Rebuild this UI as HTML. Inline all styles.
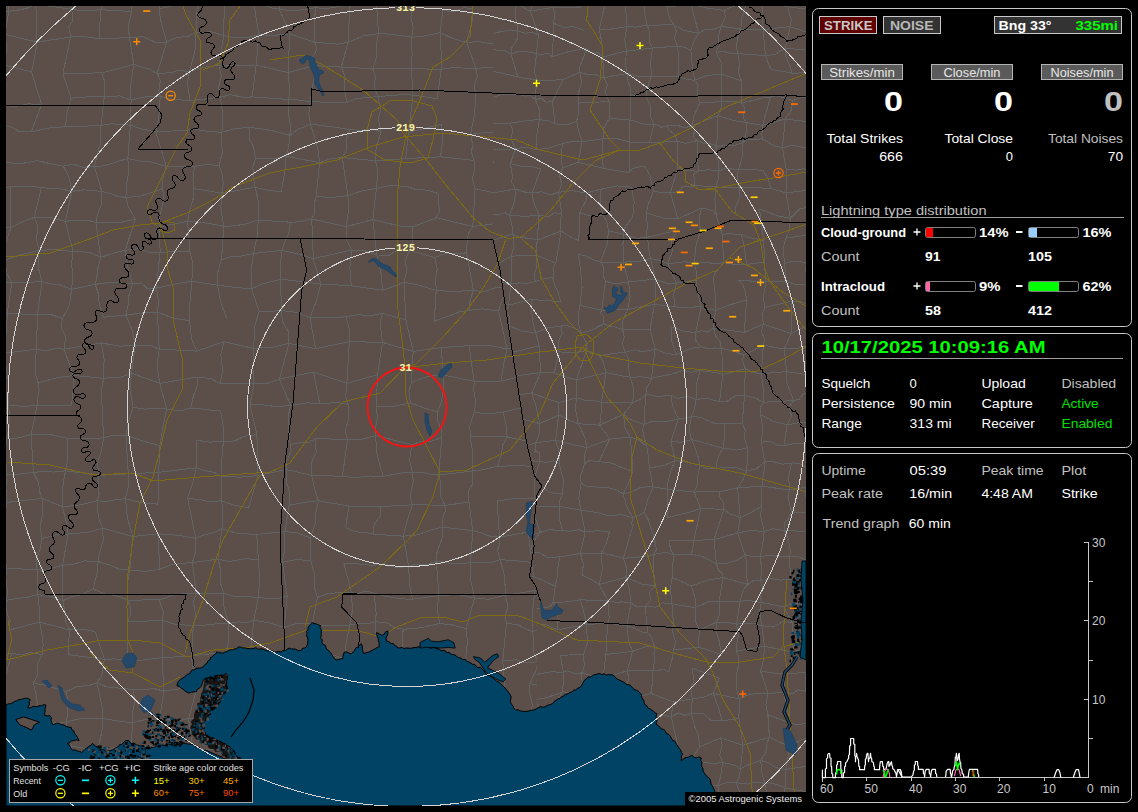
<!DOCTYPE html><html><head><meta charset="utf-8"><style>html,body{margin:0;padding:0;background:#000;width:1138px;height:812px;overflow:hidden}svg{display:block}</style></head><body>
<svg width="1138" height="812" viewBox="0 0 1138 812">
<rect width="1138" height="812" fill="#000"/>
<defs><clipPath id="mc"><rect x="6" y="6" width="800" height="800"/></clipPath></defs>
<g clip-path="url(#mc)">
<rect x="6" y="6" width="800" height="800" fill="#5c4f4a"/>
<clipPath id="ce"><path d="M493.0 6.0 L493.0 240.0 L500.0 270.0 L510.0 337.0 L523.0 420.0 L526.7 443.0 L534.5 476.0 L542.0 486.0 L537.0 507.0 L529.0 532.0 L532.0 578.0 L536.7 594.0 L536.7 806.0 L806.0 806.0 L806.0 6.0Z"/></clipPath>
<clipPath id="cw"><path d="M0 0L493 0L493.0 240.0 L500.0 270.0 L510.0 337.0 L523.0 420.0 L526.7 443.0 L534.5 476.0 L542.0 486.0 L537.0 507.0 L529.0 532.0 L532.0 578.0 L536.7 594.0 L536.7 806.0L536.7 820L0 820Z"/></clipPath>
<path clip-path="url(#cw)" d="M-28.8 -30.8L5.6 -22.3M-28.8 -30.8L-27.4 8.4M5.6 -22.3L17.4 -25.2L25.6 -25.6L36.0 -25.2M5.6 -22.3L8.8 11.2M36.0 -25.2L35.8 4.3M62.2 -25.2L65.2 -10.2L71.7 9.2M104.3 -20.8L118.9 -26.8L132.8 -29.7M104.3 -20.8L104.7 -3.6L100.8 9.7M132.8 -29.7L147.9 -25.5L165.7 -20.7M132.8 -29.7L131.7 11.5M165.7 -20.7L159.0 8.9M188.0 -23.4L200.3 -24.2L217.2 -29.6M188.0 -23.4L197.4 4.0M217.2 -29.6L226.9 -29.7L239.5 -30.4L251.8 -29.1M217.2 -29.6L220.4 -18.0L221.0 -6.9L224.3 4.4M251.8 -29.1L266.2 -27.6L273.9 -23.4L288.1 -21.2M251.8 -29.1L253.5 0.9M288.1 -21.2L301.8 -24.6L314.1 -27.2M288.1 -21.2L283.0 -5.7L279.2 9.1M314.1 -27.2L342.3 -30.0M314.1 -27.2L315.8 -11.2L315.4 7.5M342.3 -30.0L345.5 -12.9L349.9 5.0M380.6 -23.8L386.9 -24.0L395.7 -23.9L403.7 -25.2M380.6 -23.8L376.4 2.0M403.7 -25.2L423.5 -22.1L438.8 -20.8M438.8 -20.8L473.6 -23.8M473.6 -23.8L487.8 -21.0L502.6 -19.6M473.6 -23.8L474.5 -8.4L472.8 8.4M502.6 -19.6L515.0 -21.9L524.5 -24.9L538.8 -26.9M502.6 -19.6L498.3 9.2M538.8 -26.9L534.2 -9.8L531.0 5.3M560.9 -21.4L572.5 -24.3L579.5 -25.9L589.8 -26.6M560.9 -21.4L562.5 -7.7L561.8 6.8M589.8 -26.6L599.1 -26.3L611.5 -26.1L620.8 -27.2M589.8 -26.6L590.6 -13.3L594.9 -5.4L596.9 6.9M620.8 -27.2L651.8 -27.5M651.8 -27.5L691.5 -20.1M651.8 -27.5L654.8 -13.8L661.1 3.6M691.5 -20.1L709.1 -20.2L722.5 -24.3M691.5 -20.1L692.1 -15.4L689.0 -6.2L687.3 1.1M722.5 -24.3L737.4 -25.1L751.4 -26.7M722.5 -24.3L716.6 1.0M751.4 -26.7L777.0 -25.8M751.4 -26.7L751.5 -17.3L751.5 -5.6L748.1 8.5M777.0 -25.8L786.7 7.5M814.8 -30.2L809.2 7.9M837.2 -21.8L839.2 -9.5L841.2 -2.0L844.5 9.9M-27.4 8.4L8.8 11.2M-27.4 8.4L-24.6 41.9M8.8 11.2L16.5 10.4L26.6 8.4L35.8 4.3M8.8 11.2L5.0 34.4M35.8 4.3L71.7 9.2M35.8 4.3L36.3 15.7L36.4 27.8L37.2 42.1M71.7 9.2L84.5 11.0L100.8 9.7M71.7 9.2L72.9 20.3L68.8 26.9L70.7 36.9M100.8 9.7L131.7 11.5M100.8 9.7L99.0 38.8M131.7 11.5L128.3 25.8L129.4 37.6M159.0 8.9L179.4 4.0L197.4 4.0M159.0 8.9L160.8 20.7L164.2 33.4L166.7 42.2M197.4 4.0L213.0 3.3L224.3 4.4M197.4 4.0L196.5 20.5L196.1 32.5M224.3 4.4L233.5 4.1L244.1 1.7L253.5 0.9M224.3 4.4L223.7 35.4M253.5 0.9L260.5 2.8L270.9 7.8L279.2 9.1M253.5 0.9L258.9 34.8M279.2 9.1L289.2 10.4L305.2 9.8L315.4 7.5M279.2 9.1L290.2 33.9M315.4 7.5L325.7 8.8L337.3 6.7L349.9 5.0M315.4 7.5L314.5 24.3L315.0 42.5M349.9 5.0L356.7 4.8L368.0 4.0L376.4 2.0M349.9 5.0L348.1 42.2M376.4 2.0L387.9 3.2L402.5 6.3L412.5 10.0M376.4 2.0L378.5 33.7M412.5 10.0L410.9 16.9L413.3 27.9L411.6 37.3M442.8 10.5L453.9 11.7L463.8 7.8L472.8 8.4M442.8 10.5L440.1 32.6M472.8 8.4L471.9 23.0L466.7 42.2M498.3 9.2L514.7 4.9L531.0 5.3M498.3 9.2L501.4 27.3L507.5 42.6M531.0 5.3L530.8 16.7L531.3 31.6M561.8 6.8L578.9 9.2L596.9 6.9M561.8 6.8L565.4 25.5L564.6 39.8M596.9 6.9L608.1 5.0L614.5 3.9L623.8 2.6M596.9 6.9L597.0 17.3L596.8 31.6M661.1 3.6L671.3 1.0L678.7 2.6L687.3 1.1M661.1 3.6L660.4 16.3L654.9 30.9L651.7 41.2M687.3 1.1L697.5 3.2L706.6 2.5L716.6 1.0M687.3 1.1L691.6 17.9L693.9 34.0M716.6 1.0L730.7 2.8L748.1 8.5M716.6 1.0L713.6 42.8M748.1 8.5L765.3 7.2L786.7 7.5M748.1 8.5L748.2 23.2L753.2 36.5M786.7 7.5L809.2 7.9M786.7 7.5L780.7 42.0M809.2 7.9L820.5 7.3L834.3 11.2L844.5 9.9M809.2 7.9L807.1 14.1L812.4 25.7L810.3 31.6M844.5 9.9L846.6 16.7L846.4 28.0L844.4 34.8M-24.6 41.9L5.0 34.4M-24.6 41.9L-22.8 73.4M5.0 34.4L37.2 42.1M5.0 34.4L6.8 48.8L4.3 65.0M37.2 42.1L53.8 39.6L70.7 36.9M37.2 42.1L34.6 57.2L31.6 72.0M70.7 36.9L83.4 36.4L99.0 38.8M70.7 36.9L62.9 73.4M99.0 38.8L129.4 37.6M129.4 37.6L143.1 36.7L156.7 43.0L166.7 42.2M129.4 37.6L133.8 64.3M166.7 42.2L174.6 38.2L188.4 36.1L196.1 32.5M166.7 42.2L157.1 73.5M196.1 32.5L211.7 31.8L223.7 35.4M196.1 32.5L194.9 51.5L189.5 71.5M223.7 35.4L234.1 37.7L249.5 37.2L258.9 34.8M223.7 35.4L219.0 65.6M258.9 34.8L274.1 35.3L290.2 33.9M258.9 34.8L257.2 46.5L257.1 55.2L256.1 65.0M290.2 33.9L315.0 42.5M290.2 33.9L288.7 54.6L288.0 72.6M315.0 42.5L323.7 43.0L338.5 44.2L348.1 42.2M315.0 42.5L316.9 49.5L312.8 57.0L313.8 65.6M348.1 42.2L363.9 35.8L378.5 33.7M348.1 42.2L341.3 67.1M378.5 33.7L387.0 34.0L401.0 35.5L411.6 37.3M378.5 33.7L376.5 43.8L376.5 57.8L372.8 68.9M411.6 37.3L421.8 36.5L431.6 34.5L440.1 32.6M411.6 37.3L412.1 54.9L411.3 68.8M440.1 32.6L449.8 37.1L459.8 40.8L466.7 42.2M440.1 32.6L440.9 47.3L441.3 57.8L441.2 69.2M466.7 42.2L479.9 41.8L495.6 44.3L507.5 42.6M466.7 42.2L475.8 68.4M507.5 42.6L531.3 31.6M507.5 42.6L506.3 66.2M531.3 31.6L564.6 39.8M531.3 31.6L530.8 49.8L528.7 64.7M564.6 39.8L567.5 64.8M596.8 31.6L622.8 39.5M596.8 31.6L598.3 72.8M622.8 39.5L651.7 41.2M622.8 39.5L623.2 45.5L626.3 56.5L626.5 63.7M651.7 41.2L653.5 47.3L655.8 57.8L658.5 66.6M693.9 34.0L713.6 42.8M693.9 34.0L692.9 64.7M713.6 42.8L728.7 39.6L740.9 37.5L753.2 36.5M713.6 42.8L714.1 51.2L714.8 59.9L715.8 67.8M753.2 36.5L753.0 43.6L750.6 53.9L749.9 64.3M780.7 42.0L789.8 40.5L802.2 35.7L810.3 31.6M780.7 42.0L779.6 49.9L782.0 58.8L779.5 70.0M810.3 31.6L829.4 33.7L844.4 34.8M810.3 31.6L810.2 49.0L811.6 62.7M844.4 34.8L843.4 51.6L842.0 67.0M-22.8 73.4L-25.6 93.3M4.3 65.0L31.6 72.0M4.3 65.0L6.1 85.0L3.3 104.4M31.6 72.0L36.3 87.6L41.6 104.3M62.9 73.4L101.5 72.9M62.9 73.4L71.1 98.2M101.5 72.9L119.8 68.3L133.8 64.3M101.5 72.9L104.6 81.1L104.5 90.6L104.3 96.6M133.8 64.3L139.9 66.7L150.5 69.5L157.1 73.5M133.8 64.3L132.2 74.7L130.4 88.0L131.1 100.0M157.1 73.5L169.6 72.8L178.6 70.4L189.5 71.5M157.1 73.5L160.4 80.8L159.0 90.6L160.3 96.0M189.5 71.5L200.7 68.2L209.4 66.4L219.0 65.6M189.5 71.5L187.4 83.5L188.3 88.6L190.0 100.7M219.0 65.6L256.1 65.0M219.0 65.6L221.4 75.8L218.6 87.2L220.4 97.2M256.1 65.0L288.0 72.6M256.1 65.0L252.2 96.9M288.0 72.6L313.8 65.6M288.0 72.6L288.9 80.0L289.3 88.7L288.9 99.5M313.8 65.6L341.3 67.1M313.8 65.6L314.5 76.2L311.7 90.3L310.2 101.9M341.3 67.1L357.3 67.9L372.8 68.9M341.3 67.1L345.1 77.0L344.2 89.7L347.0 102.3M372.8 68.9L390.0 68.0L411.3 68.8M372.8 68.9L375.2 76.4L374.6 88.0L377.9 96.7M411.3 68.8L441.2 69.2M411.3 68.8L413.1 95.1M441.2 69.2L451.8 67.8L462.2 68.0L475.8 68.4M441.2 69.2L437.3 98.8M475.8 68.4L506.3 66.2M475.8 68.4L477.4 76.5L474.6 84.3L475.3 94.4M506.3 66.2L528.7 64.7M506.3 66.2L503.3 84.5L500.1 99.4M528.7 64.7L567.5 64.8M528.7 64.7L531.4 75.3L531.2 86.7L535.1 94.3M598.3 72.8L597.7 81.4L594.3 91.1L595.2 97.6M626.5 63.7L625.9 84.7L623.8 103.7M658.5 66.6L692.9 64.7M658.5 66.6L659.4 76.9L662.9 87.0L662.9 95.1M692.9 64.7L706.0 65.0L715.8 67.8M692.9 64.7L684.5 101.0M715.8 67.8L724.9 69.0L740.1 63.3L749.9 64.3M715.8 67.8L716.6 79.7L718.1 91.7L722.2 102.9M749.9 64.3L779.5 70.0M749.9 64.3L747.6 95.5M779.5 70.0L794.7 64.5L811.6 62.7M779.5 70.0L777.3 83.6L775.9 97.5M811.6 62.7L812.7 103.5M842.0 67.0L841.4 78.5L837.4 94.1M-25.6 93.3L-14.9 98.1L-7.4 101.6L3.3 104.4M3.3 104.4L14.3 106.9L27.8 103.9L41.6 104.3M3.3 104.4L1.5 125.2M41.6 104.3L31.3 131.8M71.1 98.2L86.1 97.0L104.3 96.6M71.1 98.2L67.2 111.8L65.4 126.9M104.3 96.6L119.3 95.9L131.1 100.0M104.3 96.6L101.0 125.5M131.1 100.0L146.2 96.7L160.3 96.0M131.1 100.0L130.4 125.1M160.3 96.0L167.9 98.7L182.0 100.0L190.0 100.7M160.3 96.0L159.0 115.6L155.8 132.0M190.0 100.7L220.4 97.2M220.4 97.2L230.7 94.6L242.8 97.5L252.2 96.9M220.4 97.2L223.0 115.9L221.8 132.4M252.2 96.9L288.9 99.5M288.9 99.5L298.4 100.0L310.2 101.9M288.9 99.5L288.3 113.2L290.4 125.1L289.9 135.4M310.2 101.9L347.0 102.3M310.2 101.9L308.8 113.6L310.5 124.0M347.0 102.3L356.1 98.6L368.2 97.3L377.9 96.7M377.9 96.7L390.9 95.5L402.9 94.7L413.1 95.1M377.9 96.7L380.9 110.0L378.2 118.7L381.1 131.7M413.1 95.1L437.3 98.8M413.1 95.1L408.4 132.5M475.3 94.4L474.9 112.4L470.6 134.6M500.1 99.4L516.6 98.1L535.1 94.3M500.1 99.4L500.9 111.5L501.9 123.4L505.4 131.9M535.1 94.3L549.8 98.6L567.1 99.7M567.1 99.7L574.3 97.8L588.0 100.8L595.2 97.6M567.1 99.7L564.1 111.8L562.8 121.1L561.5 128.7M595.2 97.6L607.9 100.3L623.8 103.7M595.2 97.6L596.6 133.9M623.8 103.7L642.3 100.9L662.9 95.1M662.9 95.1L674.6 98.4L684.5 101.0M662.9 95.1L661.6 107.0L656.7 119.9L654.3 129.3M684.5 101.0L722.2 102.9M684.5 101.0L683.2 131.5M747.6 95.5L775.9 97.5M747.6 95.5L749.9 106.8L752.4 119.4L755.5 129.0M775.9 97.5L794.5 102.7L812.7 103.5M775.9 97.5L780.0 109.9L781.1 121.2L781.4 135.7M812.7 103.5L837.4 94.1M812.7 103.5L812.0 115.4L814.5 130.1M837.4 94.1L842.4 106.5L843.5 119.4L846.1 129.7M-23.2 132.1L-9.6 129.9L1.5 125.2M-23.2 132.1L-21.0 142.9L-22.3 157.7M1.5 125.2L9.3 126.3L19.0 131.2L31.3 131.8M31.3 131.8L45.1 128.8L52.9 127.2L65.4 126.9M65.4 126.9L101.0 125.5M101.0 125.5L112.1 123.7L120.0 124.7L130.4 125.1M101.0 125.5L100.9 141.4L97.2 155.1L94.3 166.6M130.4 125.1L142.3 129.0L155.8 132.0M130.4 125.1L127.8 158.4M155.8 132.0L195.5 129.5M155.8 132.0L166.3 166.5M195.5 129.5L209.9 131.5L221.8 132.4M221.8 132.4L233.9 128.8L248.9 127.3M221.8 132.4L221.6 141.4L222.3 152.3L219.1 165.3M248.9 127.3L263.4 129.0L274.0 131.1L289.9 135.4M248.9 127.3L249.6 139.9L253.4 146.1L255.4 158.5M289.9 135.4L297.7 129.2L302.8 127.4L310.5 124.0M289.9 135.4L288.8 146.0L286.2 156.3M310.5 124.0L350.2 129.4M310.5 124.0L314.3 136.2L318.2 150.7L319.5 162.7M350.2 129.4L360.1 130.7L370.9 129.0L381.1 131.7M350.2 129.4L345.9 139.9L346.9 149.2L342.3 157.6M381.1 131.7L376.1 148.1L375.5 160.7M408.4 132.5L441.3 124.2M408.4 132.5L405.8 158.6M441.3 124.2L442.8 138.9L440.6 156.8M470.6 134.6L480.9 133.0L494.0 132.3L505.4 131.9M470.6 134.6L473.1 145.6L471.1 151.1L474.0 160.4M505.4 131.9L534.5 133.8M505.4 131.9L500.7 149.1L500.9 161.9M534.5 133.8L545.5 129.0L561.5 128.7M534.5 133.8L528.9 165.7M561.5 128.7L577.0 131.8L596.6 133.9M561.5 128.7L560.0 145.7L559.4 161.6M596.6 133.9L606.1 130.8L615.4 126.3L623.9 126.0M596.6 133.9L600.6 156.7M623.9 126.0L637.0 128.5L654.3 129.3M623.9 126.0L625.1 148.0L628.4 166.7M654.3 129.3L683.2 131.5M683.2 131.5L695.8 129.6L710.7 128.3L723.8 128.1M683.2 131.5L684.5 141.9L685.2 153.1L689.5 166.3M723.8 128.1L739.6 130.3L755.5 129.0M723.8 128.1L723.6 142.5L723.3 153.4L720.5 165.5M755.5 129.0L770.0 131.0L781.4 135.7M781.4 135.7L778.3 150.7L779.1 165.7M814.5 130.1L846.1 129.7M814.5 130.1L811.1 143.2L811.6 160.2M846.1 129.7L840.7 156.9M-22.3 157.7L-14.6 160.9L-5.1 163.0L0.9 162.2M-22.3 157.7L-21.4 170.7L-24.5 182.2L-23.0 190.7M0.9 162.2L21.0 163.7L37.3 160.5M37.3 160.5L51.6 164.0L63.4 166.2M63.4 166.2L72.5 164.1L84.3 167.6L94.3 166.6M63.4 166.2L69.3 177.9L71.9 191.5M94.3 166.6L104.5 165.8L114.8 162.3L127.8 158.4M94.3 166.6L101.9 191.4M127.8 158.4L138.4 160.9L151.0 161.9L166.3 166.5M127.8 158.4L128.7 171.3L126.5 185.6L125.9 197.4M166.3 166.5L194.4 166.5M166.3 166.5L164.3 173.2L162.3 181.0L162.7 188.6M194.4 166.5L205.5 164.6L219.1 165.3M194.4 166.5L193.0 179.3L193.2 188.5M219.1 165.3L222.1 174.0L223.3 183.2L221.8 193.1M255.4 158.5L272.5 158.8L286.2 156.3M255.4 158.5L253.0 167.2L253.1 177.1L255.3 187.3M286.2 156.3L319.5 162.7M286.2 156.3L284.8 171.9L281.3 191.5M319.5 162.7L330.4 158.6L342.3 157.6M319.5 162.7L316.2 196.3M342.3 157.6L375.5 160.7M342.3 157.6L347.9 195.7M375.5 160.7L405.8 158.6M375.5 160.7L378.0 171.8L377.1 180.3L376.4 188.3M405.8 158.6L440.6 156.8M440.6 156.8L474.0 160.4M474.0 160.4L474.2 171.0L472.3 178.6L475.1 188.8M500.9 161.9L511.8 162.4L521.8 163.9L528.9 165.7M528.9 165.7L535.3 197.6M559.4 161.6L600.6 156.7M559.4 161.6L563.0 178.1L565.0 191.3M600.6 156.7L608.4 159.7L618.9 163.3L628.4 166.7M600.6 156.7L595.4 186.1M628.4 166.7L648.0 164.8L662.9 159.2M628.4 166.7L627.4 173.6L624.8 183.9L620.1 191.9M662.9 159.2L676.9 162.4L689.5 166.3M662.9 159.2L655.5 187.6M689.5 166.3L703.5 166.1L720.5 165.5M689.5 166.3L686.3 193.7M720.5 165.5L752.4 155.4M720.5 165.5L719.3 172.0L719.3 183.7L719.3 190.8M752.4 155.4L765.5 162.5L779.1 165.7M752.4 155.4L753.2 186.6M779.1 165.7L792.5 162.2L802.4 160.0L811.6 160.2M779.1 165.7L783.4 174.7L783.7 186.0L785.6 194.1M811.6 160.2L840.7 156.9M811.6 160.2L813.5 173.6L810.8 184.7L811.0 194.3M840.7 156.9L843.8 173.6L848.3 193.9M-23.0 190.7L-14.1 188.1L1.2 189.7L10.6 186.5M-23.0 190.7L-23.0 225.4M10.6 186.5L41.5 187.1M10.6 186.5L11.0 227.7M41.5 187.1L50.8 188.9L61.2 189.0L71.9 191.5M41.5 187.1L34.4 217.3M71.9 191.5L84.0 189.8L92.9 190.7L101.9 191.4M71.9 191.5L65.3 221.4M101.9 191.4L111.9 194.0L117.3 196.4L125.9 197.4M101.9 191.4L101.8 204.3L97.7 213.7L96.0 222.5M125.9 197.4L139.3 196.3L151.9 192.4L162.7 188.6M125.9 197.4L128.2 206.5L135.3 219.3M162.7 188.6L163.8 200.3L159.7 216.5L159.6 227.0M193.2 188.5L221.8 193.1M193.2 188.5L193.7 197.4L190.2 208.4L187.6 221.2M221.8 193.1L255.3 187.3M221.8 193.1L220.8 208.0L223.6 226.2M255.3 187.3L269.0 190.5L281.3 191.5M255.3 187.3L258.8 204.0L258.3 220.1M316.2 196.3L331.2 197.6L347.9 195.7M316.2 196.3L314.7 201.6L314.6 213.7L311.6 218.9M347.9 195.7L360.6 191.3L376.4 188.3M347.9 195.7L348.6 210.2L346.2 226.7M376.4 188.3L390.3 185.6L406.4 186.3M376.4 188.3L372.8 219.6M406.4 186.3L416.3 189.6L427.3 190.1L438.4 193.6M438.4 193.6L438.2 199.7L439.4 210.7L436.4 217.7M475.1 188.8L504.5 195.0M475.1 188.8L472.8 226.5M504.5 195.0L535.3 197.6M504.5 195.0L496.6 223.3M535.3 197.6L551.0 195.1L565.0 191.3M535.3 197.6L531.1 207.9L531.0 216.2L528.7 224.2M565.0 191.3L595.4 186.1M565.0 191.3L560.6 204.9L559.3 218.6M595.4 186.1L593.8 205.0L595.5 228.4M620.1 191.9L632.3 191.6L642.6 186.8L655.5 187.6M655.5 187.6L686.3 193.7M655.5 187.6L654.5 209.6L653.4 226.8M686.3 193.7L702.1 193.0L719.3 190.8M686.3 193.7L685.0 208.3L684.9 220.3M719.3 190.8L737.8 186.6L753.2 186.6M719.3 190.8L720.2 201.3L719.8 214.3L718.2 227.3M753.2 186.6L785.6 194.1M753.2 186.6L747.8 205.2L747.4 222.7M785.6 194.1L811.0 194.3M785.6 194.1L781.7 206.2L782.0 211.8L780.7 223.0M811.0 194.3L822.7 194.7L834.9 194.9L848.3 193.9M811.0 194.3L811.4 226.7M848.3 193.9L847.4 202.2L840.5 215.5L839.4 223.1M-23.0 225.4L-6.3 226.8L11.0 227.7M-23.0 225.4L-27.2 238.9L-26.2 248.0L-29.4 258.5M11.0 227.7L22.9 221.7L34.4 217.3M11.0 227.7L5.7 242.8L5.1 260.0M34.4 217.3L51.9 217.9L65.3 221.4M34.4 217.3L37.9 226.0L36.5 238.3L39.0 250.4M65.3 221.4L75.8 220.1L88.2 220.4L96.0 222.5M65.3 221.4L73.1 251.5M96.0 222.5L117.9 223.0L135.3 219.3M96.0 222.5L98.3 241.0L100.7 257.2M135.3 219.3L125.2 250.2M159.6 227.0L187.6 221.2M159.6 227.0L160.1 252.3M187.6 221.2L203.4 222.5L223.6 226.2M187.6 221.2L189.8 251.2M223.6 226.2L234.8 225.9L247.5 223.5L258.3 220.1M223.6 226.2L222.7 243.6L221.3 259.8M258.3 220.1L290.4 222.2M258.3 220.1L257.2 235.7L253.5 253.5M290.4 222.2L298.9 221.9L311.6 218.9M290.4 222.2L289.0 232.5L284.6 242.7L282.0 250.3M311.6 218.9L346.2 226.7M311.6 218.9L312.9 239.6L313.1 258.6M346.2 226.7L372.8 219.6M346.2 226.7L346.8 240.2L351.6 250.0M372.8 219.6L384.9 222.4L400.9 226.3L412.6 226.9M372.8 219.6L376.8 255.0M412.6 226.9L436.4 217.7M412.6 226.9L412.2 236.6L412.1 242.5L409.6 250.4M436.4 217.7L472.8 226.5M472.8 226.5L482.3 225.5L496.6 223.3M472.8 226.5L468.6 233.0L467.1 241.6L466.6 252.8M496.6 223.3L528.7 224.2M496.6 223.3L505.1 256.2M528.7 224.2L531.9 257.6M559.3 218.6L564.2 236.5L569.9 253.8M595.5 228.4L607.8 223.0L620.3 218.2M595.5 228.4L599.6 254.3M620.3 218.2L633.8 218.8L641.6 221.7L653.4 226.8M620.3 218.2L619.5 231.6L623.4 246.6L624.7 259.9M653.4 226.8L655.7 232.5L656.6 239.6L660.3 249.6M684.9 220.3L718.2 227.3M684.9 220.3L688.5 252.6M718.2 227.3L747.4 222.7M718.2 227.3L717.4 239.6L718.5 249.2L718.9 257.1M747.4 222.7L749.9 237.1L748.0 255.2M780.7 223.0L790.9 222.7L799.0 223.2L811.4 226.7M780.7 223.0L777.8 240.5L777.9 253.3M811.4 226.7L820.0 223.1L832.1 225.8L839.4 223.1M811.4 226.7L816.7 256.8M839.4 223.1L840.9 235.4L841.4 251.3M-29.4 258.5L5.1 260.0M-29.4 258.5L-29.4 264.9L-26.6 276.7L-23.8 284.7M5.1 260.0L21.7 254.5L39.0 250.4M5.1 260.0L6.7 273.2L11.9 282.6M39.0 250.4L55.4 249.6L73.1 251.5M39.0 250.4L38.2 267.4L42.0 281.8M73.1 251.5L88.5 252.2L100.7 257.2M73.1 251.5L71.6 263.7L72.9 277.0L71.6 289.4M100.7 257.2L114.8 252.7L125.2 250.2M100.7 257.2L98.3 266.6L96.7 277.7L95.3 284.3M125.2 250.2L138.4 248.7L150.5 252.7L160.1 252.3M125.2 250.2L127.8 267.6L132.5 283.9M160.1 252.3L189.8 251.2M160.1 252.3L156.3 288.2M189.8 251.2L193.0 264.4L191.8 281.2M221.3 259.8L230.3 256.8L241.0 256.0L253.5 253.5M221.3 259.8L217.2 274.4L217.6 285.2M253.5 253.5L282.0 250.3M253.5 253.5L251.0 271.6L251.5 288.8M282.0 250.3L299.6 254.4L313.1 258.6M282.0 250.3L280.1 267.0L280.9 279.2M313.1 258.6L351.6 250.0M313.1 258.6L320.9 284.0M351.6 250.0L365.7 250.9L376.8 255.0M351.6 250.0L349.9 268.5L351.2 285.8M376.8 255.0L389.3 255.1L398.0 249.6L409.6 250.4M376.8 255.0L381.2 274.4L382.6 290.3M409.6 250.4L434.7 257.6M409.6 250.4L405.7 259.4L406.4 272.8L404.0 282.3M434.7 257.6L444.7 253.6L456.2 253.8L466.6 252.8M434.7 257.6L437.3 268.8L435.7 278.1L436.2 290.5M466.6 252.8L473.3 290.1M505.1 256.2L518.2 255.3L531.9 257.6M505.1 256.2L507.4 273.7L507.8 288.5M531.9 257.6L549.0 256.0L569.9 253.8M531.9 257.6L537.5 290.3M569.9 253.8L587.0 254.9L599.6 254.3M599.6 254.3L611.9 258.7L624.7 259.9M599.6 254.3L598.6 271.8L600.7 284.7M624.7 259.9L643.4 253.4L660.3 249.6M624.7 259.9L622.6 287.0M660.3 249.6L671.8 248.4L681.4 250.6L688.5 252.6M660.3 249.6L651.7 282.7M688.5 252.6L698.3 255.3L707.9 257.9L718.9 257.1M688.5 252.6L689.6 268.6L686.5 288.7M718.9 257.1L735.1 256.3L748.0 255.2M718.9 257.1L714.7 270.7L713.3 282.9M748.0 255.2L747.7 287.0M777.9 253.3L798.5 253.9L816.7 256.8M777.9 253.3L782.4 268.6L785.5 284.8M816.7 256.8L827.0 253.7L831.8 254.1L841.4 251.3M816.7 256.8L818.7 263.9L814.8 275.3L816.1 284.1M841.4 251.3L844.3 266.2L843.0 282.9M-23.8 284.7L11.9 282.6M-23.8 284.7L-25.1 295.2L-26.1 307.8L-28.6 320.7M11.9 282.6L42.0 281.8M11.9 282.6L7.2 313.2M42.0 281.8L52.5 284.1L60.2 284.9L71.6 289.4M42.0 281.8L39.6 298.7L37.5 314.9M71.6 289.4L95.3 284.3M71.6 289.4L69.3 305.7L62.4 318.4M95.3 284.3L112.0 282.1L132.5 283.9M95.3 284.3L98.6 294.3L99.1 304.0L103.4 317.3M132.5 283.9L140.8 282.9L147.2 288.5L156.3 288.2M132.5 283.9L129.1 294.7L127.8 307.0L125.8 315.0M156.3 288.2L175.4 284.0L191.8 281.2M156.3 288.2L158.7 301.3L157.4 312.0M191.8 281.2L217.6 285.2M191.8 281.2L190.7 295.5L189.1 309.7L189.5 320.8M217.6 285.2L237.0 287.6L251.5 288.8M217.6 285.2L220.6 302.1L227.1 319.5M251.5 288.8L263.3 283.6L272.3 281.5L280.9 279.2M251.5 288.8L259.1 311.3M280.9 279.2L320.9 284.0M280.9 279.2L280.3 290.3L281.6 301.2L281.6 310.5M320.9 284.0L351.2 285.8M320.9 284.0L316.4 300.9L310.0 317.7M351.2 285.8L382.6 290.3M382.6 290.3L404.0 282.3M404.0 282.3L418.3 285.0L436.2 290.5M404.0 282.3L405.9 319.9M436.2 290.5L455.3 291.6L473.3 290.1M436.2 290.5L434.3 321.1M473.3 290.1L482.9 292.0L497.4 287.3L507.8 288.5M473.3 290.1L470.0 301.6L469.2 310.4M507.8 288.5L537.5 290.3M507.8 288.5L501.8 300.1L498.6 311.0M537.5 290.3L565.3 288.8M537.5 290.3L537.0 298.4L537.1 310.7M565.3 288.8L600.7 284.7M565.3 288.8L561.1 305.5L558.6 317.4M600.7 284.7L610.2 284.0L622.6 287.0M600.7 284.7L591.5 314.0M622.6 287.0L629.4 315.1M651.7 282.7L686.5 288.7M651.7 282.7L654.6 295.6L659.8 313.4M686.5 288.7L713.3 282.9M686.5 288.7L683.5 296.4L686.1 304.9L683.6 310.8M713.3 282.9L725.3 286.7L736.8 286.8L747.7 287.0M713.3 282.9L719.5 295.5L723.1 311.5M747.7 287.0L758.8 285.0L774.0 285.7L785.5 284.8M747.7 287.0L748.4 301.9L744.9 311.9M785.5 284.8L783.6 301.7L781.3 318.3M816.1 284.1L823.9 283.4L832.8 282.2L843.0 282.9M816.1 284.1L813.8 295.2L812.9 305.0L811.9 317.4M843.0 282.9L843.9 301.3L843.0 318.9M-28.6 320.7L7.2 313.2M-28.6 320.7L-25.9 333.4L-23.8 343.1M7.2 313.2L37.5 314.9M7.2 313.2L6.7 328.2L5.4 339.4L4.0 352.9M37.5 314.9L52.2 314.9L62.4 318.4M37.5 314.9L36.4 349.1M62.4 318.4L61.1 326.8L65.7 336.6L64.1 349.1M103.4 317.3L125.8 315.0M125.8 315.0L134.4 314.0L149.3 312.6L157.4 312.0M125.8 315.0L132.0 329.8L135.3 345.7M157.4 312.0L172.3 317.9L189.5 320.8M157.4 312.0L159.2 349.1M189.5 320.8L190.8 332.1L192.1 340.5L197.0 351.1M259.1 311.3L268.9 311.5L281.6 310.5M259.1 311.3L254.4 327.4L253.8 348.4M281.6 310.5L297.1 312.6L310.0 317.7M281.6 310.5L282.3 321.2L288.6 332.3L289.0 343.4M310.0 317.7L329.9 318.0L345.9 316.8M310.0 317.7L315.6 348.7M345.9 316.8L358.0 314.6L370.1 315.9L382.4 313.4M345.9 316.8L349.8 330.7L349.3 341.6M382.4 313.4L405.9 319.9M382.4 313.4L380.1 322.6L381.3 332.9L382.5 342.4M405.9 319.9L413.2 351.4M434.3 321.1L447.4 316.6L459.9 311.7L469.2 310.4M469.2 310.4L482.6 308.8L498.6 311.0M498.6 311.0L507.1 348.9M537.1 310.7L537.1 323.7L536.3 332.6L532.6 345.3M558.6 317.4L574.8 313.9L591.5 314.0M558.6 317.4L563.5 326.9L563.9 340.3L569.9 352.2M591.5 314.0L609.6 315.7L629.4 315.1M591.5 314.0L593.3 329.0L596.0 339.8L600.1 352.1M629.4 315.1L639.5 314.9L648.5 314.1L659.8 313.4M629.4 315.1L628.6 324.9L624.8 336.8L624.3 351.0M659.8 313.4L665.8 311.7L674.2 311.8L683.6 310.8M659.8 313.4L659.3 352.0M683.6 310.8L705.6 313.3L723.1 311.5M683.6 310.8L690.8 351.0M723.1 311.5L732.2 310.1L737.4 312.3L744.9 311.9M723.1 311.5L722.6 347.9M744.9 311.9L764.0 314.1L781.3 318.3M744.9 311.9L752.4 341.9M781.3 318.3L811.9 317.4M781.3 318.3L781.2 333.0L779.6 350.7M811.9 317.4L843.0 318.9M811.9 317.4L808.9 332.5L807.1 345.0M-23.8 343.1L-9.7 350.2L4.0 352.9M-23.8 343.1L-24.0 353.1L-28.5 365.7L-30.1 374.1M4.0 352.9L19.2 351.6L36.4 349.1M4.0 352.9L8.0 378.6M36.4 349.1L46.1 350.9L55.0 348.6L64.1 349.1M36.4 349.1L35.6 359.7L35.5 374.1L38.1 382.9M64.1 349.1L101.4 342.9M64.1 349.1L73.2 375.5M101.4 342.9L119.2 346.1L135.3 345.7M101.4 342.9L104.1 359.1L103.6 378.3M135.3 345.7L149.3 345.0L159.2 349.1M135.3 345.7L133.4 358.0L131.7 373.2M159.2 349.1L197.0 351.1M159.2 349.1L157.0 365.8L159.8 383.4M197.0 351.1L223.7 341.7M223.7 341.7L253.8 348.4M223.7 341.7L220.9 354.8L222.7 370.8L220.0 383.5M253.8 348.4L273.4 347.0L289.0 343.4M253.8 348.4L252.9 367.8L254.0 383.4M289.0 343.4L315.6 348.7M289.0 343.4L279.4 379.1M315.6 348.7L349.3 341.6M349.3 341.6L382.5 342.4M349.3 341.6L346.9 383.4M382.5 342.4L413.2 351.4M382.5 342.4L377.5 374.6M413.2 351.4L441.4 347.5M413.2 351.4L411.4 382.5M441.4 347.5L469.2 345.7M441.4 347.5L443.1 375.0M469.2 345.7L489.6 345.5L507.1 348.9M469.2 345.7L471.7 365.5L474.3 381.3M507.1 348.9L532.6 345.3M507.1 348.9L504.9 359.0L502.3 371.1L501.5 381.1M532.6 345.3L569.9 352.2M532.6 345.3L529.4 352.9L526.9 366.9L527.4 374.5M569.9 352.2L586.6 351.2L600.1 352.1M569.9 352.2L569.2 362.0L563.6 375.0L562.6 383.1M600.1 352.1L624.3 351.0M624.3 351.0L643.9 352.9L659.3 352.0M624.3 351.0L626.2 366.4L629.9 380.7M659.3 352.0L674.0 352.0L690.8 351.0M659.3 352.0L657.1 364.6L651.9 371.1L651.8 382.7M690.8 351.0L705.1 351.0L722.6 347.9M690.8 351.0L690.1 356.9L690.7 366.1L691.1 374.6M722.6 347.9L730.1 345.2L744.8 341.9L752.4 341.9M722.6 347.9L720.7 355.7L719.1 368.8L720.1 377.4M752.4 341.9L764.1 348.5L779.6 350.7M752.4 341.9L751.1 357.5L747.9 367.1L744.3 381.6M779.6 350.7L786.4 347.4L796.4 348.4L807.1 345.0M779.6 350.7L779.1 379.5M844.5 346.4L841.9 363.9L843.3 377.4M-30.1 374.1L-10.0 378.2L8.0 378.6M-30.1 374.1L-28.9 384.7L-32.7 392.0L-30.9 404.4M8.0 378.6L8.7 405.2M38.1 382.9L55.1 378.2L73.2 375.5M38.1 382.9L39.2 390.6L37.4 398.5L37.3 405.0M73.2 375.5L103.6 378.3M73.2 375.5L73.4 389.1L71.5 405.5M103.6 378.3L114.2 377.4L120.5 377.2L131.7 373.2M103.6 378.3L101.2 391.6L102.2 408.3M131.7 373.2L159.8 383.4M131.7 373.2L129.9 387.9L133.0 407.3M159.8 383.4L179.8 379.9L197.3 377.0M159.8 383.4L166.6 409.0M197.3 377.0L210.8 378.5L220.0 383.5M197.3 377.0L197.0 386.6L193.2 396.6L190.9 408.0M220.0 383.5L254.0 383.4M254.0 383.4L266.8 383.6L279.4 379.1M254.0 383.4L250.1 404.8M279.4 379.1L313.4 372.0M279.4 379.1L290.6 405.5M313.4 372.0L346.9 383.4M313.4 372.0L319.7 404.0M346.9 383.4L377.5 374.6M346.9 383.4L345.7 396.2L348.1 404.3M377.5 374.6L376.3 407.0M411.4 382.5L427.4 376.4L443.1 375.0M411.4 382.5L408.9 391.5L410.4 403.0M443.1 375.0L474.3 381.3M443.1 375.0L443.6 387.5L441.5 402.0L437.3 412.1M474.3 381.3L501.5 381.1M474.3 381.3L473.6 389.8L475.8 403.0L474.1 412.5M501.5 381.1L527.4 374.5M527.4 374.5L539.5 378.0L551.5 380.7L562.6 383.1M527.4 374.5L531.1 390.0L532.2 406.8M562.6 383.1L597.4 380.0M597.4 380.0L629.9 380.7M597.4 380.0L593.7 390.0L591.4 405.2L590.6 414.5M629.9 380.7L638.6 382.8L646.0 382.1L651.8 382.7M629.9 380.7L621.5 412.2M651.8 382.7L662.5 379.2L676.8 378.7L691.1 374.6M651.8 382.7L653.5 413.3M691.1 374.6L689.5 414.3M720.1 377.4L733.4 380.9L744.3 381.6M720.1 377.4L722.0 396.6L720.2 413.1M744.3 381.6L779.1 379.5M744.3 381.6L746.1 396.3L749.9 413.7M779.1 379.5L815.8 383.2M779.1 379.5L779.9 414.1M815.8 383.2L830.2 381.9L843.3 377.4M815.8 383.2L812.5 396.5L813.8 414.0M843.3 377.4L840.6 389.6L837.0 396.1L837.5 407.4M-30.9 404.4L8.7 405.2M-30.9 404.4L-26.7 413.3L-25.6 424.7L-20.2 437.2M8.7 405.2L25.5 406.5L37.3 405.0M8.7 405.2L9.9 423.8L6.5 439.0M37.3 405.0L71.5 405.5M37.3 405.0L31.1 434.5M102.2 408.3L102.8 422.2L103.7 437.9M133.0 407.3L144.7 409.2L156.4 408.4L166.6 409.0M133.0 407.3L128.5 421.9L125.9 435.4M166.6 409.0L180.5 411.0L190.9 408.0M166.6 409.0L163.1 426.0L159.9 445.8M190.9 408.0L220.7 411.1M220.7 411.1L223.5 427.7L223.2 441.5M250.1 404.8L262.2 404.8L276.1 406.6L290.6 405.5M250.1 404.8L256.9 434.7M290.6 405.5L302.2 403.6L307.5 402.8L319.7 404.0M290.6 405.5L288.0 417.0L288.8 430.7L290.3 444.5M319.7 404.0L328.0 403.2L337.1 402.5L348.1 404.3M348.1 404.3L349.0 417.9L345.3 430.3L347.4 440.0M376.3 407.0L393.1 406.3L410.4 403.0M376.3 407.0L377.4 417.4L375.6 427.9L375.8 435.5M410.4 403.0L422.8 407.5L437.3 412.1M437.3 412.1L437.1 419.3L441.2 429.6L441.8 437.5M474.1 412.5L490.3 413.8L502.9 412.1M474.1 412.5L469.9 425.6L470.2 436.3M502.9 412.1L516.8 408.9L532.2 406.8M502.9 412.1L505.7 422.1L507.2 437.0M532.2 406.8L531.2 441.8M567.7 407.8L577.4 407.8L583.1 413.7L590.6 414.5M590.6 414.5L621.5 412.2M590.6 414.5L592.8 423.9L589.7 429.9L590.7 438.9M621.5 412.2L631.5 412.4L641.7 411.7L653.5 413.3M621.5 412.2L623.7 418.8L628.4 426.7L629.8 437.4M653.5 413.3L667.9 412.4L677.1 414.5L689.5 414.3M653.5 413.3L655.6 423.0L655.1 430.8L655.9 437.3M689.5 414.3L702.1 413.6L708.0 412.6L720.2 413.1M689.5 414.3L687.6 424.6L686.4 438.0M720.2 413.1L749.9 413.7M720.2 413.1L721.2 428.1L718.7 443.9M749.9 413.7L779.9 414.1M749.9 413.7L751.9 424.6L753.8 436.1M779.9 414.1L813.8 414.0M813.8 414.0L837.5 407.4M813.8 414.0L814.1 424.5L816.5 435.6L814.2 442.8M-20.2 437.2L6.5 439.0M-20.2 437.2L-25.6 458.8L-28.3 476.9M6.5 439.0L18.3 437.9L31.1 434.5M6.5 439.0L5.1 454.9L7.1 474.1M31.1 434.5L48.5 434.1L67.9 438.5M31.1 434.5L33.4 472.4M67.9 438.5L87.0 438.7L103.7 437.9M67.9 438.5L67.8 447.0L67.2 462.4L65.5 470.8M103.7 437.9L112.7 435.2L118.9 435.6L125.9 435.4M103.7 437.9L101.1 451.9L97.8 461.8L98.3 475.3M125.9 435.4L140.9 440.4L159.9 445.8M125.9 435.4L128.3 473.9M159.9 445.8L158.7 472.3M196.8 440.4L209.9 442.1L223.2 441.5M196.8 440.4L196.3 451.7L196.3 467.8M223.2 441.5L234.6 440.9L244.1 436.3L256.9 434.7M223.2 441.5L222.7 452.2L221.1 464.6L222.0 476.7M256.9 434.7L257.9 475.6M290.3 444.5L298.1 443.0L309.0 442.5L315.6 438.1M290.3 444.5L291.1 451.1L286.0 462.2L286.2 469.5M315.6 438.1L347.4 440.0M315.6 438.1L316.1 452.4L311.6 462.5L311.7 475.4M347.4 440.0L360.7 439.6L375.8 435.5M347.4 440.0L342.4 476.2M375.8 435.5L411.7 444.7M375.8 435.5L376.3 450.4L378.6 460.7L383.2 476.4M411.7 444.7L421.0 441.4L430.9 441.4L441.8 437.5M411.7 444.7L409.6 459.6L412.4 472.9M441.8 437.5L438.7 475.0M470.2 436.3L488.5 436.9L507.2 437.0M470.2 436.3L472.9 453.9L472.0 471.1M507.2 437.0L531.2 441.8M507.2 437.0L502.8 444.9L501.0 455.9L497.6 466.4M531.2 441.8L548.9 438.6L566.8 439.4M531.2 441.8L535.1 466.7M566.8 439.4L579.3 440.5L590.7 438.9M566.8 439.4L567.8 453.9L566.4 470.2M590.7 438.9L605.1 437.6L615.2 440.0L629.8 437.4M590.7 438.9L589.2 454.2L590.5 471.7M629.8 437.4L655.9 437.3M629.8 437.4L629.5 476.9M655.9 437.3L686.4 438.0M655.9 437.3L654.0 469.7M686.4 438.0L699.4 438.2L705.8 442.7L718.7 443.9M686.4 438.0L684.9 449.4L686.9 461.5L687.8 470.8M718.7 443.9L753.8 436.1M753.8 436.1L761.5 438.7L771.4 439.0L777.8 438.1M753.8 436.1L751.3 454.3L745.1 471.9M777.8 438.1L792.2 441.6L801.4 442.2L814.2 442.8M777.8 438.1L780.4 452.1L787.0 466.5M814.2 442.8L845.8 436.6M814.2 442.8L814.6 471.3M845.8 436.6L843.0 446.4L840.8 457.2L840.9 469.0M-28.3 476.9L7.1 474.1M-28.3 476.9L-22.2 487.7L-19.2 497.3M7.1 474.1L18.8 474.2L33.4 472.4M7.1 474.1L5.9 487.8L7.1 502.4M33.4 472.4L46.0 471.2L53.4 472.1L65.5 470.8M33.4 472.4L38.6 482.8L39.9 492.2L42.3 498.4M65.5 470.8L74.3 471.9L88.5 473.4L98.3 475.3M65.5 470.8L63.2 483.7L62.4 495.2L62.4 506.6M98.3 475.3L128.3 473.9M98.3 475.3L98.3 482.8L99.1 494.8L96.9 500.9M128.3 473.9L158.7 472.3M128.3 473.9L128.7 485.3L125.4 498.7M158.7 472.3L196.3 467.8M158.7 472.3L159.0 490.4L157.7 504.2M196.3 467.8L205.1 470.7L214.5 472.4L222.0 476.7M196.3 467.8L193.1 481.5L187.6 498.3M222.0 476.7L241.1 477.1L257.9 475.6M222.0 476.7L221.8 500.8M257.9 475.6L286.2 469.5M257.9 475.6L248.6 508.0M286.2 469.5L311.7 475.4M286.2 469.5L286.2 480.7L289.3 491.8L289.1 505.3M311.7 475.4L327.0 475.9L342.4 476.2M311.7 475.4L314.3 487.3L318.4 500.8M342.4 476.2L355.2 477.7L370.3 476.0L383.2 476.4M383.2 476.4L391.0 474.9L401.5 472.9L412.4 472.9M412.4 472.9L422.5 472.2L431.7 474.9L438.7 475.0M412.4 472.9L413.3 481.6L410.1 496.1L412.3 504.8M438.7 475.0L472.0 471.1M438.7 475.0L440.6 482.8L440.9 496.6L444.9 505.5M472.0 471.1L481.4 470.0L490.5 468.0L497.6 466.4M472.0 471.1L472.7 483.8L468.8 490.2L469.0 502.1M497.6 466.4L518.4 465.5L535.1 466.7M535.1 466.7L548.6 467.9L566.4 470.2M535.1 466.7L534.9 480.9L534.7 498.6M566.4 470.2L572.0 469.3L581.5 469.9L590.5 471.7M566.4 470.2L566.6 484.9L564.9 500.0M590.5 471.7L591.8 500.3M629.5 476.9L654.0 469.7M629.5 476.9L627.1 501.6M654.0 469.7L670.8 472.1L687.8 470.8M654.0 469.7L656.9 489.5L656.3 505.3M687.8 470.8L702.0 468.0L715.8 469.0M687.8 470.8L688.3 485.9L689.7 503.0M715.8 469.0L717.3 483.7L714.4 496.2M745.1 471.9L756.6 472.4L773.3 470.4L787.0 466.5M745.1 471.9L746.1 482.4L748.9 490.5L748.5 497.5M787.0 466.5L814.6 471.3M787.0 466.5L782.8 506.3M814.6 471.3L823.6 468.9L832.4 468.1L840.9 469.0M814.6 471.3L813.1 479.1L815.1 490.8L814.8 501.3M840.9 469.0L847.0 504.6M-19.2 497.3L7.1 502.4M-19.2 497.3L-22.2 513.4L-24.7 534.3M7.1 502.4L42.3 498.4M7.1 502.4L2.2 527.2M42.3 498.4L62.4 506.6M42.3 498.4L42.7 513.8L40.1 525.7L42.0 538.6M62.4 506.6L77.6 505.4L96.9 500.9M62.4 506.6L66.3 522.0L68.1 534.0M96.9 500.9L107.2 501.3L115.6 499.6L125.4 498.7M96.9 500.9L97.8 510.1L98.4 517.1L102.5 528.2M125.4 498.7L141.0 502.5L157.7 504.2M125.4 498.7L127.5 518.1L132.7 536.5M187.6 498.3L201.3 499.8L209.4 501.7L221.8 500.8M187.6 498.3L195.7 538.4M221.8 500.8L233.0 504.8L248.6 508.0M221.8 500.8L222.7 515.3L222.0 528.8M289.1 505.3L304.6 502.2L318.4 500.8M289.1 505.3L284.9 531.7M318.4 500.8L349.0 506.1M318.4 500.8L315.5 514.6L315.1 523.5L310.3 538.0M349.0 506.1L380.6 506.6M349.0 506.1L345.6 527.5M380.6 506.6L412.3 504.8M380.6 506.6L380.0 516.3L374.2 524.6L373.2 534.1M412.3 504.8L430.2 505.0L444.9 505.5M412.3 504.8L406.4 522.9L403.4 536.2M444.9 505.5L469.0 502.1M444.9 505.5L445.3 511.0L442.2 518.7L442.9 527.1M469.0 502.1L472.7 530.7M497.1 501.0L514.9 498.4L534.7 498.6M497.1 501.0L499.5 537.3M534.7 498.6L564.9 500.0M564.9 500.0L571.5 497.8L582.9 498.9L591.8 500.3M564.9 500.0L569.5 528.0M591.8 500.3L602.5 503.2L613.2 502.2L627.1 501.6M591.8 500.3L593.7 516.8L596.3 530.1M627.1 501.6L636.9 503.2L646.4 502.2L656.3 505.3M627.1 501.6L625.5 518.4L622.8 531.0M656.3 505.3L673.3 505.1L689.7 503.0M656.3 505.3L658.2 512.0L657.5 524.2L659.6 532.0M689.7 503.0L714.4 496.2M689.7 503.0L688.2 521.0L690.6 538.0M714.4 496.2L725.2 496.8L738.5 497.1L748.5 497.5M714.4 496.2L720.9 515.9L724.0 533.4M748.5 497.5L746.8 511.3L749.8 521.7L747.1 534.6M782.8 506.3L799.6 502.8L814.8 501.3M782.8 506.3L776.1 531.1M814.8 501.3L828.8 504.2L847.0 504.6M814.8 501.3L809.6 538.4M847.0 504.6L845.8 515.1L846.8 521.1L843.7 531.7M-24.7 534.3L-14.0 531.8L-4.9 529.7L2.2 527.2M-24.7 534.3L-28.1 543.2L-26.5 554.5L-27.6 564.4M2.2 527.2L6.4 568.3M42.0 538.6L57.2 534.5L68.1 534.0M42.0 538.6L40.0 549.4L36.9 558.0L37.0 569.7M68.1 534.0L87.7 532.4L102.5 528.2M68.1 534.0L62.6 565.3M102.5 528.2L132.7 536.5M102.5 528.2L103.3 540.2L99.4 552.8L98.1 561.6M132.7 536.5L145.2 535.2L157.9 533.8M132.7 536.5L129.8 570.0M157.9 533.8L179.2 535.3L195.7 538.4M157.9 533.8L159.8 569.3M195.7 538.4L202.6 535.4L213.8 532.5L222.0 528.8M195.7 538.4L195.1 548.2L195.3 552.5L192.4 562.7M222.0 528.8L237.1 533.4L256.7 534.4M222.0 528.8L217.9 559.1M256.7 534.4L284.9 531.7M256.7 534.4L258.4 559.6M284.9 531.7L296.6 532.5L310.3 538.0M284.9 531.7L285.0 547.2L282.5 562.4M310.3 538.0L310.8 560.5M345.6 527.5L354.3 531.8L366.0 532.5L373.2 534.1M373.2 534.1L403.4 536.2M403.4 536.2L417.3 534.9L431.1 529.9L442.9 527.1M403.4 536.2L408.6 566.3M442.9 527.1L472.7 530.7M442.9 527.1L441.9 539.3L437.1 551.3L436.4 560.9M472.7 530.7L481.7 532.9L488.6 535.9L499.5 537.3M472.7 530.7L470.5 562.8M499.5 537.3L527.9 532.0M499.5 537.3L499.7 543.9L497.5 549.9L499.9 559.7M527.9 532.0L543.7 530.5L556.7 527.3L569.5 528.0M527.9 532.0L529.5 541.1L530.5 552.4L533.0 562.5M569.5 528.0L576.1 527.1L586.2 529.9L596.3 530.1M569.5 528.0L564.3 549.8L562.5 567.5M596.3 530.1L622.8 531.0M596.3 530.1L589.6 560.3M622.8 531.0L659.6 532.0M622.8 531.0L628.6 546.5L631.5 562.2M659.6 532.0L671.5 533.7L682.7 537.5L690.6 538.0M659.6 532.0L651.7 560.8M690.6 538.0L688.4 546.3L685.6 561.0L682.9 569.7M724.0 533.4L747.1 534.6M724.0 533.4L723.8 543.0L718.2 552.7L716.7 560.0M747.1 534.6L760.6 532.3L776.1 531.1M747.1 534.6L745.6 545.7L747.5 557.6L745.2 567.9M776.1 531.1L809.6 538.4M776.1 531.1L776.0 544.1L780.7 554.8L781.7 568.8M809.6 538.4L820.6 534.8L833.2 536.3L843.7 531.7M809.6 538.4L810.7 563.1M843.7 531.7L843.1 544.9L841.0 555.4L843.3 565.6M-27.6 564.4L-18.3 565.3L-5.6 568.8L6.4 568.3M-27.6 564.4L-26.6 572.6L-26.5 583.1L-24.8 592.0M6.4 568.3L37.0 569.7M6.4 568.3L5.9 577.5L7.4 591.8L6.7 600.3M37.0 569.7L44.9 570.4L54.9 567.3L62.6 565.3M37.0 569.7L37.7 594.3M62.6 565.3L74.6 563.9L84.6 560.9L98.1 561.6M62.6 565.3L62.9 600.8M98.1 561.6L110.2 565.1L120.2 569.7L129.8 570.0M98.1 561.6L97.2 572.6L94.9 581.5L93.3 589.1M129.8 570.0L145.4 571.4L159.8 569.3M129.8 570.0L127.0 586.3L128.0 600.1M159.8 569.3L171.1 564.9L184.0 563.1L192.4 562.7M192.4 562.7L217.9 559.1M192.4 562.7L196.4 593.2M217.9 559.1L229.3 561.4L245.8 558.7L258.4 559.6M217.9 559.1L220.8 570.6L220.3 582.1L223.7 593.5M258.4 559.6L259.7 578.7L258.4 597.3M282.5 562.4L295.8 559.6L310.8 560.5M282.5 562.4L287.2 596.3M310.8 560.5L314.8 575.2L314.3 587.3L317.5 597.4M343.7 563.1L354.5 563.4L364.9 564.7L373.6 565.3M343.7 563.1L351.5 592.5M373.6 565.3L384.4 563.8L396.6 567.9L408.6 566.3M408.6 566.3L416.8 564.1L428.4 564.3L436.4 560.9M408.6 566.3L409.6 585.2L412.4 599.3M436.4 560.9L453.5 563.9L470.5 562.8M436.4 560.9L438.9 595.6M470.5 562.8L481.0 562.5L491.8 562.4L499.9 559.7M470.5 562.8L471.0 581.8L474.6 598.2M499.9 559.7L516.2 560.7L533.0 562.5M499.9 559.7L504.8 576.5L505.3 595.3M533.0 562.5L532.6 572.5L536.4 579.2L534.9 590.6M562.5 567.5L570.4 566.9L578.8 564.6L589.6 560.3M562.5 567.5L563.7 580.8L564.3 589.2M589.6 560.3L610.2 559.2L631.5 562.2M589.6 560.3L592.4 576.7L594.5 590.3M631.5 562.2L635.9 562.4L644.8 561.3L651.7 560.8M631.5 562.2L630.6 576.0L631.2 588.2L630.6 599.1M651.7 560.8L682.9 569.7M651.7 560.8L652.9 573.2L654.8 585.8L658.1 600.1M682.9 569.7L692.3 568.1L706.7 560.9L716.7 560.0M682.9 569.7L683.5 597.3M716.7 560.0L745.2 567.9M716.7 560.0L718.1 574.8L718.3 583.4L718.0 597.5M745.2 567.9L781.7 568.8M745.2 567.9L753.2 600.2M781.7 568.8L789.8 567.6L801.9 565.7L810.7 563.1M781.7 568.8L783.1 577.4L785.3 588.4L786.4 595.5M810.7 563.1L825.2 564.0L843.3 565.6M810.7 563.1L812.9 576.2L817.0 594.1M843.3 565.6L845.1 582.0L845.7 595.4M-24.8 592.0L-14.7 594.2L-6.2 595.3L6.7 600.3M6.7 600.3L19.2 598.2L29.4 596.9L37.7 594.3M6.7 600.3L6.5 612.1L10.1 621.1L9.1 630.2M37.7 594.3L46.7 596.6L52.8 597.0L62.9 600.8M37.7 594.3L39.1 606.7L39.6 622.0M62.9 600.8L71.4 596.8L81.4 594.7L93.3 589.1M62.9 600.8L65.0 612.4L65.1 621.1L69.7 629.9M93.3 589.1L105.2 594.0L115.8 595.4L128.0 600.1M128.0 600.1L159.1 599.9M128.0 600.1L130.4 608.2L130.3 614.8L127.7 622.0M159.1 599.9L176.0 594.3L196.4 593.2M159.1 599.9L163.3 612.0L162.6 620.3M196.4 593.2L223.7 593.5M196.4 593.2L193.4 602.2L195.9 615.6L193.2 625.1M223.7 593.5L233.6 596.1L245.2 596.7L258.4 597.3M223.7 593.5L224.0 607.3L228.4 623.5M258.4 597.3L266.6 598.6L277.7 598.6L287.2 596.3M258.4 597.3L253.8 620.3M287.2 596.3L284.2 627.7M317.5 597.4L327.8 593.5L337.7 592.8L351.5 592.5M317.5 597.4L312.1 624.1M351.5 592.5L357.1 593.6L366.7 591.0L374.0 593.0M351.5 592.5L352.4 610.9L349.9 625.0M374.0 593.0L384.7 596.2L401.0 598.8L412.4 599.3M374.0 593.0L375.2 603.3L376.2 614.3L375.0 621.8M412.4 599.3L438.9 595.6M438.9 595.6L458.2 594.6L474.6 598.2M438.9 595.6L437.2 608.1L439.5 623.5M474.6 598.2L489.2 599.2L505.3 595.3M474.6 598.2L466.1 628.6M505.3 595.3L534.9 590.6M505.3 595.3L508.1 605.9L505.2 615.7L506.4 623.9M534.9 590.6L548.9 588.0L564.3 589.2M534.9 590.6L532.5 610.9L532.2 631.5M564.3 589.2L562.6 598.8L560.7 613.8L561.4 624.7M594.5 590.3L630.6 599.1M594.5 590.3L593.8 601.0L594.1 617.2L593.9 627.2M630.6 599.1L658.1 600.1M630.6 599.1L624.6 631.1M658.1 600.1L670.7 597.2L683.5 597.3M658.1 600.1L660.4 623.3M683.5 597.3L718.0 597.5M683.5 597.3L682.3 608.9L682.6 617.8L683.0 630.8M718.0 597.5L736.4 599.7L753.2 600.2M718.0 597.5L719.8 613.4L722.0 624.3M753.2 600.2L762.6 598.6L773.0 596.6L786.4 595.5M753.2 600.2L752.0 622.1M786.4 595.5L817.0 594.1M786.4 595.5L779.2 628.5M817.0 594.1L826.8 594.7L837.4 594.7L845.7 595.4M817.0 594.1L814.1 608.9L812.6 627.5M845.7 595.4L846.6 603.6L845.2 614.0L843.6 625.1M9.1 630.2L39.6 622.0M39.6 622.0L69.7 629.9M39.6 622.0L42.0 635.0L43.1 644.4L42.3 654.7M69.7 629.9L82.6 629.2L95.1 631.7M69.7 629.9L68.7 642.2L68.2 654.6M95.1 631.7L104.6 659.3M127.7 622.0L162.6 620.3M127.7 622.0L127.9 660.9M162.6 620.3L176.5 624.9L193.2 625.1M162.6 620.3L162.1 657.6M193.2 625.1L204.1 625.2L215.1 624.0L228.4 623.5M193.2 625.1L192.8 636.1L193.0 644.1L191.3 656.2M228.4 623.5L238.9 621.9L246.3 623.0L253.8 620.3M228.4 623.5L228.7 640.8L226.3 653.5M253.8 620.3L268.7 622.7L284.2 627.7M253.8 620.3L249.7 658.9M284.2 627.7L295.3 624.0L301.8 623.2L312.1 624.1M312.1 624.1L328.8 626.0L349.9 625.0M312.1 624.1L312.5 652.0M349.9 625.0L359.2 623.3L368.5 623.7L375.0 621.8M349.9 625.0L345.9 644.3L345.9 659.0M375.0 621.8L386.6 622.6L394.3 627.5L403.2 629.3M375.0 621.8L375.5 632.0L379.4 641.6L381.8 654.8M403.2 629.3L421.2 627.7L439.5 623.5M403.2 629.3L402.2 641.4L403.7 653.6M439.5 623.5L452.5 625.0L466.1 628.6M466.1 628.6L467.4 642.5L465.4 660.0M506.4 623.9L516.8 624.1L525.9 628.9L532.2 631.5M506.4 623.9L502.8 660.3M532.2 631.5L561.4 624.7M532.2 631.5L533.9 639.5L533.8 652.9L538.0 661.7M561.4 624.7L593.9 627.2M561.4 624.7L563.5 637.9L561.5 652.4M624.6 631.1L644.5 625.9L660.4 623.3M624.6 631.1L630.5 658.4M660.4 623.3L683.0 630.8M683.0 630.8L695.2 629.7L708.9 625.5L722.0 624.3M722.0 624.3L735.9 623.4L752.0 622.1M722.0 624.3L717.0 638.8L713.3 651.4M752.0 622.1L763.9 623.8L779.2 628.5M752.0 622.1L754.9 637.7L755.0 657.9M779.2 628.5L788.0 629.1L802.7 626.6L812.6 627.5M779.2 628.5L781.3 642.6L779.7 660.8M812.6 627.5L827.9 628.4L843.6 625.1M812.6 627.5L813.0 652.7M843.6 625.1L845.4 656.3M-25.3 659.3L-13.4 656.4L-1.8 655.4L11.8 653.7M-25.3 659.3L-23.6 693.6M11.8 653.7L23.5 654.5L30.2 652.4L42.3 654.7M11.8 653.7L0.6 693.2M42.3 654.7L37.7 663.6L37.5 674.8L33.2 683.2M68.2 654.6L104.6 659.3M104.6 659.3L114.7 658.9L127.9 660.9M104.6 659.3L102.8 665.2L101.8 676.0L96.7 682.6M127.9 660.9L143.1 660.0L162.1 657.6M162.1 657.6L191.3 656.2M162.1 657.6L163.9 691.1M191.3 656.2L203.6 654.3L215.4 653.7L226.3 653.5M191.3 656.2L193.0 668.5L197.7 676.2L197.3 685.9M226.3 653.5L232.1 653.0L244.2 659.3L249.7 658.9M226.3 653.5L227.1 687.4M249.7 658.9L261.2 657.7L274.2 655.0L282.9 653.8M249.7 658.9L253.9 669.3L253.9 682.5M282.9 653.8L312.5 652.0M282.9 653.8L286.1 666.1L286.7 679.6L289.6 689.6M312.5 652.0L325.0 656.3L333.4 655.2L345.9 659.0M345.9 659.0L358.2 657.2L369.8 655.4L381.8 654.8M345.9 659.0L344.1 686.3M381.8 654.8L395.2 654.2L403.7 653.6M381.8 654.8L379.7 691.7M403.7 653.6L421.7 653.6L435.5 655.8M403.7 653.6L406.8 667.3L407.5 685.6M435.5 655.8L443.6 658.6L456.3 656.6L465.4 660.0M435.5 655.8L435.7 672.5L434.6 692.4M465.4 660.0L465.2 672.8L467.2 683.3L467.6 691.7M502.8 660.3L516.4 659.9L524.5 662.9L538.0 661.7M502.8 660.3L504.4 686.1M538.0 661.7L552.1 658.8L561.5 652.4M538.0 661.7L535.9 670.6L529.7 683.5M561.5 652.4L570.3 654.7L583.5 658.7L593.5 661.4M561.5 652.4L560.4 691.3M593.5 661.4L630.5 658.4M593.5 661.4L599.2 677.6L600.6 689.8M630.5 658.4L643.5 660.0L655.3 658.0M630.5 658.4L629.0 669.1L624.8 678.1L623.0 691.4M655.3 658.0L684.9 652.4M655.3 658.0L657.2 677.5L658.4 692.0M684.9 652.4L692.2 650.2L705.8 652.0L713.3 651.4M713.3 651.4L736.4 655.9L755.0 657.9M713.3 651.4L713.1 667.2L715.2 684.3M755.0 657.9L754.0 670.5L746.7 682.1L745.0 692.4M779.7 660.8L788.3 658.4L801.2 656.7L813.0 652.7M779.7 660.8L781.1 683.6M813.0 652.7L826.7 654.2L845.4 656.3M813.0 652.7L816.8 687.8M-23.6 693.6L-11.9 693.6L0.6 693.2M0.6 693.2L3.6 708.6L4.4 723.1M33.2 683.2L46.6 685.4L56.0 688.5L65.9 691.6M33.2 683.2L36.4 695.4L37.7 707.7L40.3 719.7M65.9 691.6L78.0 686.2L88.4 685.8L96.7 682.6M65.9 691.6L68.1 700.3L67.8 713.9L66.3 722.0M96.7 682.6L106.4 686.8L123.2 688.5L132.9 689.5M96.7 682.6L99.2 692.4L102.4 709.1L102.7 718.7M132.9 689.5L145.0 690.0L153.0 688.4L163.9 691.1M132.9 689.5L135.1 699.8L132.2 713.5L132.1 722.8M163.9 691.1L180.8 688.6L197.3 685.9M163.9 691.1L159.6 719.6M197.3 685.9L193.9 699.8L188.6 718.3M227.1 687.4L241.7 683.2L253.9 682.5M227.1 687.4L220.3 714.5M253.9 682.5L274.1 684.1L289.6 689.6M253.9 682.5L257.7 720.5M289.6 689.6L314.7 682.9M314.7 682.9L344.1 686.3M314.7 682.9L314.7 693.4L317.5 707.4L319.7 717.9M344.1 686.3L379.7 691.7M344.1 686.3L344.4 719.4M379.7 691.7L407.5 685.6M379.7 691.7L380.7 709.3L382.5 724.5M407.5 685.6L420.7 688.0L434.6 692.4M407.5 685.6L411.0 695.7L414.4 707.4L414.6 717.9M434.6 692.4L467.6 691.7M434.6 692.4L437.0 703.4L440.8 714.5M467.6 691.7L487.8 686.5L504.4 686.1M467.6 691.7L470.3 722.3M504.4 686.1L501.8 697.2L498.4 703.2L498.0 714.6M529.7 683.5L560.4 691.3M529.7 683.5L529.2 691.6L532.3 704.4L531.0 715.2M560.4 691.3L582.2 691.8L600.6 689.8M560.4 691.3L559.8 700.0L560.1 707.5L560.1 714.1M600.6 689.8L610.5 690.7L623.0 691.4M600.6 689.8L597.1 696.7L596.4 707.3L593.6 714.9M623.0 691.4L636.2 690.6L648.6 691.9L658.4 692.0M658.4 692.0L675.9 691.8L688.4 690.5M658.4 692.0L657.3 703.8L651.3 716.1M688.4 690.5L702.1 688.6L715.2 684.3M688.4 690.5L688.1 705.7L692.5 723.3M715.2 684.3L717.7 691.9L716.1 704.2L716.2 713.6M745.0 692.4L761.5 687.5L781.1 683.6M745.0 692.4L752.9 716.2M781.1 683.6L795.4 684.5L807.2 685.0L816.8 687.8M781.1 683.6L782.6 700.7L786.0 717.8M816.8 687.8L822.0 684.7L833.0 684.4L839.1 682.8M816.8 687.8L815.3 699.2L813.2 703.6L811.7 715.2M839.1 682.8L843.9 694.9L843.1 710.7L846.7 724.0M-30.0 719.7L4.4 723.1M-30.0 719.7L-21.0 753.2M4.4 723.1L15.2 722.2L30.6 720.9L40.3 719.7M4.4 723.1L2.1 732.8L4.7 744.9M40.3 719.7L50.4 721.9L59.5 723.1L66.3 722.0M40.3 719.7L36.6 731.1L34.4 741.0L31.3 750.5M66.3 722.0L80.0 718.7L91.5 718.9L102.7 718.7M66.3 722.0L67.6 733.8L71.6 746.0M102.7 718.7L132.1 722.8M102.7 718.7L102.0 730.5L100.1 740.2L97.7 749.1M132.1 722.8L144.4 719.8L159.6 719.6M132.1 722.8L131.9 744.9M159.6 719.6L170.6 720.0L181.3 720.3L188.6 718.3M188.6 718.3L199.8 718.3L209.9 713.5L220.3 714.5M188.6 718.3L192.5 749.2M220.3 714.5L257.7 720.5M220.3 714.5L226.1 734.3L228.6 750.3M257.7 720.5L265.3 719.7L278.4 723.8L286.6 723.8M257.7 720.5L258.7 746.2M286.6 723.8L319.7 717.9M286.6 723.8L279.3 754.2M319.7 717.9L332.2 720.4L344.4 719.4M319.7 717.9L315.1 729.6L315.4 745.2M344.4 719.4L355.8 720.0L368.6 722.4L382.5 724.5M344.4 719.4L347.5 736.6L347.9 750.8M382.5 724.5L392.5 722.6L401.5 722.1L414.6 717.9M382.5 724.5L377.1 739.5L375.2 754.6M414.6 717.9L428.9 716.3L440.8 714.5M414.6 717.9L414.8 728.5L415.6 738.4L412.9 749.5M440.8 714.5L470.3 722.3M440.8 714.5L438.6 731.0L436.8 747.5M470.3 722.3L498.0 714.6M498.0 714.6L514.4 716.9L531.0 715.2M498.0 714.6L499.8 724.4L503.2 736.8L503.0 745.9M531.0 715.2L543.2 716.5L549.0 713.1L560.1 714.1M531.0 715.2L534.1 755.7M560.1 714.1L574.8 716.4L593.6 714.9M560.1 714.1L562.0 731.2L568.8 748.7M593.6 714.9L606.6 716.2L620.1 712.3L631.0 713.3M593.6 714.9L594.1 725.1L590.3 738.6L592.1 750.9M631.0 713.3L637.9 715.4L646.3 713.9L651.3 716.1M651.3 716.1L665.0 717.0L678.3 721.0L692.5 723.3M651.3 716.1L651.6 732.8L652.0 752.5M692.5 723.3L716.2 713.6M692.5 723.3L694.5 736.2L693.9 746.1M716.2 713.6L752.9 716.2M716.2 713.6L718.0 749.9M752.9 716.2L761.7 716.0L772.5 719.4L786.0 717.8M752.9 716.2L754.5 745.7M786.0 717.8L778.8 733.2L775.2 748.0M811.7 715.2L830.3 718.3L846.7 724.0M811.7 715.2L816.5 746.9M846.7 724.0L843.5 735.9L839.0 752.6M-21.0 753.2L-13.3 752.7L-3.6 747.8L4.7 744.9M-21.0 753.2L-30.6 783.3M31.3 750.5L44.1 747.4L58.3 749.9L71.6 746.0M31.3 750.5L40.8 779.6M71.6 746.0L86.0 748.5L97.7 749.1M71.6 746.0L72.7 755.3L68.7 765.9L67.8 778.2M97.7 749.1L114.4 747.9L131.9 744.9M97.7 749.1L98.9 767.7L102.9 784.6M131.9 744.9L139.0 747.0L148.9 745.9L155.6 746.1M131.9 744.9L133.3 760.5L133.1 775.6M155.6 746.1L192.5 749.2M155.6 746.1L160.3 781.0M192.5 749.2L228.6 750.3M192.5 749.2L192.2 786.6M228.6 750.3L243.7 748.2L258.7 746.2M228.6 750.3L225.1 766.5L219.0 782.6M258.7 746.2L268.2 751.2L279.3 754.2M258.7 746.2L259.9 756.8L256.4 769.2L257.1 779.7M279.3 754.2L297.1 751.9L315.4 745.2M279.3 754.2L281.8 765.7L282.1 775.8M315.4 745.2L347.9 750.8M347.9 750.8L346.3 765.5L346.2 778.6M375.2 754.6L412.9 749.5M375.2 754.6L376.4 769.3L376.0 786.5M412.9 749.5L413.5 768.4L411.0 785.5M436.8 747.5L475.8 748.9M436.8 747.5L437.6 761.8L437.9 772.3L439.2 784.6M475.8 748.9L488.8 747.2L503.0 745.9M475.8 748.9L475.3 777.0M503.0 745.9L513.0 749.5L526.0 753.8L534.1 755.7M503.0 745.9L506.0 755.9L507.5 764.7L507.5 776.3M534.1 755.7L552.1 751.5L568.8 748.7M534.1 755.7L533.9 779.7M568.8 748.7L592.1 750.9M592.1 750.9L626.8 753.1M592.1 750.9L594.0 760.7L597.3 772.9L596.6 783.4M626.8 753.1L622.6 768.8L620.8 782.2M652.0 752.5L693.9 746.1M652.0 752.5L655.4 767.9L657.4 779.4M693.9 746.1L701.0 749.2L707.9 749.9L718.0 749.9M693.9 746.1L683.8 776.4M718.0 749.9L738.1 748.4L754.5 745.7M718.0 749.9L718.9 766.9L721.8 780.5M754.5 745.7L762.7 747.2L770.2 748.4L775.2 748.0M775.2 748.0L796.9 745.5L816.5 746.9M775.2 748.0L779.3 760.0L784.7 776.9M816.5 746.9L839.0 752.6M816.5 746.9L813.2 758.9L809.3 775.9M839.0 752.6L847.1 785.5M-30.6 783.3L-20.0 782.7L-7.5 780.2L5.6 780.2M-30.6 783.3L-27.4 791.3L-26.5 802.8L-25.7 810.1M5.6 780.2L10.0 811.4M40.8 779.6L52.3 776.5L67.8 778.2M40.8 779.6L37.0 790.5L37.3 804.0L33.1 812.7M67.8 778.2L102.9 784.6M67.8 778.2L65.9 797.0L68.6 815.1M102.9 784.6L119.1 778.2L133.1 775.6M102.9 784.6L100.2 799.7L101.9 818.0M133.1 775.6L146.3 779.7L160.3 781.0M133.1 775.6L131.2 795.6L126.7 817.4M160.3 781.0L173.8 784.0L192.2 786.6M160.3 781.0L158.5 794.4L160.7 803.5L158.7 814.7M192.2 786.6L219.0 782.6M219.0 782.6L238.1 782.9L257.1 779.7M219.0 782.6L217.5 809.5M257.1 779.7L267.4 778.1L272.8 777.3L282.1 775.8M257.1 779.7L254.2 793.8L255.0 807.7M282.1 775.8L302.2 777.0L318.9 778.9M282.1 775.8L281.8 788.0L281.4 800.6L283.7 809.8M318.9 778.9L331.9 776.4L346.2 778.6M318.9 778.9L317.9 789.7L319.2 798.5L316.3 808.4M346.2 778.6L347.9 790.2L350.2 799.1L349.4 810.3M376.0 786.5L391.7 788.5L411.0 785.5M376.0 786.5L376.3 795.0L373.9 809.7L372.7 817.7M411.0 785.5L418.1 783.4L430.5 782.6L439.2 784.6M411.0 785.5L412.2 815.0M439.2 784.6L475.3 777.0M439.2 784.6L442.3 794.4L440.8 802.5L444.0 807.8M475.3 777.0L487.2 777.7L499.0 775.1L507.5 776.3M507.5 776.3L533.9 779.7M533.9 779.7L566.6 778.7M533.9 779.7L528.7 817.5M566.6 778.7L579.7 783.1L596.6 783.4M566.6 778.7L563.7 816.0M596.6 783.4L620.8 782.2M596.6 783.4L596.0 812.5M620.8 782.2L637.3 780.1L657.4 779.4M620.8 782.2L624.6 813.9M657.4 779.4L671.4 777.6L683.8 776.4M657.4 779.4L659.1 798.3L656.0 815.9M683.8 776.4L694.1 777.5L708.1 780.3L721.8 780.5M683.8 776.4L683.1 788.9L684.2 794.7L685.2 807.1M721.8 780.5L722.3 792.2L720.2 798.4L719.8 808.0M754.7 778.4L762.8 775.9L774.0 779.2L784.7 776.9M754.7 778.4L753.9 791.7L750.7 806.5L746.2 818.0M784.7 776.9L795.2 774.5L802.6 776.0L809.3 775.9M784.7 776.9L784.2 809.9M809.3 775.9L823.1 778.9L832.7 780.1L847.1 785.5M809.3 775.9L811.0 812.1M847.1 785.5L844.9 795.2L840.4 809.5M-25.7 810.1L-8.0 810.6L10.0 811.4M10.0 811.4L23.0 810.2L33.1 812.7M10.0 811.4L9.7 824.4L3.7 837.9L2.1 847.4M33.1 812.7L68.6 815.1M33.1 812.7L35.2 827.2L36.3 835.7L40.1 848.8M68.6 815.1L78.1 813.8L92.5 818.9L101.9 818.0M68.6 815.1L66.4 822.5L69.1 832.5L69.5 839.1M101.9 818.0L108.7 820.0L116.5 816.4L126.7 817.4M101.9 818.0L100.0 827.6L99.6 835.8L99.0 847.9M126.7 817.4L138.9 816.9L147.2 814.2L158.7 814.7M158.7 814.7L157.9 838.7M191.9 811.7L200.4 812.5L210.5 809.0L217.5 809.5M191.9 811.7L197.6 842.9M217.5 809.5L255.0 807.7M217.5 809.5L222.1 827.6L227.6 843.8M255.0 807.7L262.9 806.4L273.8 810.5L283.7 809.8M255.0 807.7L251.8 845.5M283.7 809.8L316.3 808.4M283.7 809.8L284.4 821.7L286.5 827.9L284.6 838.8M316.3 808.4L349.4 810.3M316.3 808.4L320.0 830.2L319.4 849.0M349.4 810.3L359.4 812.9L372.7 817.7M372.7 817.7L412.2 815.0M372.7 817.7L376.6 827.1L379.8 837.6L381.4 846.6M412.2 815.0L423.3 813.2L434.1 809.8L444.0 807.8M412.2 815.0L409.4 824.5L408.1 834.7L403.0 847.9M444.0 807.8L456.9 805.3L466.7 806.5M466.7 806.5L479.3 808.9L486.9 812.7L499.1 814.9M466.7 806.5L472.7 838.7M499.1 814.9L528.7 817.5M499.1 814.9L503.0 832.2L505.1 848.8M528.7 817.5L539.2 819.3L551.7 815.5L563.7 816.0M528.7 817.5L533.4 830.5L535.7 838.6M563.7 816.0L572.5 814.9L585.7 811.6L596.0 812.5M563.7 816.0L560.9 829.2L561.4 846.5M596.0 812.5L604.4 812.1L615.6 812.2L624.6 813.9M596.0 812.5L596.0 824.7L596.7 833.2L596.3 842.9M624.6 813.9L623.3 839.0M656.0 815.9L685.2 807.1M656.0 815.9L656.8 823.7L655.8 833.8L654.9 841.4M685.2 807.1L697.4 805.6L708.9 807.8L719.8 808.0M685.2 807.1L685.6 846.4M719.8 808.0L734.4 813.4L746.2 818.0M719.8 808.0L718.3 818.2L714.5 828.8L715.4 840.2M746.2 818.0L749.8 827.3L747.2 831.9L750.2 842.3M784.2 809.9L799.8 808.8L811.0 812.1M784.2 809.9L784.3 817.1L781.8 827.9L780.4 837.5M811.0 812.1L827.8 811.8L840.4 809.5M811.0 812.1L811.9 823.0L813.2 836.1L811.6 846.7M-28.3 839.6L2.1 847.4M2.1 847.4L15.4 845.4L25.4 846.1L40.1 848.8M40.1 848.8L69.5 839.1M69.5 839.1L99.0 847.9M99.0 847.9L112.1 847.7L120.1 848.0L131.4 846.8M131.4 846.8L157.9 838.7M157.9 838.7L180.1 841.4L197.6 842.9M197.6 842.9L207.8 841.6L215.9 844.5L227.6 843.8M227.6 843.8L235.7 843.4L244.0 845.1L251.8 845.5M251.8 845.5L269.4 842.4L284.6 838.8M319.4 849.0L332.4 848.9L339.6 848.8L351.2 845.1M351.2 845.1L368.4 843.7L381.4 846.6M381.4 846.6L403.0 847.9M434.4 837.8L448.1 839.1L458.6 836.0L472.7 838.7M472.7 838.7L491.2 845.2L505.1 848.8M505.1 848.8L513.9 847.8L527.6 839.7L535.7 838.6M535.7 838.6L545.2 842.3L552.1 845.4L561.4 846.5M561.4 846.5L578.9 846.7L596.3 842.9M596.3 842.9L606.5 840.0L614.0 842.2L623.3 839.0M623.3 839.0L638.1 841.9L654.9 841.4M654.9 841.4L685.6 846.4M685.6 846.4L693.9 842.3L707.3 843.2L715.4 840.2M715.4 840.2L734.9 839.1L750.2 842.3M750.2 842.3L760.0 840.9L770.2 840.7L780.4 837.5M780.4 837.5L789.2 838.7L802.5 844.7L811.6 846.7M811.6 846.7L823.5 845.8L833.6 846.3L847.9 846.4" stroke="#626464" stroke-width="1" fill="none" shape-rendering="crispEdges"/>
<path clip-path="url(#ce)" d="M-21.2 -14.1L3.2 -16.6M-21.2 -14.1L-22.1 7.1M3.2 -16.6L0.4 8.0M23.2 -12.0L42.0 -15.4L56.8 -22.6M23.2 -12.0L25.8 -2.2L29.6 4.6L30.6 10.3M56.8 -22.6L70.8 -23.2L80.5 -21.4M56.8 -22.6L58.7 -9.7L57.3 5.3M80.5 -21.4L95.4 -15.7M80.5 -21.4L80.1 -11.2L79.7 1.4L77.0 11.1M95.4 -15.7L110.2 -16.1L126.3 -12.8M95.4 -15.7L94.9 -11.6L98.9 -3.4L99.4 3.9M126.3 -12.8L121.0 -3.8L118.8 3.5M138.0 -16.7L143.7 -5.6L149.5 4.9M167.6 -17.2L193.2 -21.1M167.6 -17.2L172.4 10.3M193.2 -21.1L216.2 -22.8M193.2 -21.1L190.4 -11.2L192.3 0.0M216.2 -22.8L223.2 -24.6L226.5 -19.7L231.6 -21.6M216.2 -22.8L215.0 -10.8L216.3 -0.7L217.8 11.0M231.6 -21.6L256.7 -14.9M256.7 -14.9L281.7 -13.2M256.7 -14.9L258.2 -5.2L258.3 -1.1L257.6 7.1M281.7 -13.2L283.3 7.2M302.5 -14.2L316.7 -17.5L330.4 -19.1M302.5 -14.2L302.7 0.8M330.4 -19.1L335.3 -15.2L341.1 -15.0L349.0 -11.3M330.4 -19.1L331.2 -9.3L331.4 1.9L331.6 10.9M349.0 -11.3L347.3 2.5M375.5 -11.6L385.0 -9.9L392.8 -14.5L400.2 -13.1M375.5 -11.6L372.4 -7.8L372.2 -2.6L372.5 4.8M400.2 -13.1L410.0 -16.5L418.9 -17.6M400.2 -13.1L402.9 -6.2L402.2 -1.7L401.6 2.4M418.9 -17.6L441.8 -11.1M418.9 -17.6L417.4 -6.8L419.0 7.8M441.8 -11.1L449.6 -11.5L456.0 -9.2L462.1 -11.4M441.8 -11.1L442.4 -5.2L443.1 4.0M462.1 -11.4L488.0 -17.9M462.1 -11.4L466.8 -4.5L469.3 1.6M488.0 -17.9L511.6 -18.5M488.0 -17.9L485.3 4.8M511.6 -18.5L515.4 3.0M534.6 -22.6L540.8 -20.1L545.2 -18.9L553.0 -14.2M534.6 -22.6L534.5 -4.2L530.3 11.2M553.0 -14.2L563.4 -15.8L571.8 -19.1L582.6 -22.7M553.0 -14.2L552.5 -4.0L553.5 7.3M582.6 -22.7L590.2 -21.6L601.6 -20.3M582.6 -22.7L581.3 -6.9L578.5 7.5M601.6 -20.3L606.4 -17.4L615.0 -18.7L621.7 -16.7M601.6 -20.3L605.9 0.8M621.7 -16.7L633.3 -20.6L649.0 -22.4M621.7 -16.7L622.8 -5.7L625.3 4.0M649.0 -22.4L656.8 -20.6L663.3 -17.4L673.9 -13.4M649.0 -22.4L649.0 -14.2L645.2 -7.7L646.1 0.1M673.9 -13.4L679.3 -14.6L686.1 -16.9L691.4 -19.7M673.9 -13.4L672.9 -7.1L668.9 -0.2L667.1 7.2M691.4 -19.7L708.0 -19.4L720.7 -17.1M691.4 -19.7L690.5 -9.4L691.0 3.8M720.7 -17.1L729.1 -19.7L742.1 -17.5M742.1 -17.5L757.9 -17.5L769.7 -15.7M769.7 -15.7L777.9 -16.2L789.2 -17.7M769.7 -15.7L765.7 -11.5L764.8 -5.0L762.8 2.9M789.2 -17.7L796.0 -15.9L803.5 -15.1L810.8 -12.3M789.2 -17.7L789.6 -11.3L787.0 -0.4L787.9 6.5M810.8 -12.3L815.0 -13.5L825.1 -12.0L830.5 -11.7M810.8 -12.3L809.4 0.4L809.9 8.9M830.5 -11.7L830.4 -2.7L833.3 -0.4L835.7 7.9M-22.1 7.1L-8.9 6.3L0.4 8.0M-22.1 7.1L-23.5 17.7L-21.2 32.0M0.4 8.0L5.9 19.2L7.7 26.6M30.6 10.3L57.3 5.3M30.6 10.3L28.8 24.2L27.5 34.9M57.3 5.3L67.6 10.4L77.0 11.1M57.3 5.3L50.1 27.1M77.0 11.1L89.9 5.1L99.4 3.9M77.0 11.1L77.4 17.9L76.5 26.4L76.4 30.4M99.4 3.9L118.8 3.5M99.4 3.9L95.8 13.8L92.3 21.0L92.2 29.9M118.8 3.5L124.3 34.4M149.5 4.9L162.0 6.8L172.4 10.3M149.5 4.9L146.4 24.4M172.4 10.3L184.8 7.3L192.3 0.0M172.4 10.3L168.8 18.2L164.0 28.0M192.3 0.0L204.0 6.3L217.8 11.0M192.3 0.0L191.6 24.1M217.8 11.0L222.9 10.9L230.1 7.7M217.8 11.0L215.3 15.3L214.9 23.4L211.7 26.9M230.1 7.7L257.6 7.1M230.1 7.7L231.5 17.2L237.5 24.3L241.7 34.6M257.6 7.1L264.8 9.4L272.9 7.9L283.3 7.2M257.6 7.1L257.3 14.0L260.2 23.9L261.9 29.2M283.3 7.2L287.8 3.5L295.1 4.5L302.7 0.8M283.3 7.2L278.0 34.4M302.7 0.8L331.6 10.9M302.7 0.8L303.8 10.0L308.7 24.1L310.1 33.6M331.6 10.9L347.3 2.5M331.6 10.9L329.3 18.5L327.6 23.1L322.6 32.3M347.3 2.5L358.5 3.9L372.5 4.8M372.5 4.8L401.6 2.4M372.5 4.8L375.1 34.9M401.6 2.4L419.0 7.8M401.6 2.4L398.4 14.4L396.1 30.6M419.0 7.8L427.3 8.9L435.2 6.7L443.1 4.0M419.0 7.8L423.3 26.1M443.1 4.0L455.0 3.0L469.3 1.6M443.1 4.0L444.7 32.9M469.3 1.6L485.3 4.8M469.3 1.6L465.9 12.4L466.3 28.1M485.3 4.8L515.4 3.0M485.3 4.8L489.4 34.4M515.4 3.0L530.3 11.2M515.4 3.0L515.4 10.7L516.0 19.5L518.0 31.1M530.3 11.2L553.5 7.3M530.3 11.2L538.5 34.8M553.5 7.3L578.5 7.5M553.5 7.3L554.5 14.4L553.7 23.3M578.5 7.5L585.4 4.8L598.4 1.2L605.9 0.8M605.9 0.8L602.3 15.4L599.2 29.3M625.3 4.0L646.1 0.1M625.3 4.0L627.1 26.4M646.1 0.1L654.7 3.5L660.8 3.5L667.1 7.2M646.1 0.1L644.2 10.5L647.0 25.2M667.1 7.2L691.0 3.8M667.1 7.2L669.4 18.1L674.0 24.8M691.0 3.8L705.6 7.8L724.6 10.5M691.0 3.8L698.5 33.3M724.6 10.5L729.8 7.7L740.6 3.9L747.0 2.0M724.6 10.5L725.3 17.4L721.2 26.2M747.0 2.0L762.8 2.9M747.0 2.0L742.1 16.3L740.8 29.2M762.8 2.9L787.9 6.5M762.8 2.9L762.0 13.5L762.9 22.2L763.1 29.5M787.9 6.5L794.8 7.8L803.1 8.5L809.9 8.9M787.9 6.5L789.5 14.5L791.4 20.3L790.2 26.6M809.9 8.9L835.7 7.9M809.9 8.9L807.6 32.5M835.7 7.9L838.5 15.3L837.0 16.3L837.3 23.5M-21.2 32.0L-10.8 32.5L-0.1 28.9L7.7 26.6M-21.2 32.0L-15.3 47.5M7.7 26.6L14.6 31.4L23.2 32.7L27.5 34.9M7.7 26.6L8.0 35.0L9.2 42.6L6.6 49.5M27.5 34.9L40.6 31.0L50.1 27.1M27.5 34.9L32.5 38.6L32.9 47.2M50.1 27.1L56.8 50.1M76.4 30.4L86.7 29.0L92.2 29.9M92.2 29.9L103.7 31.2L115.5 33.9L124.3 34.4M92.2 29.9L94.6 40.1L93.0 54.9M146.4 24.4L164.0 28.0M146.4 24.4L139.3 48.2M164.0 28.0L177.4 27.4L191.6 24.1M164.0 28.0L163.5 36.0L164.2 40.4L167.2 47.4M191.6 24.1L189.8 57.2M211.7 26.9L223.5 28.7L232.7 30.0L241.7 34.6M211.7 26.9L211.8 48.2M241.7 34.6L238.8 40.4L239.5 49.9L239.7 53.9M261.9 29.2L269.2 30.0L278.0 34.4M261.9 29.2L260.4 47.5M278.0 34.4L289.4 34.4L298.5 36.2L310.1 33.6M278.0 34.4L280.1 41.6L280.2 51.7M310.1 33.6L314.0 35.4L320.1 34.2L322.6 32.3M310.1 33.6L308.5 40.3L303.5 48.7M322.6 32.3L346.3 33.9M322.6 32.3L324.2 36.0L325.3 41.4L324.7 47.7M346.3 33.9L348.6 39.4L353.5 45.0L353.8 47.5M375.1 34.9L396.1 30.6M375.1 34.9L371.8 50.7M396.1 30.6L391.5 47.9M423.3 26.1L431.4 30.1L435.7 33.2L444.7 32.9M423.3 26.1L420.8 40.6L416.0 55.2M444.7 32.9L451.8 31.0L457.5 28.2L466.3 28.1M444.7 32.9L441.0 44.6L439.9 55.0M466.3 28.1L471.9 27.8L483.7 31.8L489.4 34.4M466.3 28.1L465.4 34.8L464.1 43.4L464.2 53.9M489.4 34.4L499.6 32.0L510.6 29.9L518.0 31.1M489.4 34.4L487.6 40.1L488.5 43.6L490.9 48.8M518.0 31.1L525.8 33.3L531.0 32.0L538.5 34.8M518.0 31.1L517.6 38.7L511.4 48.5L511.1 54.1M538.5 34.8L537.2 46.3L536.3 53.3M553.7 23.3L565.2 27.8L572.4 26.3L584.0 30.4M553.7 23.3L552.5 56.9M599.2 29.3L609.7 29.3L617.3 28.1L627.1 26.4M599.2 29.3L601.8 42.5L602.7 56.9M627.1 26.4L635.3 27.1L647.0 25.2M627.1 26.4L624.8 39.1L626.4 51.2M647.0 25.2L674.0 24.8M647.0 25.2L649.9 32.0L649.0 41.0L652.5 47.9M674.0 24.8L684.2 30.5L698.5 33.3M674.0 24.8L676.5 31.9L674.2 38.2L677.4 46.2M698.5 33.3L705.7 29.2L713.2 29.5L721.2 26.2M698.5 33.3L693.9 41.0L690.9 50.5M721.2 26.2L740.8 29.2M721.2 26.2L718.3 36.6L719.2 45.4L716.0 52.2M740.8 29.2L751.6 29.4L763.1 29.5M740.8 29.2L737.8 37.3L736.3 47.0L737.7 53.7M763.1 29.5L790.2 26.6M763.1 29.5L765.5 56.0M790.2 26.6L807.6 32.5M790.2 26.6L785.2 48.1M807.6 32.5L817.6 27.3L827.9 27.4L837.3 23.5M807.6 32.5L811.1 42.8L811.3 48.9M837.3 23.5L834.6 30.9L836.3 41.0L833.5 47.4M-15.3 47.5L6.6 49.5M-15.3 47.5L-16.6 61.1L-15.8 79.0M6.6 49.5L21.3 46.4L32.9 47.2M6.6 49.5L10.9 80.4M56.8 50.1L70.6 51.5M56.8 50.1L58.0 62.4L55.3 77.1M70.6 51.5L83.3 51.6L93.0 54.9M70.6 51.5L71.0 74.1M119.4 50.0L131.6 47.9L139.3 48.2M119.4 50.0L118.1 62.1L121.1 74.4M139.3 48.2L150.4 48.6L158.7 48.0L167.2 47.4M139.3 48.2L144.4 60.3L148.2 69.1L149.9 79.8M167.2 47.4L176.1 50.4L189.8 57.2M167.2 47.4L162.8 76.3M189.8 57.2L189.7 78.9M239.7 53.9L260.4 47.5M239.7 53.9L236.6 65.8L230.3 79.7M260.4 47.5L264.8 49.8L274.9 50.5L280.2 51.7M280.2 51.7L286.0 50.0L296.8 51.5L303.5 48.7M280.2 51.7L280.0 59.9L280.4 72.1L280.5 78.8M303.5 48.7L315.4 48.5L324.7 47.7M303.5 48.7L302.0 56.1L301.1 63.6L301.4 71.1M324.7 47.7L353.8 47.5M324.7 47.7L331.8 60.8L333.9 69.5M353.8 47.5L363.1 48.3L371.8 50.7M353.8 47.5L348.7 73.9M371.8 50.7L377.1 47.9L386.2 51.1L391.5 47.9M371.8 50.7L371.5 57.0L370.1 67.0L370.7 72.2M391.5 47.9L402.5 51.5L416.0 55.2M391.5 47.9L390.3 62.4L392.3 78.7M416.0 55.2L430.4 52.7L439.9 55.0M416.0 55.2L417.0 76.6M439.9 55.0L446.5 55.8L456.8 53.7L464.2 53.9M439.9 55.0L440.3 60.8L441.3 69.1M464.2 53.9L472.6 51.7L481.2 50.6L490.9 48.8M464.2 53.9L463.0 60.0L463.2 73.0L463.0 79.0M490.9 48.8L499.1 50.6L504.4 50.4L511.1 54.1M490.9 48.8L491.9 54.9L486.7 61.3L487.9 70.1M511.1 54.1L517.2 51.7L527.7 52.0L536.3 53.3M511.1 54.1L517.7 76.8M536.3 53.3L539.7 54.7L547.9 53.3L552.5 56.9M536.3 53.3L535.9 60.5L534.3 72.0L536.9 80.1M552.5 56.9L568.1 51.8L585.7 48.1M585.7 48.1L592.6 52.9L598.3 52.7L602.7 56.9M585.7 48.1L584.8 54.2L579.8 66.4L579.8 72.3M602.7 56.9L612.7 54.7L618.4 52.6L626.4 51.2M602.7 56.9L603.8 78.1M626.4 51.2L652.5 47.9M626.4 51.2L625.5 63.8L627.1 73.5M652.5 47.9L677.4 46.2M652.5 47.9L650.8 60.5L651.2 76.7M677.4 46.2L685.4 47.4L690.9 50.5M677.4 46.2L678.5 55.2L678.9 67.4L678.7 76.5M690.9 50.5L692.2 65.5L694.7 80.2M716.0 52.2L724.2 51.6L729.5 53.3L737.7 53.7M716.0 52.2L721.0 61.9L721.8 74.2M737.7 53.7L748.6 54.3L758.0 55.1L765.5 56.0M737.7 53.7L739.7 65.0L738.1 70.9L741.5 81.0M765.5 56.0L775.7 54.1L785.2 48.1M765.5 56.0L770.6 69.1M785.2 48.1L798.4 49.5L811.3 48.9M785.2 48.1L785.6 56.0L790.3 67.1L792.2 73.3M811.3 48.9L820.1 48.4L827.5 49.4L833.5 47.4M833.5 47.4L835.8 59.8L835.4 71.1M-15.8 79.0L-7.1 77.3L0.5 81.3L10.9 80.4M10.9 80.4L17.3 79.2L25.7 74.7L30.0 75.2M30.0 75.2L55.3 77.1M30.0 75.2L30.2 85.7L26.5 93.3L26.7 101.7M55.3 77.1L71.0 74.1M55.3 77.1L52.9 90.7L51.8 103.5M71.0 74.1L77.0 75.6L88.7 74.6L93.9 75.8M71.0 74.1L73.3 82.8L77.6 93.4M93.9 75.8L105.9 76.6L121.1 74.4M93.9 75.8L93.3 84.8L97.4 98.3M121.1 74.4L134.0 76.3L149.9 79.8M121.1 74.4L125.8 103.0M149.9 79.8L162.8 76.3M149.9 79.8L138.6 102.9M162.8 76.3L189.7 78.9M162.8 76.3L167.7 86.7L169.3 98.9M189.7 78.9L197.8 79.6L207.1 79.2L218.2 78.9M189.7 78.9L193.2 85.5L195.6 89.9L195.0 96.9M218.2 78.9L221.5 80.2L227.6 79.1L230.3 79.7M230.3 79.7L255.0 73.0M230.3 79.7L235.0 87.3L239.8 98.7M255.0 73.0L264.7 73.8L273.5 76.5L280.5 78.8M280.5 78.8L288.9 76.6L301.4 71.1M280.5 78.8L279.5 89.0L278.5 100.6M301.4 71.1L310.6 68.8L321.0 69.0L333.9 69.5M301.4 71.1L308.8 93.4M333.9 69.5L340.1 70.8L348.7 73.9M333.9 69.5L333.2 83.2L332.2 93.5M370.7 72.2L379.8 75.4L392.3 78.7M370.7 72.2L375.6 90.2L379.3 103.4M392.3 78.7L417.0 76.6M392.3 78.7L398.0 101.8M417.0 76.6L441.3 69.1M417.0 76.6L417.4 85.3L417.9 90.9L417.0 99.7M441.3 69.1L447.5 71.3L454.2 78.1L463.0 79.0M441.3 69.1L439.8 79.3L440.2 84.3L439.0 95.0M463.0 79.0L471.2 102.8M487.9 70.1L517.7 76.8M487.9 70.1L488.8 81.7L491.7 87.2L491.9 97.7M517.7 76.8L525.1 78.5L529.8 78.9L536.9 80.1M536.9 80.1L548.4 80.5L563.2 79.5M536.9 80.1L535.1 99.2M563.2 79.5L579.8 72.3M563.2 79.5L552.4 101.8M579.8 72.3L586.9 74.4L595.4 74.5L603.8 78.1M579.8 72.3L581.8 82.9L577.9 94.9L578.4 103.1M603.8 78.1L613.4 75.5L618.0 75.0L627.1 73.5M603.8 78.1L607.5 84.8L605.0 91.3L609.2 101.5M627.1 73.5L639.3 76.6L651.2 76.7M627.1 73.5L628.2 82.5L630.4 87.8L630.9 95.6M651.2 76.7L678.7 76.5M651.2 76.7L648.4 84.1L645.9 96.4M678.7 76.5L684.1 78.7L689.9 79.8L694.7 80.2M694.7 80.2L707.1 75.4L721.8 74.2M694.7 80.2L698.1 85.4L697.0 94.8L700.0 102.1M721.8 74.2L741.5 81.0M721.8 74.2L721.3 86.5L721.3 101.6M741.5 81.0L741.6 102.8M770.6 69.1L792.2 73.3M792.2 73.3L809.8 72.5M809.8 72.5L819.8 72.8L827.5 70.6L835.4 71.1M809.8 72.5L812.7 98.3M835.4 71.1L839.3 96.4M-20.5 94.6L-12.1 95.0L-3.4 96.1L6.7 93.2M-20.5 94.6L-19.1 102.1L-20.7 107.8L-21.3 115.7M6.7 93.2L14.4 96.7L22.3 99.8L26.7 101.7M6.7 93.2L9.7 121.5M26.7 101.7L51.8 103.5M51.8 103.5L58.5 100.9L68.1 94.7L77.6 93.4M51.8 103.5L53.9 124.0M77.6 93.4L88.7 94.5L97.4 98.3M77.6 93.4L73.9 105.6L72.4 111.5L70.0 122.5M97.4 98.3L112.5 102.6L125.8 103.0M97.4 98.3L100.5 110.1L99.2 124.5M125.8 103.0L130.9 102.3L138.6 102.9M125.8 103.0L122.6 108.4L121.7 110.2L117.7 116.9M138.6 102.9L147.3 103.6L159.7 99.0L169.3 98.9M138.6 102.9L147.0 119.7M169.3 98.9L180.3 98.0L184.0 96.3L195.0 96.9M169.3 98.9L168.3 109.8L162.5 120.3M195.0 96.9L206.3 101.8L215.1 101.9M195.0 96.9L195.4 104.4L194.4 110.6L193.6 119.1M215.1 101.9L239.8 98.7M215.1 101.9L212.5 113.4L209.4 124.2M239.8 98.7L259.7 102.3M239.8 98.7L236.9 105.2L235.3 108.5L230.8 116.1M259.7 102.3L256.2 114.3L253.3 124.6M278.5 100.6L293.6 94.9L308.8 93.4M278.5 100.6L280.2 117.5M308.8 93.4L315.8 94.4L324.6 94.9L332.2 93.5M332.2 93.5L345.6 97.6M332.2 93.5L329.0 109.7L323.7 125.5M345.6 97.6L361.9 102.4L379.3 103.4M345.6 97.6L343.7 109.2L346.3 124.2M379.3 103.4L390.6 101.6L398.0 101.8M379.3 103.4L374.2 115.5M398.0 101.8L408.1 99.3L417.0 99.7M398.0 101.8L397.9 108.1L393.4 119.1M417.0 99.7L418.4 118.6M439.0 95.0L444.7 116.1M471.2 102.8L479.6 101.9L486.4 99.5L491.9 97.7M471.2 102.8L466.8 107.8L463.7 117.0L461.0 121.5M491.9 97.7L502.3 94.2L516.6 94.0M491.9 97.7L486.7 123.1M516.6 94.0L525.2 96.1L530.3 95.5L535.1 99.2M535.1 99.2L542.2 98.8L545.9 102.1L552.4 101.8M535.1 99.2L539.6 109.9L539.6 119.2M552.4 101.8L555.1 123.9M578.4 103.1L609.2 101.5M578.4 103.1L578.9 111.2L576.6 121.3M609.2 101.5L609.1 118.5M630.9 95.6L645.9 96.4M630.9 95.6L630.0 119.9M645.9 96.4L650.6 106.3L650.2 116.3L654.1 124.0M700.0 102.1L713.0 102.1L721.3 101.6M700.0 102.1L694.0 116.1L692.0 125.6M721.3 101.6L733.0 101.3L741.6 102.8M721.3 101.6L720.9 109.8L717.7 115.6M741.6 102.8L753.1 100.5L763.3 97.7L770.6 96.9M741.6 102.8L744.8 108.3L743.0 117.8L746.6 122.6M770.6 96.9L775.6 95.8L784.6 97.7L792.9 100.6M770.6 96.9L762.5 125.4M792.9 100.6L801.0 97.6L812.7 98.3M792.9 100.6L791.5 109.8L785.1 119.0M812.7 98.3L827.8 98.4L839.3 96.4M812.7 98.3L809.9 109.7L811.6 122.2M839.3 96.4L835.7 108.1L836.0 113.4L833.6 124.5M-21.3 115.7L9.7 121.5M9.7 121.5L15.4 118.9L19.6 121.4L25.9 119.1M9.7 121.5L8.5 132.2L1.4 140.5L0.9 148.9M25.9 119.1L42.1 120.5L53.9 124.0M25.9 119.1L23.5 127.6L23.6 136.3L24.0 146.3M53.9 124.0L52.4 131.0L51.5 132.9L53.4 141.1M70.0 122.5L83.3 123.1L99.2 124.5M99.2 124.5L109.7 122.0L117.7 116.9M99.2 124.5L97.7 150.0M117.7 116.9L128.7 115.9L139.5 117.4L147.0 119.7M117.7 116.9L119.7 132.5L119.8 143.2M147.0 119.7L152.9 121.3L156.5 121.0L162.5 120.3M147.0 119.7L144.4 126.4L144.6 134.7L146.3 141.2M162.5 120.3L161.9 131.2L166.3 146.1M193.6 119.1L209.4 124.2M193.6 119.1L189.1 127.6L186.9 134.9L186.9 143.4M209.4 124.2L230.8 116.1M209.4 124.2L211.3 136.5L208.2 149.4M230.8 116.1L237.4 139.7M253.3 124.6L268.0 122.9L280.2 117.5M253.3 124.6L259.7 138.9M280.2 117.5L299.0 118.2M280.2 117.5L280.7 125.3L281.3 136.3L281.4 148.0M299.0 118.2L305.0 119.1L313.4 125.4L323.7 125.5M299.0 118.2L306.8 142.8M323.7 125.5L329.6 126.8L338.1 125.1L346.3 124.2M323.7 125.5L327.4 135.5L329.7 149.1M346.3 124.2L374.2 115.5M346.3 124.2L348.6 133.4L345.6 142.4L347.7 148.8M374.2 115.5L393.4 119.1M374.2 115.5L374.6 126.7L371.3 136.5L371.1 145.5M393.4 119.1L418.4 118.6M418.4 118.6L427.4 115.4L437.6 118.1L444.7 116.1M418.4 118.6L425.4 143.4M444.7 116.1L461.0 121.5M444.7 116.1L446.6 131.7L445.7 143.7M461.0 121.5L472.4 120.0L486.7 123.1M461.0 121.5L460.7 143.8M486.7 123.1L509.4 123.2M486.7 123.1L486.2 149.7M509.4 123.2L524.5 121.0L539.6 119.2M509.4 123.2L512.9 129.6L510.9 138.9L515.5 148.6M539.6 119.2L543.1 120.6L548.3 120.6L555.1 123.9M539.6 119.2L537.1 132.9L535.9 149.7M555.1 123.9L567.0 125.0L576.6 121.3M576.6 121.3L579.1 132.4L582.1 141.6M609.1 118.5L618.9 119.1L630.0 119.9M609.1 118.5L603.8 127.9L603.0 138.6M630.0 119.9L643.7 124.0L654.1 124.0M630.0 119.9L629.7 142.1M654.1 124.0L660.7 126.1L661.0 127.4L667.3 125.7M654.1 124.0L649.3 142.8M667.3 125.7L676.9 125.3L685.6 127.6L692.0 125.6M667.3 125.7L668.6 129.9L674.6 134.4L677.3 141.3M692.0 125.6L717.7 115.6M692.0 125.6L694.8 130.2L693.1 137.4L697.3 140.6M717.7 115.6L733.8 120.6L746.6 122.6M717.7 115.6L717.4 132.8L716.7 146.8M746.6 122.6L762.5 125.4M746.6 122.6L746.3 131.2L745.1 137.1L742.3 143.0M762.5 125.4L785.1 119.0M762.5 125.4L762.9 128.9L761.9 133.6L762.2 138.8M785.1 119.0L811.6 122.2M785.1 119.0L784.6 128.6L783.4 136.1L782.4 147.9M811.6 122.2L833.6 124.5M811.6 122.2L811.5 133.5L813.2 147.2M833.6 124.5L835.4 138.7M-16.5 145.9L0.9 148.9M-16.5 145.9L-14.9 162.8M0.9 148.9L24.0 146.3M0.9 148.9L6.0 156.5L8.7 164.7L11.6 172.4M24.0 146.3L40.2 145.7L53.4 141.1M24.0 146.3L27.1 154.8L30.5 158.8L34.6 166.2M53.4 141.1L81.0 148.3M81.0 148.3L97.7 150.0M81.0 148.3L83.0 156.1L77.8 161.4L79.6 169.7M97.7 150.0L110.2 147.0L119.8 143.2M97.7 150.0L99.5 153.3L96.5 162.3L95.9 167.1M119.8 143.2L146.3 141.2M119.8 143.2L117.4 168.6M146.3 141.2L156.2 143.4L166.3 146.1M146.3 141.2L146.9 155.1L149.9 164.3M166.3 146.1L186.9 143.4M166.3 146.1L161.7 155.4L161.7 162.1M186.9 143.4L194.6 147.5L201.0 148.7L208.2 149.4M186.9 143.4L187.2 152.6L187.0 163.4L189.9 171.6M208.2 149.4L220.3 147.1L228.6 141.0L237.4 139.7M208.2 149.4L207.6 167.0M237.4 139.7L247.5 139.5L259.7 138.9M237.4 139.7L234.5 153.9L235.0 169.2M259.7 138.9L281.4 148.0M306.8 142.8L318.5 144.5L329.7 149.1M306.8 142.8L303.9 155.0L300.2 166.6M329.7 149.1L327.2 154.2L327.6 160.1L325.2 165.6M347.7 148.8L356.9 149.1L362.1 144.1L371.1 145.5M347.7 148.8L349.7 156.1L349.1 160.7L351.9 170.4M371.1 145.5L379.7 144.5L384.1 141.9L392.8 143.9M392.8 143.9L404.8 144.5L412.7 145.9L425.4 143.4M392.8 143.9L394.7 153.5L401.4 167.6M425.4 143.4L434.6 142.0L445.7 143.7M445.7 143.7L446.3 157.4L447.6 168.0M460.7 143.8L472.7 148.3L486.2 149.7M460.7 143.8L467.6 158.1L470.1 171.2M486.2 149.7L503.0 149.6L515.5 148.6M486.2 149.7L493.3 162.0M515.5 148.6L526.5 147.1L535.9 149.7M515.5 148.6L510.3 163.5M535.9 149.7L548.2 148.3L562.8 143.5M562.8 143.5L570.5 141.8L582.1 141.6M562.8 143.5L561.5 150.7L561.1 161.6L562.9 167.7M582.1 141.6L593.1 140.3L603.0 138.6M582.1 141.6L578.2 162.3M603.0 138.6L616.0 138.3L629.7 142.1M603.0 138.6L602.5 150.0L601.9 156.8L603.4 168.3M629.7 142.1L649.3 142.8M629.7 142.1L629.3 172.7M649.3 142.8L677.3 141.3M677.3 141.3L685.5 143.3L697.3 140.6M677.3 141.3L678.0 167.3M697.3 140.6L704.6 143.6L712.3 144.1L716.7 146.8M697.3 140.6L698.2 171.2M716.7 146.8L724.1 145.3L735.0 145.2L742.3 143.0M716.7 146.8L715.8 154.0L718.7 161.9L719.1 170.9M742.3 143.0L746.5 139.2L753.5 139.8L762.2 138.8M742.3 143.0L742.9 154.2L738.6 169.5M762.2 138.8L774.0 145.7L782.4 147.9M782.4 147.9L791.7 145.2L803.3 147.4L813.2 147.2M782.4 147.9L786.2 169.4M813.2 147.2L826.3 144.7L835.4 138.7M813.2 147.2L812.8 157.2L813.7 161.6L814.9 171.1M835.4 138.7L831.0 172.9M-14.9 162.8L11.6 172.4M-14.9 162.8L-19.9 170.8L-20.0 182.5L-22.9 188.9M11.6 172.4L23.2 168.9L34.6 166.2M34.6 166.2L43.4 165.1L53.7 161.9M34.6 166.2L29.8 192.9M53.7 161.9L60.4 162.6L69.1 167.9L79.6 169.7M53.7 161.9L51.8 169.6L52.9 179.4L50.4 186.2M79.6 169.7L95.9 167.1M79.6 169.7L78.3 173.0L74.9 181.3L69.3 185.6M95.9 167.1L101.8 166.5L112.2 168.0L117.4 168.6M95.9 167.1L97.0 174.2L94.1 185.9L96.1 192.7M117.4 168.6L118.7 177.9L121.8 186.3L120.6 192.4M149.9 164.3L156.2 160.9L161.7 162.1M149.9 164.3L145.0 188.1M161.7 162.1L189.9 171.6M161.7 162.1L165.8 176.2L166.8 190.0M189.9 171.6L207.6 167.0M189.9 171.6L186.7 180.1L186.0 190.1M207.6 167.0L235.0 169.2M207.6 167.0L218.1 191.4M235.0 169.2L242.6 166.6L252.9 170.2L260.4 168.2M235.0 169.2L235.0 176.2L237.3 186.6L240.0 195.4M260.4 168.2L253.1 191.9M282.1 167.3L289.2 169.5L294.4 166.6L300.2 166.6M282.1 167.3L280.6 194.8M300.2 166.6L311.2 168.2L325.2 165.6M300.2 166.6L306.3 188.4M325.2 165.6L351.9 170.4M325.2 165.6L323.4 184.6M351.9 170.4L359.6 170.0L370.4 164.9L376.3 163.9M351.9 170.4L353.8 183.8L353.6 195.4M376.3 163.9L372.8 187.4M401.4 167.6L415.9 168.6M401.4 167.6L396.6 180.4L391.9 193.0M415.9 168.6L447.6 168.0M447.6 168.0L454.8 170.4L460.6 169.6L470.1 171.2M447.6 168.0L444.2 175.3L443.8 180.1L443.5 187.3M470.1 171.2L493.3 162.0M470.1 171.2L469.3 178.7L470.4 189.3M493.3 162.0L491.1 172.3L491.0 181.2L488.5 193.8M510.3 163.5L520.8 166.1L530.4 166.2L540.8 169.1M510.3 163.5L512.2 174.0L511.9 182.5L515.7 188.9M540.8 169.1L536.8 180.0L532.2 192.8M562.9 167.7L578.2 162.3M562.9 167.7L559.5 174.6L561.7 184.7L558.4 192.4M578.2 162.3L603.4 168.3M603.4 168.3L616.9 170.7L629.3 172.7M629.3 172.7L632.4 168.6L641.5 166.3L645.3 166.1M645.3 166.1L650.0 176.3L651.6 182.5L653.4 190.9M678.0 167.3L683.9 170.3L692.0 170.9L698.2 171.2M678.0 167.3L670.4 192.6M698.2 171.2L707.6 169.7L719.1 170.9M698.2 171.2L693.8 174.6L694.6 183.9L691.1 187.1M719.1 170.9L725.4 168.5L732.9 169.0L738.6 169.5M719.1 170.9L718.3 179.4L715.8 186.8M738.6 169.5L752.6 169.4L763.0 170.6M738.6 169.5L737.3 174.7L737.4 180.4L739.3 187.3M763.0 170.6L768.5 179.5L770.6 188.3M786.2 169.4L796.6 170.1L803.0 168.8L814.9 171.1M786.2 169.4L786.0 192.8M814.9 171.1L821.9 170.7L831.0 172.9M814.9 171.1L814.7 175.3L810.9 182.2L810.5 189.9M831.0 172.9L831.6 177.1L834.2 183.7L838.0 185.6M-22.9 188.9L-15.4 192.3L-5.7 195.5L4.0 195.5M-22.9 188.9L-17.9 196.0L-16.8 207.5M4.0 195.5L17.2 192.5L29.8 192.9M29.8 192.9L50.4 186.2M29.8 192.9L28.1 203.8L27.4 211.0M50.4 186.2L69.3 185.6M50.4 186.2L49.8 219.0M69.3 185.6L78.2 186.6L88.4 189.4L96.1 192.7M69.3 185.6L75.9 211.5M96.1 192.7L105.5 193.4L112.4 190.8L120.6 192.4M96.1 192.7L98.4 203.0L98.3 218.1M120.6 192.4L122.4 196.8L125.1 205.2L124.4 212.6M145.0 188.1L166.8 190.0M145.0 188.1L142.3 195.8L139.8 207.9M166.8 190.0L164.1 202.4L161.0 217.9M186.0 190.1L196.9 190.5L208.1 190.4L218.1 191.4M186.0 190.1L186.2 202.3L186.0 215.9M218.1 191.4L225.2 192.9L234.2 195.6L240.0 195.4M218.1 191.4L220.4 200.8L216.1 207.6L218.7 214.0M240.0 195.4L243.3 196.3L248.9 192.3L253.1 191.9M240.0 195.4L242.1 204.1L239.0 211.1L240.2 216.9M253.1 191.9L259.9 206.1L264.3 215.9M280.6 194.8L282.2 201.4L279.9 206.8L280.9 210.7M306.3 188.4L310.7 185.7L318.0 184.3L323.4 184.6M306.3 188.4L305.0 202.1L305.3 210.9M323.4 184.6L330.6 198.7L333.3 208.0M353.6 195.4L347.4 211.8M372.8 187.4L371.5 201.2L374.6 214.0M391.9 193.0L415.4 190.7M391.9 193.0L401.1 210.6M415.4 190.7L422.5 187.7L434.3 187.4L443.5 187.3M415.4 190.7L418.7 199.3L423.7 210.7M443.5 187.3L456.1 190.4L470.4 189.3M470.4 189.3L478.4 190.2L488.5 193.8M470.4 189.3L468.5 205.5L461.7 218.2M488.5 193.8L515.7 188.9M488.5 193.8L492.0 201.4L491.2 213.7M515.7 188.9L523.4 191.9L532.2 192.8M515.7 188.9L514.6 201.4L509.6 215.2M532.2 192.8L541.4 191.8L550.4 195.0L558.4 192.4M532.2 192.8L533.5 202.1L539.1 215.3M558.4 192.4L572.4 190.6L586.6 193.1M558.4 192.4L561.9 214.0M586.6 193.1L593.4 190.8L600.2 189.5M586.6 193.1L586.4 200.2L583.5 205.3L579.5 212.6M600.2 189.5L616.8 185.9L631.5 187.1M600.2 189.5L600.4 203.5L602.8 215.0M631.5 187.1L634.2 202.4L632.7 217.1M653.4 190.9L662.5 192.9L670.4 192.6M653.4 190.9L651.6 196.1L647.9 205.3L646.4 213.0M670.4 192.6L678.9 191.7L682.8 186.5L691.1 187.1M670.4 192.6L677.9 219.0M691.1 187.1L697.8 185.0L705.9 186.9L715.8 186.8M715.8 186.8L728.1 187.9L739.3 187.3M715.8 186.8L714.9 199.7L716.3 215.7M739.3 187.3L770.6 188.3M739.3 187.3L740.1 196.5L735.6 207.0L736.1 215.6M770.6 188.3L786.0 192.8M786.0 192.8L810.5 189.9M786.0 192.8L790.5 218.3M810.5 189.9L819.1 186.5L827.3 184.7L838.0 185.6M810.5 189.9L807.7 200.4L805.4 207.7M838.0 185.6L835.0 192.9L838.3 206.3L834.9 213.7M-16.8 207.5L3.0 209.9M-16.8 207.5L-16.1 223.9L-12.3 240.5M3.0 209.9L11.7 212.1L18.6 208.7L27.4 211.0M3.0 209.9L4.1 221.1L4.8 230.7L8.8 238.1M27.4 211.0L36.6 215.9L49.8 219.0M27.4 211.0L32.8 240.2M49.8 219.0L65.2 213.8L75.9 211.5M49.8 219.0L53.9 225.4L55.5 226.1L55.1 232.5M75.9 211.5L83.4 213.5L91.2 216.2L98.3 218.1M75.9 211.5L75.8 234.3M98.3 218.1L124.4 212.6M98.3 218.1L97.1 231.2L99.5 241.8M124.4 212.6L130.3 212.8L134.8 211.1L139.8 207.9M124.4 212.6L124.6 241.1M139.8 207.9L161.0 217.9M139.8 207.9L140.0 218.0L143.5 228.7L142.5 237.0M161.0 217.9L171.1 214.8L186.0 215.9M161.0 217.9L162.3 222.4L162.6 230.0M186.0 215.9L197.8 216.1L205.9 215.9L218.7 214.0M186.0 215.9L189.9 224.1L192.5 232.3M218.7 214.0L225.3 216.2L233.1 216.9L240.2 216.9M218.7 214.0L218.2 222.7L217.8 233.8M240.2 216.9L245.8 217.4L254.4 215.3L264.3 215.9M280.9 210.7L291.3 208.3L305.3 210.9M280.9 210.7L278.3 222.8L277.7 235.3M305.3 210.9L313.4 209.5L325.1 208.3L333.3 208.0M347.4 211.8L363.1 214.5L374.6 214.0M347.4 211.8L351.8 221.8L350.4 228.9L354.5 239.7M374.6 214.0L390.2 210.4L401.1 210.6M374.6 214.0L375.1 224.0L373.3 237.5M401.1 210.6L423.7 210.7M401.1 210.6L402.0 215.8L404.1 225.1L402.2 232.0M423.7 210.7L427.9 210.5L437.3 213.4L440.5 217.1M423.7 210.7L423.0 234.9M440.5 217.1L449.3 220.0L461.7 218.2M440.5 217.1L442.4 223.9L443.9 231.0M461.7 218.2L491.2 213.7M461.7 218.2L464.0 226.2L463.7 231.6L467.4 239.8M491.2 213.7L497.2 215.1L504.9 212.7L509.6 215.2M491.2 213.7L491.4 225.8L488.7 241.6M509.6 215.2L524.4 216.3L539.1 215.3M509.6 215.2L511.9 224.9L512.9 233.8M539.1 215.3L548.7 216.6L554.4 212.8L561.9 214.0M539.1 215.3L537.2 240.1M561.9 214.0L560.6 218.4L560.3 227.9L561.1 231.2M579.5 212.6L590.8 216.1L602.8 215.0M579.5 212.6L578.9 240.6M602.8 215.0L606.7 221.2L608.6 230.8M632.7 217.1L625.8 226.2L623.1 234.3M646.4 213.0L664.1 218.3L677.9 219.0M646.4 213.0L647.3 226.1L646.4 237.5M677.9 219.0L701.5 208.0M701.5 208.0L707.3 209.0L713.5 211.2L716.3 215.7M701.5 208.0L699.0 219.0L700.4 230.8M716.3 215.7L722.4 234.9M759.4 209.0L776.9 215.7L790.5 218.3M759.4 209.0L763.8 240.6M790.5 218.3L794.1 214.4L799.6 208.9L805.4 207.7M790.5 218.3L789.3 229.7L785.9 238.1M834.9 213.7L834.2 231.3M-12.3 240.5L-4.8 240.3L3.1 240.7L8.8 238.1M-12.3 240.5L-13.4 258.3M8.8 238.1L32.8 240.2M8.8 238.1L7.7 243.6L5.0 250.1L6.4 254.6M32.8 240.2L55.1 232.5M32.8 240.2L31.6 260.8M55.1 232.5L59.5 233.5L70.3 232.2L75.8 234.3M55.1 232.5L54.2 241.8L53.8 251.0L56.8 260.1M75.8 234.3L99.5 241.8M75.8 234.3L79.0 252.0L80.8 264.6M99.5 241.8L109.4 240.7L115.0 241.4L124.6 241.1M99.5 241.8L101.0 245.9L101.4 254.4L99.9 258.4M124.6 241.1L142.5 237.0M124.6 241.1L124.9 246.1L125.2 255.6L124.8 261.4M142.5 237.0L147.1 232.9L157.2 234.2L162.6 230.0M142.5 237.0L144.5 261.2M162.6 230.0L192.5 232.3M162.6 230.0L167.2 239.8L169.3 250.6L171.9 259.9M192.5 232.3L203.3 231.3L208.2 234.6L217.8 233.8M192.5 232.3L192.3 244.7L188.5 260.7M217.8 233.8L223.9 234.2L228.7 239.4L231.8 241.3M217.8 233.8L214.2 256.5M231.8 241.3L240.8 255.5M255.3 240.8L277.7 235.3M255.3 240.8L257.1 252.3L258.9 260.9M277.7 235.3L293.3 239.6L309.3 240.2M277.7 235.3L283.5 248.3L285.8 259.0M309.3 240.2L330.5 241.0M309.3 240.2L308.8 242.8L306.1 250.6L306.5 254.1M330.5 241.0L322.5 255.7M354.5 239.7L361.1 237.9L367.5 238.2L373.3 237.5M354.5 239.7L356.1 246.4L356.1 256.1M373.3 237.5L385.2 236.2L394.9 234.7L402.2 232.0M402.2 232.0L399.4 241.7L393.8 250.1L392.7 255.9M423.0 234.9L420.7 243.4L421.0 248.9L422.1 253.2M443.9 231.0L451.7 235.7L460.6 235.7L467.4 239.8M443.9 231.0L445.2 236.8L442.5 246.6L444.1 255.5M467.4 239.8L478.7 238.7L488.7 241.6M488.7 241.6L512.9 233.8M488.7 241.6L487.2 252.4L484.9 264.3M512.9 233.8L520.5 237.7L530.4 238.3L537.2 240.1M512.9 233.8L514.1 246.7L511.1 256.2M537.2 240.1L561.1 231.2M537.2 240.1L536.1 255.1M561.1 231.2L571.1 237.3L578.9 240.6M561.1 231.2L555.8 263.0M608.6 230.8L623.1 234.3M608.6 230.8L606.9 244.7L600.5 262.1M623.1 234.3L637.1 238.2L646.4 237.5M623.1 234.3L623.0 245.9L623.4 250.8L623.1 262.1M646.4 237.5L677.0 230.4M646.4 237.5L648.8 243.9L648.8 249.9L650.4 258.4M677.0 230.4L671.6 240.6L672.6 250.5L667.7 263.5M700.4 230.8L695.4 247.7L694.6 263.8M722.4 234.9L729.1 233.2L735.0 234.3L741.3 234.3M722.4 234.9L723.6 262.7M741.3 234.3L748.7 237.8L754.0 238.3L763.8 240.6M741.3 234.3L744.5 247.1L746.5 264.6M763.8 240.6L764.4 261.8M785.9 238.1L800.2 236.2L813.7 233.8M785.9 238.1L783.2 248.5L783.8 254.6L784.3 263.4M813.7 233.8L824.1 233.1L834.2 231.3M834.2 231.3L829.8 242.9L832.4 252.5L828.3 263.3M-13.4 258.3L6.4 254.6M-13.4 258.3L-12.1 268.9L-13.7 278.0M6.4 254.6L4.5 270.0L2.3 285.8M31.6 260.8L40.5 258.8L49.7 259.1L56.8 260.1M31.6 260.8L27.9 273.5L28.9 282.1M56.8 260.1L56.2 273.6L50.5 284.0M80.8 264.6L77.0 271.0L73.7 281.0L69.1 286.4M99.9 258.4L110.3 260.2L118.0 260.4L124.8 261.4M99.9 258.4L101.2 278.6M124.8 261.4L133.9 261.1L144.5 261.2M124.8 261.4L125.5 266.6L122.6 278.1L123.3 283.6M144.5 261.2L158.5 259.1L171.9 259.9M144.5 261.2L145.5 269.2L145.0 281.4M171.9 259.9L179.8 258.6L181.2 260.9L188.5 260.7M171.9 259.9L171.1 269.8L168.9 277.8M188.5 260.7L195.7 260.5L205.5 257.0L214.2 256.5M188.5 260.7L187.0 266.7L191.0 276.7L190.4 285.6M214.2 256.5L240.8 255.5M214.2 256.5L218.0 270.2L217.7 282.2M240.8 255.5L249.3 255.4L253.0 258.8L258.9 260.9M240.8 255.5L235.3 265.6L236.1 274.9L231.4 282.6M258.9 260.9L267.1 261.5L276.6 261.2L285.8 259.0M285.8 259.0L292.8 255.1L300.3 257.0L306.5 254.1M285.8 259.0L286.0 271.8L284.9 285.8M306.5 254.1L322.5 255.7M306.5 254.1L308.7 263.6L310.0 276.8L310.7 286.9M322.5 255.7L332.8 255.3L344.9 258.4L356.1 256.1M322.5 255.7L324.0 261.1L322.3 272.2L323.1 278.4M356.1 256.1L361.8 259.4L367.8 259.4L369.9 260.1M356.1 256.1L356.0 276.2M369.9 260.1L376.7 259.0L383.8 256.4L392.7 255.9M369.9 260.1L375.8 284.0M392.7 255.9L422.1 253.2M392.7 255.9L398.3 285.0M422.1 253.2L419.6 263.2L421.5 271.8L421.0 280.0M444.1 255.5L462.7 257.2M444.1 255.5L445.2 269.1L445.9 284.3M462.7 257.2L476.0 261.9L484.9 264.3M462.7 257.2L460.9 264.5L463.8 269.3L460.7 279.1M484.9 264.3L499.4 262.7L511.1 256.2M484.9 264.3L484.9 272.9L483.6 278.9M511.1 256.2L536.1 255.1M511.1 256.2L511.8 269.6L510.9 283.6M536.1 255.1L555.8 263.0M536.1 255.1L537.1 265.7L534.0 274.6L535.2 281.5M555.8 263.0L553.5 266.8L554.1 272.5L552.8 277.5M578.4 254.8L584.7 255.3L592.6 259.5L600.5 262.1M578.4 254.8L580.6 270.0L582.1 286.7M600.5 262.1L623.1 262.1M600.5 262.1L604.0 267.2L603.3 275.6L605.5 281.2M623.1 262.1L638.5 261.6L650.4 258.4M623.1 262.1L628.6 281.9M650.4 258.4L658.7 260.2L667.7 263.5M650.4 258.4L653.3 269.9L655.5 279.2M667.7 263.5L678.4 262.8L685.1 261.7L694.6 263.8M667.7 263.5L676.4 283.4M694.6 263.8L705.8 262.2L715.1 263.8L723.6 262.7M694.6 263.8L696.3 271.2L696.3 280.9M723.6 262.7L733.4 264.2L746.5 264.6M723.6 262.7L719.6 267.4L714.7 273.1L713.4 279.2M746.5 264.6L764.4 261.8M764.4 261.8L765.7 281.9M784.3 263.4L793.2 261.3L799.1 261.1L806.5 263.3M784.3 263.4L785.4 270.4L785.4 281.2M806.5 263.3L812.1 263.3L822.8 261.8L828.3 263.3M806.5 263.3L805.2 270.1L808.6 276.6L809.2 284.9M828.3 263.3L833.1 269.1L832.0 276.9L836.7 282.0M-13.7 278.0L-15.0 308.0M2.3 285.8L15.1 285.0L28.9 282.1M28.9 282.1L50.5 284.0M28.9 282.1L27.4 291.4L29.4 298.4L29.1 309.1M50.5 284.0L56.8 284.0L64.7 285.3L69.1 286.4M50.5 284.0L51.4 287.5L52.8 294.4L51.8 300.8M69.1 286.4L82.3 284.8L92.8 280.3L101.2 278.6M69.1 286.4L72.1 292.7L74.1 293.8L78.9 299.9M101.2 278.6L108.7 280.5L116.7 280.8L123.3 283.6M123.3 283.6L145.0 281.4M123.3 283.6L127.2 295.4L126.5 304.8M145.0 281.4L155.4 277.3L168.9 277.8M145.0 281.4L144.7 292.7L145.0 299.4L142.1 308.8M168.9 277.8L177.1 279.1L181.5 281.8L190.4 285.6M168.9 277.8L165.8 288.3L164.1 297.8L164.7 311.0M190.4 285.6L217.7 282.2M190.4 285.6L194.3 291.8L194.8 301.9M217.7 282.2L224.1 283.7L231.4 282.6M217.7 282.2L212.1 308.8M231.4 282.6L241.0 284.4L248.9 284.8L260.9 283.9M231.4 282.6L235.9 295.1L236.8 303.5M260.9 283.9L271.0 287.2L284.9 285.8M260.9 283.9L258.0 301.3M284.9 285.8L293.5 287.4L304.0 288.9L310.7 286.9M284.9 285.8L286.0 293.2L286.2 302.1M310.7 286.9L323.1 278.4M310.7 286.9L307.5 290.9L307.1 296.9L306.0 303.7M323.1 278.4L333.7 275.3L347.5 276.9L356.0 276.2M323.1 278.4L327.7 286.4L327.8 295.6L331.7 304.0M356.0 276.2L362.5 277.4L369.4 279.9L375.8 284.0M375.8 284.0L398.3 285.0M375.8 284.0L370.3 309.5M398.3 285.0L411.0 284.7L421.0 280.0M421.0 280.0L426.9 279.5L437.3 285.0L445.9 284.3M421.0 280.0L418.0 287.8L421.6 296.1L419.0 306.3M445.9 284.3L460.7 279.1M445.9 284.3L445.1 297.7L447.3 306.5M460.7 279.1L483.6 278.9M460.7 279.1L466.4 309.9M483.6 278.9L496.2 282.1L510.9 283.6M483.6 278.9L490.0 289.0L492.7 301.9M510.9 283.6L519.9 282.9L527.1 283.6L535.2 281.5M510.9 283.6L508.6 305.0M535.2 281.5L545.2 278.4L552.8 277.5M552.8 277.5L554.1 283.3L557.9 291.9L560.7 301.7M582.1 286.7L580.0 305.4M605.5 281.2L615.3 283.8L628.6 281.9M605.5 281.2L601.7 310.2M628.6 281.9L655.5 279.2M628.6 281.9L630.1 297.1L627.7 309.5M655.5 279.2L667.5 283.7L676.4 283.4M655.5 279.2L655.8 293.7L654.5 304.3M676.4 283.4L688.6 281.0L696.3 280.9M676.4 283.4L673.8 293.5L674.1 300.7L675.0 306.9M696.3 280.9L697.0 287.3L699.2 298.6L701.3 306.0M713.4 279.2L715.3 294.9L715.9 310.4M738.6 280.3L765.7 281.9M738.6 280.3L742.9 285.0L745.5 292.5L746.6 299.9M765.7 281.9L785.4 281.2M765.7 281.9L765.0 288.2L763.2 296.9L765.0 307.4M785.4 281.2L795.4 284.6L809.2 284.9M785.4 281.2L789.4 291.0L791.4 301.3M809.2 284.9L816.4 282.2L829.6 284.3L836.7 282.0M809.2 284.9L814.0 302.7M836.7 282.0L836.7 292.7L832.7 299.9M-15.0 308.0L-8.4 302.8L0.1 299.9M-15.0 308.0L-16.8 314.7L-15.5 323.5L-18.7 330.9M0.1 299.9L12.4 305.2L29.1 309.1M0.1 299.9L2.4 308.0L9.0 316.0L11.2 326.2M29.1 309.1L34.5 306.9L42.8 304.9L51.8 300.8M29.1 309.1L25.6 329.3M51.8 300.8L78.9 299.9M51.8 300.8L46.7 318.5L46.0 332.9M78.9 299.9L99.0 299.3M78.9 299.9L76.2 312.2L75.8 321.6L74.9 332.4M99.0 299.3L108.9 302.7L117.8 303.7L126.5 304.8M99.0 299.3L102.0 308.8L103.0 317.5L102.6 329.5M126.5 304.8L142.1 308.8M126.5 304.8L123.7 320.1L122.7 332.2M142.1 308.8L152.8 309.0L164.7 311.0M142.1 308.8L145.5 332.2M164.7 311.0L194.8 301.9M164.7 311.0L172.9 326.2M194.8 301.9L205.0 303.9L212.1 308.8M194.8 301.9L194.1 311.6L192.3 317.5L187.9 326.0M212.1 308.8L236.8 303.5M212.1 308.8L209.9 325.3M236.8 303.5L245.4 303.4L258.0 301.3M236.8 303.5L234.4 327.8M258.0 301.3L266.6 302.1L278.1 303.0L286.2 302.1M286.2 302.1L293.7 301.7L306.0 303.7M306.0 303.7L319.9 304.8L331.7 304.0M306.0 303.7L306.2 327.4M331.7 304.0L351.6 305.0M331.7 304.0L325.3 323.8M351.6 305.0L347.6 328.2M370.3 309.5L380.1 310.4L389.7 304.8L395.7 304.7M370.3 309.5L370.1 313.8L371.8 317.8L374.1 324.2M395.7 304.7L404.7 303.3L412.0 306.9L419.0 306.3M419.0 306.3L435.5 304.4L447.3 306.5M419.0 306.3L420.6 315.8L422.1 320.9L424.0 331.3M447.3 306.5L454.9 306.4L460.7 307.0L466.4 309.9M447.3 306.5L443.9 313.4L438.9 322.0L438.4 329.6M466.4 309.9L477.3 305.9L483.4 304.5L492.7 301.9M466.4 309.9L469.9 323.4L470.5 332.9M492.7 301.9L498.2 302.6L508.6 305.0M492.7 301.9L491.1 317.9L488.3 332.4M508.6 305.0L531.5 299.5M508.6 305.0L506.6 310.9L509.5 317.3L509.4 325.6M531.5 299.5L560.7 301.7M531.5 299.5L531.8 311.7L533.1 323.8L535.6 332.5M580.0 305.4L601.7 310.2M580.0 305.4L578.5 314.1L578.7 325.3L581.3 333.1M601.7 310.2L627.7 309.5M601.7 310.2L600.2 312.9L604.0 316.9L603.7 323.8M627.7 309.5L654.5 304.3M627.7 309.5L623.0 320.0L622.6 329.6M654.5 304.3L675.0 306.9M654.5 304.3L650.0 329.1M675.0 306.9L689.2 307.8L701.3 306.0M701.3 306.0L704.3 309.6L709.6 309.3L715.9 310.4M701.3 306.0L695.7 332.3M715.9 310.4L730.2 304.7L746.6 299.9M715.9 310.4L713.8 321.0L713.7 328.1M746.6 299.9L744.3 332.5M765.0 307.4L791.4 301.3M765.0 307.4L762.0 314.5L763.4 324.0M791.4 301.3L798.8 301.5L806.6 303.6L814.0 302.7M791.4 301.3L791.1 333.3M814.0 302.7L812.2 324.5M832.7 299.9L839.9 331.4M-18.7 330.9L-4.4 330.1L11.2 326.2M-18.7 330.9L-12.2 350.9M11.2 326.2L8.5 334.4L11.9 344.3L9.8 353.6M25.6 329.3L46.0 332.9M25.6 329.3L28.1 348.8M46.0 332.9L55.3 333.0L64.1 331.3L74.9 332.4M46.0 332.9L50.0 349.4M74.9 332.4L90.1 331.2L102.6 329.5M74.9 332.4L75.4 337.1L76.1 342.9L78.0 348.6M102.6 329.5L109.9 329.6L113.8 331.7L122.7 332.2M102.6 329.5L100.2 337.0L101.1 345.6L100.5 352.4M122.7 332.2L132.8 334.7L135.4 331.2L145.5 332.2M122.7 332.2L122.5 344.5L124.6 354.7M145.5 332.2L157.1 332.1L165.0 326.3L172.9 326.2M145.5 332.2L144.9 339.6L140.1 346.9M172.9 326.2L170.2 336.2L162.5 349.1M187.9 326.0L209.9 325.3M187.9 326.0L187.4 338.8L190.3 347.2M209.9 325.3L234.4 327.8M209.9 325.3L207.7 354.7M234.4 327.8L242.0 326.7L253.4 328.1L264.1 328.9M264.1 328.9L268.5 329.1L275.5 333.1L282.3 333.1M264.1 328.9L262.8 336.5L263.7 343.4L261.0 348.6M282.3 333.1L306.2 327.4M282.3 333.1L281.1 336.6L281.0 344.5L279.1 350.7M306.2 327.4L312.7 326.1L316.5 326.4L325.3 323.8M306.2 327.4L303.7 335.3L300.6 344.0L299.1 348.7M325.3 323.8L331.8 323.7L338.1 326.5L347.6 328.2M325.3 323.8L326.6 339.2L326.6 350.9M347.6 328.2L374.1 324.2M347.6 328.2L348.4 339.5L346.1 353.8M374.1 324.2L395.6 332.0M395.6 332.0L403.9 330.0L415.7 330.0L424.0 331.3M395.6 332.0L394.3 337.2L397.5 347.1M424.0 331.3L429.0 330.2L436.0 329.3L438.4 329.6M424.0 331.3L423.2 349.8M438.4 329.6L439.3 337.7L441.7 339.3L445.8 346.9M470.5 332.9L470.6 338.8L467.7 346.8M488.3 332.4L509.4 325.6M488.3 332.4L492.3 353.8M509.4 325.6L522.0 331.5L535.6 332.5M509.4 325.6L509.5 353.0M535.6 332.5L548.3 327.9L561.4 325.9M535.6 332.5L539.3 345.8M561.4 325.9L567.3 325.9L575.3 328.4L581.3 333.1M561.4 325.9L562.2 333.4L558.2 341.6L558.8 351.9M581.3 333.1L591.3 330.3L603.7 323.8M581.3 333.1L586.2 341.8L586.8 350.4M603.7 323.8L609.9 326.4L614.8 327.0L622.6 329.6M622.6 329.6L650.0 329.1M622.6 329.6L624.3 337.6L622.2 343.3L625.0 352.2M650.0 329.1L655.2 348.9M670.9 326.6L685.0 331.7L695.7 332.3M670.9 326.6L672.1 342.9L676.6 354.8M695.7 332.3L701.9 330.8L707.4 332.0L713.7 328.1M695.7 332.3L695.1 338.9L697.8 343.7L701.0 346.8M713.7 328.1L744.3 332.5M713.7 328.1L715.5 336.1L719.9 340.9L721.2 348.4M744.3 332.5L763.4 324.0M763.4 324.0L791.1 333.3M763.4 324.0L761.4 331.2L764.6 339.7L763.3 345.1M791.1 333.3L797.7 330.1L804.7 327.1L812.2 324.5M791.1 333.3L784.4 349.0M812.2 324.5L819.4 327.6L831.7 326.6L839.9 331.4M812.2 324.5L812.7 336.7L816.2 348.6M839.9 331.4L835.5 338.4L832.5 339.7L832.4 347.2M-12.2 350.9L-6.3 350.7L3.4 354.8L9.8 353.6M-12.2 350.9L-13.6 378.2M9.8 353.6L28.1 348.8M9.8 353.6L7.3 362.4L4.5 373.3M28.1 348.8L40.6 351.0L50.0 349.4M28.1 348.8L25.8 355.5L28.3 365.5L26.6 373.6M50.0 349.4L62.4 347.0L78.0 348.6M50.0 349.4L48.9 355.1L48.0 359.9L49.3 368.5M78.0 348.6L91.2 352.1L100.5 352.4M78.0 348.6L76.0 371.4M100.5 352.4L124.6 354.7M100.5 352.4L94.1 374.7M124.6 354.7L130.1 348.9L140.1 346.9M124.6 354.7L120.6 359.6L122.2 365.5L119.0 368.5M140.1 346.9L151.9 348.6L162.5 349.1M140.1 346.9L141.3 354.8L147.4 365.9L148.2 375.4M162.5 349.1L173.4 347.5L178.7 346.1L190.3 347.2M162.5 349.1L165.0 358.3L166.0 366.8L165.6 374.2M190.3 347.2L198.8 348.8L207.7 354.7M190.3 347.2L185.6 377.5M207.7 354.7L234.2 353.3M207.7 354.7L209.2 357.9L208.2 363.4L210.3 368.7M234.2 353.3L261.0 348.6M234.2 353.3L234.0 360.1L231.3 371.1M261.0 348.6L279.1 350.7M261.0 348.6L257.8 357.9L254.3 370.4L253.2 377.6M279.1 350.7L299.1 348.7M279.1 350.7L280.3 359.6L279.0 364.6L277.1 369.8M299.1 348.7L306.7 350.8L315.8 351.6L326.6 350.9M299.1 348.7L307.7 376.5M326.6 350.9L346.1 353.8M326.6 350.9L330.3 365.9L329.6 376.5M346.1 353.8L362.6 354.5L378.7 356.9M346.1 353.8L347.1 362.2L352.4 369.3L353.2 378.4M378.7 356.9L397.5 347.1M378.7 356.9L376.6 363.1L376.0 371.7M397.5 347.1L412.2 347.2L423.2 349.8M397.5 347.1L394.8 368.6M423.2 349.8L445.8 346.9M423.2 349.8L423.4 361.1L419.0 371.1M445.8 346.9L467.7 346.8M445.8 346.9L442.8 363.0L442.9 374.5M467.7 346.8L476.9 349.9L486.2 350.8L492.3 353.8M467.7 346.8L460.3 371.7M492.3 353.8L499.6 352.9L509.5 353.0M492.3 353.8L492.0 376.1M509.5 353.0L539.3 345.8M509.5 353.0L510.4 361.6L509.8 367.8L508.3 377.7M539.3 345.8L540.5 372.6M558.8 351.9L566.4 352.3L575.5 352.5L586.8 350.4M558.8 351.9L554.3 372.9M586.8 350.4L599.6 355.8M586.8 350.4L576.2 379.9M599.6 355.8L613.5 353.5L625.0 352.2M599.6 355.8L603.4 362.1L606.0 372.7M625.0 352.2L634.8 349.8L643.4 352.0L655.2 348.9M625.0 352.2L628.7 359.0L628.2 366.5L630.2 377.3M655.2 348.9L665.8 353.3L676.6 354.8M655.2 348.9L651.4 378.4M676.6 354.8L690.4 348.5L701.0 346.8M701.0 346.8L708.9 348.9L715.2 347.9L721.2 348.4M721.2 348.4L732.7 350.8L744.0 355.1M721.2 348.4L722.0 355.2L722.2 367.0L722.7 374.6M744.0 355.1L763.3 345.1M744.0 355.1L742.4 360.5L745.5 368.7M763.3 345.1L775.4 347.6L784.4 349.0M763.3 345.1L761.4 373.7M784.4 349.0L797.4 348.1L806.2 346.3L816.2 348.6M784.4 349.0L786.5 371.6M816.2 348.6L832.4 347.2M816.2 348.6L813.5 375.7M-13.6 378.2L-6.2 377.4L4.5 373.3M-13.6 378.2L-14.0 385.7L-12.6 395.2L-15.7 401.9M4.5 373.3L11.3 374.8L21.1 375.6L26.6 373.6M4.5 373.3L2.3 394.7M26.6 373.6L34.9 371.0L41.7 367.8L49.3 368.5M26.6 373.6L28.6 380.1L30.7 387.8L33.2 397.8M49.3 368.5L60.5 368.1L69.1 370.4L76.0 371.4M49.3 368.5L49.1 378.6L53.0 389.9L54.1 399.9M76.0 371.4L94.1 374.7M76.0 371.4L77.0 385.6L78.5 395.7M94.1 374.7L101.4 372.8L110.0 369.0L119.0 368.5M94.1 374.7L98.0 382.9L98.3 394.8M119.0 368.5L133.5 371.3L148.2 375.4M148.2 375.4L165.6 374.2M148.2 375.4L147.7 382.2L142.9 393.2L140.9 400.0M185.6 377.5L210.3 368.7M185.6 377.5L186.4 384.2L185.3 386.8L186.4 392.3M210.3 368.7L219.5 367.7L226.0 368.0L231.3 371.1M210.3 368.7L209.6 377.8L209.3 391.5M231.3 371.1L253.2 377.6M231.3 371.1L233.9 385.4L237.2 399.8M253.2 377.6L267.0 375.4L277.1 369.8M253.2 377.6L259.1 387.4L260.7 392.4L263.9 402.5M277.1 369.8L283.1 392.7M307.7 376.5L313.7 376.3L320.5 375.3L329.6 376.5M307.7 376.5L309.2 397.2M329.6 376.5L335.8 374.7L344.3 377.0L353.2 378.4M329.6 376.5L328.4 381.9L327.4 390.4L326.7 398.3M353.2 378.4L362.2 376.5L368.7 375.0L376.0 371.7M353.2 378.4L355.8 386.9L353.5 396.1M376.0 371.7L385.3 368.0L394.8 368.6M376.0 371.7L377.9 380.4L376.8 386.6L379.4 391.7M394.8 368.6L419.0 371.1M394.8 368.6L398.1 384.7L400.5 401.8M419.0 371.1L442.9 374.5M419.0 371.1L421.6 377.6L421.6 387.1L423.7 393.6M442.9 374.5L460.3 371.7M442.9 374.5L443.2 385.0L438.0 395.6L438.8 402.7M460.3 371.7L475.8 373.0L492.0 376.1M460.3 371.7L460.9 379.4L465.4 384.6L467.7 391.7M492.0 376.1L499.8 376.4L504.3 375.1L508.3 377.7M492.0 376.1L487.3 384.4L484.9 391.9L483.6 398.0M508.3 377.7L525.8 374.5L540.5 372.6M508.3 377.7L510.3 395.5M540.5 372.6L554.3 372.9M540.5 372.6L531.7 393.3M554.3 372.9L563.8 376.4L576.2 379.9M576.2 379.9L606.0 372.7M576.2 379.9L576.3 397.8M606.0 372.7L630.2 377.3M606.0 372.7L601.5 402.5M630.2 377.3L642.3 376.8L651.4 378.4M630.2 377.3L633.3 387.7L633.7 393.5L632.6 402.8M651.4 378.4L658.9 376.5L664.5 375.7L674.2 373.5M651.4 378.4L650.3 382.4L646.9 387.0L645.9 394.0M674.2 373.5L683.2 370.2L691.3 372.4L700.2 370.2M700.2 370.2L705.3 371.6L716.5 372.4L722.7 374.6M700.2 370.2L696.1 385.9L696.1 399.5M722.7 374.6L745.5 368.7M722.7 374.6L719.6 401.7M745.5 368.7L751.9 372.5L761.4 373.7M745.5 368.7L744.7 384.4L744.5 395.3M761.4 373.7L786.5 371.6M761.4 373.7L763.0 387.3L764.0 402.6M786.5 371.6L813.5 375.7M786.5 371.6L786.7 382.4L790.7 392.9L793.6 400.6M813.5 375.7L821.0 371.7L828.5 372.1M813.5 375.7L811.0 392.7M828.5 372.1L833.5 383.3L835.6 391.7L837.1 399.2M-15.7 401.9L-18.5 408.8L-21.7 414.9L-21.7 423.5M2.3 394.7L33.2 397.8M2.3 394.7L9.9 416.1M33.2 397.8L41.7 400.9L54.1 399.9M33.2 397.8L32.8 412.6L34.7 423.3M54.1 399.9L65.4 395.7L78.5 395.7M54.1 399.9L53.0 405.2L51.9 415.2M78.5 395.7L87.3 397.5L98.3 394.8M78.5 395.7L77.4 409.6L75.6 419.1M98.3 394.8L103.2 395.5L110.3 397.2L115.3 399.2M115.3 399.2L123.1 398.1L133.0 401.8L140.9 400.0M115.3 399.2L116.8 406.2L120.9 408.7L124.2 416.2M140.9 400.0L155.8 398.8L168.6 395.7M140.9 400.0L142.2 409.4L139.1 418.1M168.6 395.7L176.8 395.1L186.4 392.3M168.6 395.7L171.9 404.6L170.6 414.7M186.4 392.3L209.3 391.5M186.4 392.3L188.7 403.1L186.5 416.1M209.3 391.5L237.2 399.8M209.3 391.5L209.6 401.0L211.3 407.1L215.0 417.2M237.2 399.8L263.9 402.5M237.2 399.8L236.0 417.7M283.1 392.7L309.2 397.2M283.1 392.7L280.2 403.0L280.7 413.1L277.6 425.1M309.2 397.2L314.7 395.3L322.0 399.9L326.7 398.3M309.2 397.2L306.9 407.6L303.2 420.4M326.7 398.3L353.5 396.1M326.7 398.3L328.1 406.6L327.6 412.2L325.0 417.5M353.5 396.1L366.8 395.1L379.4 391.7M353.5 396.1L346.9 416.7M379.4 391.7L386.9 395.2L393.3 400.3L400.5 401.8M379.4 391.7L375.4 402.1L373.7 413.7L372.9 424.8M400.5 401.8L409.8 397.0L423.7 393.6M400.5 401.8L394.2 414.8M423.7 393.6L438.8 402.7M438.8 402.7L455.0 398.3L467.7 391.7M467.7 391.7L473.7 393.1L483.6 398.0M467.7 391.7L463.8 425.4M483.6 398.0L490.4 398.5L502.2 395.6L510.3 395.5M483.6 398.0L484.7 425.4M510.3 395.5L531.7 393.3M510.3 395.5L508.4 415.3M531.7 393.3L558.8 402.6M531.7 393.3L536.1 406.5L539.8 423.6M558.8 402.6L564.4 401.1L568.5 400.2L576.3 397.8M558.8 402.6L558.7 414.9M576.3 397.8L586.3 400.6L592.7 400.1L601.5 402.5M576.3 397.8L575.6 409.5L578.3 423.7M601.5 402.5L632.6 402.8M601.5 402.5L601.0 414.8L599.8 425.2M632.6 402.8L640.9 399.0L645.9 394.0M632.6 402.8L623.7 414.2M645.9 394.0L657.6 396.5L670.9 395.2M645.9 394.0L644.8 409.0L644.0 424.4M670.9 395.2L678.3 398.4L687.9 396.5L696.1 399.5M670.9 395.2L672.4 405.7L678.4 419.0M696.1 399.5L706.8 398.2L719.6 401.7M696.1 399.5L695.5 404.3L693.6 411.8L691.4 416.8M719.6 401.7L727.2 401.2L736.0 395.4L744.5 395.3M744.5 395.3L756.7 398.5L764.0 402.6M744.5 395.3L742.2 423.6M764.0 402.6L773.9 401.2L781.9 401.2L793.6 400.6M764.0 402.6L760.9 406.7L760.4 414.5M793.6 400.6L799.2 399.4L803.3 393.8L811.0 392.7M793.6 400.6L789.4 407.2L791.4 415.8L787.3 424.9M811.0 392.7L824.6 397.6L837.1 399.2M811.0 392.7L809.8 403.3L811.5 413.7L813.5 422.1M-21.7 423.5L9.9 416.1M9.9 416.1L34.7 423.3M9.9 416.1L0.0 443.2M34.7 423.3L51.9 415.2M34.7 423.3L32.4 427.3L27.4 433.5L26.8 441.1M51.9 415.2L59.8 417.6L67.5 418.4L75.6 419.1M51.9 415.2L50.8 424.8L52.2 430.0L50.8 438.2M75.6 419.1L88.1 424.2L96.4 424.7M96.4 424.7L124.2 416.2M96.4 424.7L100.3 431.2L98.7 434.8L102.0 437.3M124.2 416.2L134.0 417.3L139.1 418.1M124.2 416.2L120.7 425.8L123.1 434.7L119.9 444.8M139.1 418.1L154.3 418.1L170.6 414.7M139.1 418.1L144.9 426.2L148.2 437.9M170.6 414.7L180.1 413.4L186.5 416.1M170.6 414.7L165.2 425.6L166.8 435.9L161.4 444.7M186.5 416.1L215.0 417.2M186.5 416.1L187.3 428.9L186.8 442.4M215.0 417.2L226.5 415.1L236.0 417.7M215.0 417.2L216.4 428.7L215.9 436.9L215.6 448.1M236.0 417.7L247.0 420.0L256.6 419.6M236.0 417.7L240.8 437.9M256.6 419.6L269.3 423.8L277.6 425.1M277.6 425.1L285.7 425.7L293.1 421.7L303.2 420.4M277.6 425.1L277.4 432.2L281.5 442.8M303.2 420.4L325.0 417.5M303.2 420.4L300.9 425.0L302.8 431.4L302.9 439.2M325.0 417.5L336.0 416.0L346.9 416.7M325.0 417.5L327.6 439.1M346.9 416.7L360.5 422.5L372.9 424.8M346.9 416.7L350.9 445.8M372.9 424.8L394.2 414.8M372.9 424.8L374.5 431.9L377.6 433.4L379.6 439.8M394.2 414.8L406.3 419.2L415.0 420.9M394.2 414.8L393.7 423.9L392.0 432.1L393.7 442.1M415.0 420.9L430.8 420.9L443.7 425.5M415.0 420.9L413.9 424.5L415.6 431.8L416.0 438.8M443.7 425.5L442.4 433.0L439.3 438.7L440.5 446.4M463.8 425.4L472.2 423.3L479.5 425.8L484.7 425.4M463.8 425.4L463.3 440.0M484.7 425.4L493.6 423.7L502.8 418.8L508.4 415.3M484.7 425.4L495.0 447.4M508.4 415.3L539.8 423.6M508.4 415.3L509.8 428.4L513.7 445.1M539.8 423.6L544.4 421.5L553.6 417.5L558.7 414.9M539.8 423.6L539.9 433.1L535.6 442.9M558.7 414.9L568.2 419.9L578.3 423.7M558.7 414.9L555.6 440.3M578.3 423.7L599.8 425.2M578.3 423.7L584.9 437.5L586.8 447.7M599.8 425.2L623.7 414.2M599.8 425.2L609.7 439.1M623.7 414.2L629.1 418.7L639.1 422.7L644.0 424.4M623.7 414.2L624.7 427.8L630.1 437.1M644.0 424.4L653.0 421.1L666.1 421.6L678.4 419.0M644.0 424.4L642.5 430.3L644.5 438.7L646.8 446.9M678.4 419.0L682.7 418.4L691.4 416.8M678.4 419.0L670.8 441.3M691.4 416.8L699.8 417.1L714.6 423.5L724.1 423.1M691.4 416.8L689.1 429.3L691.5 439.5M724.1 423.1L742.2 423.6M724.1 423.1L724.7 436.2L723.0 448.2M742.2 423.6L745.3 430.1L744.2 438.1L747.7 447.7M760.4 414.5L772.5 421.1L787.3 424.9M760.4 414.5L762.9 427.1L761.4 442.1M787.3 424.9L800.6 422.2L813.5 422.1M787.3 424.9L786.0 431.6L784.8 441.0L785.1 445.3M813.5 422.1L822.0 420.6L832.1 421.7M813.5 422.1L813.6 433.3L813.9 443.9M832.1 421.7L832.7 440.3M-21.2 442.7L0.0 443.2M-21.2 442.7L-13.2 461.5M0.0 443.2L11.2 442.0L17.8 442.5L26.8 441.1M0.0 443.2L2.2 451.1L-1.0 454.5L1.3 461.6M26.8 441.1L28.2 448.2L25.7 456.9L25.5 465.1M50.8 438.2L79.1 443.8M50.8 438.2L48.9 451.7L46.9 468.4M102.0 437.3L119.9 444.8M102.0 437.3L99.6 446.6L98.8 456.7L96.2 463.9M119.9 444.8L131.8 444.2L141.1 439.0L148.2 437.9M119.9 444.8L122.6 450.3L121.4 453.0L121.7 460.9M148.2 437.9L153.9 442.8L161.4 444.7M148.2 437.9L141.0 467.2M161.4 444.7L164.4 451.6L163.6 460.0L163.9 466.3M186.8 442.4L203.0 447.5L215.6 448.1M186.8 442.4L186.2 455.9L190.0 466.7M215.6 448.1L240.8 437.9M240.8 437.9L238.9 467.6M258.9 438.0L269.4 442.0L281.5 442.8M258.9 438.0L259.0 460.3M281.5 442.8L302.9 439.2M281.5 442.8L284.2 453.6L287.7 465.4M302.9 439.2L312.7 437.7L320.9 441.1L327.6 439.1M302.9 439.2L302.4 448.8L304.8 455.7L306.5 461.4M327.6 439.1L334.8 440.8L344.9 441.9L350.9 445.8M327.6 439.1L327.6 450.2L330.9 465.5M350.9 445.8L361.1 442.3L368.0 442.4L379.6 439.8M379.6 439.8L385.5 442.7L393.7 442.1M379.6 439.8L377.5 448.7L373.6 461.9M393.7 442.1L407.3 439.9L416.0 438.8M416.0 438.8L440.5 446.4M416.0 438.8L415.8 454.5L417.4 470.8M440.5 446.4L441.7 452.0L445.4 454.4L448.9 461.8M463.3 440.0L495.0 447.4M463.3 440.0L470.8 466.8M495.0 447.4L506.8 446.1L513.7 445.1M513.7 445.1L523.2 445.7L526.3 445.8L535.6 442.9M513.7 445.1L512.1 449.1L515.6 453.9L514.7 460.1M535.6 442.9L555.6 440.3M535.6 442.9L535.0 451.2L539.9 452.8L540.0 461.3M555.6 440.3L586.8 447.7M555.6 440.3L559.3 452.7L559.3 463.7M586.8 447.7L609.7 439.1M586.8 447.7L584.7 453.6L584.5 463.7M609.7 439.1L630.1 437.1M609.7 439.1L606.9 444.7L602.3 454.8L599.0 461.8M630.1 437.1L638.9 439.6L646.8 446.9M630.1 437.1L631.7 452.8L632.8 471.7M646.8 446.9L648.5 456.5L649.3 468.2M670.8 441.3L681.4 442.3L691.5 439.5M670.8 441.3L675.2 460.7M691.5 439.5L723.0 448.2M691.5 439.5L694.5 446.4L698.4 457.6L699.9 465.2M723.0 448.2L736.5 450.1L747.7 447.7M723.0 448.2L718.6 455.8L717.0 461.5L716.8 468.3M747.7 447.7L747.9 457.8L747.1 463.6L746.6 471.2M761.4 442.1L770.2 441.5L777.8 445.2L785.1 445.3M761.4 442.1L764.6 461.9M785.1 445.3L797.8 443.0L813.9 443.9M813.9 443.9L832.7 440.3M832.7 440.3L831.8 447.7L834.4 454.8L832.1 462.7M-13.2 461.5L-6.7 459.4L1.3 461.6M-13.2 461.5L-22.9 486.6M1.3 461.6L9.9 462.1L16.0 465.1L25.5 465.1M1.3 461.6L7.3 494.7M25.5 465.1L34.2 467.5L46.9 468.4M25.5 465.1L23.8 486.8M46.9 468.4L51.0 480.9L51.4 494.1M72.3 469.2L78.6 490.1M96.2 463.9L121.7 460.9M96.2 463.9L96.3 472.9L98.5 485.6M121.7 460.9L131.8 461.7L141.0 467.2M121.7 460.9L118.7 470.8L115.9 477.2L116.6 485.9M141.0 467.2L154.0 464.3L163.9 466.3M141.0 467.2L150.0 486.1M163.9 466.3L172.4 466.3L182.7 466.2L190.0 466.7M163.9 466.3L161.3 478.8L162.3 490.4M190.0 466.7L207.9 464.7M190.0 466.7L190.7 488.8M207.9 464.7L224.0 468.5L238.9 467.6M207.9 464.7L210.0 483.3M238.9 467.6L259.0 460.3M238.9 467.6L237.5 473.5L238.0 485.5L237.0 490.8M287.7 465.4L296.3 463.7L299.9 461.2L306.5 461.4M287.7 465.4L280.4 484.7M306.5 461.4L316.3 465.4L330.9 465.5M306.5 461.4L306.1 477.3L310.5 490.0M330.9 465.5L341.4 466.1L356.8 468.2M330.9 465.5L330.7 474.0L329.6 486.6M356.8 468.2L358.3 476.9L355.9 484.5L355.8 489.6M373.6 461.9L382.7 465.8L389.9 467.4L401.2 467.5M373.6 461.9L379.2 487.5M401.2 467.5L401.2 476.0L398.5 480.5L397.9 486.2M417.4 470.8L433.2 465.4L448.9 461.8M417.4 470.8L419.1 474.6L418.0 482.3L417.1 485.8M448.9 461.8L470.8 466.8M448.9 461.8L444.7 468.9L443.0 478.2L437.4 487.7M470.8 466.8L474.1 466.2L480.1 460.9L485.7 460.8M470.8 466.8L468.2 483.3M485.7 460.8L514.7 460.1M485.7 460.8L489.3 488.5M514.7 460.1L540.0 461.3M514.7 460.1L512.6 468.3L510.1 473.8L510.1 484.1M540.0 461.3L545.7 462.5L553.4 460.9L559.3 463.7M540.0 461.3L534.9 476.0L530.3 486.9M559.3 463.7L563.4 480.8L562.6 493.6M584.5 463.7L589.3 460.5L599.0 461.8M584.5 463.7L582.6 470.5L580.3 476.0L581.1 483.2M599.0 461.8L610.6 462.7L620.4 467.0L632.8 471.7M632.8 471.7L628.7 482.5L623.2 494.2M649.3 468.2L664.5 465.3L675.2 460.7M649.3 468.2L651.2 476.6L652.1 482.6L653.1 486.8M675.2 460.7L685.5 461.5L699.9 465.2M675.2 460.7L671.2 469.6L667.9 482.1L667.3 489.2M699.9 465.2L706.3 468.7L716.8 468.3M699.9 465.2L697.7 476.4L697.3 484.7L694.1 492.1M716.8 468.3L729.2 467.1L737.8 468.1L746.6 471.2M746.6 471.2L756.7 468.6L764.6 461.9M746.6 471.2L743.4 478.7L740.4 483.8L737.5 487.8M764.6 461.9L772.4 461.4L782.6 464.3L791.5 462.9M764.6 461.9L764.0 471.2L763.0 477.3L762.1 486.2M791.5 462.9L799.5 463.6L804.5 466.5L810.3 469.8M791.5 462.9L788.6 477.0L789.6 489.9M810.3 469.8L806.4 474.7L808.2 483.5L805.0 487.1M832.1 462.7L831.9 493.4M-22.9 486.6L7.3 494.7M7.3 494.7L23.8 486.8M7.3 494.7L1.1 515.6M23.8 486.8L34.0 486.9L39.8 492.8L51.4 494.1M23.8 486.8L24.0 498.2L26.4 506.4L25.3 516.7M51.4 494.1L66.0 491.8L78.6 490.1M51.4 494.1L48.7 501.5L50.3 507.7L49.9 512.2M78.6 490.1L86.8 489.5L91.2 486.3L98.5 485.6M78.6 490.1L73.5 508.2M98.5 485.6L104.0 487.9L110.3 485.4L116.6 485.9M98.5 485.6L101.3 507.0M116.6 485.9L131.1 484.6L150.0 486.1M116.6 485.9L121.4 514.6M150.0 486.1L152.7 488.8L160.1 490.8L162.3 490.4M150.0 486.1L150.2 495.6L146.6 507.7L146.3 515.7M162.3 490.4L174.7 488.4L190.7 488.8M162.3 490.4L164.1 493.7L166.7 499.4L166.9 507.1M190.7 488.8L195.0 486.4L204.8 487.1L210.0 483.3M190.7 488.8L187.9 499.1L187.2 508.3L184.6 517.1M210.0 483.3L211.0 494.8L210.2 500.9L210.4 510.6M237.0 490.8L245.0 491.1L251.6 486.8L256.9 485.4M256.9 485.4L267.4 485.6L280.4 484.7M256.9 485.4L256.2 492.4L253.3 498.5L253.5 507.5M280.4 484.7L295.9 489.5L310.5 490.0M280.4 484.7L286.4 515.1M310.5 490.0L317.7 490.3L329.6 486.6M310.5 490.0L310.9 508.1M329.6 486.6L355.8 489.6M329.6 486.6L327.0 496.1L325.4 509.9M355.8 489.6L369.0 488.9L379.2 487.5M355.8 489.6L352.9 495.5L350.2 499.6L347.4 507.7M379.2 487.5L387.0 487.3L391.1 485.3L397.9 486.2M379.2 487.5L375.2 502.0L374.2 516.4M397.9 486.2L408.6 485.6L417.1 485.8M397.9 486.2L399.9 517.3M417.1 485.8L420.8 495.3L420.4 502.1L422.0 507.6M437.4 487.7L450.1 484.9L459.7 485.6L468.2 483.3M468.2 483.3L466.0 496.6L464.5 512.9M489.3 488.5L510.1 484.1M489.3 488.5L491.4 499.0L494.0 510.7M510.1 484.1L530.3 486.9M510.1 484.1L506.1 517.8M530.3 486.9L543.2 487.0L549.8 492.8L562.6 493.6M562.6 493.6L559.7 500.7L559.6 506.4M581.1 483.2L587.1 486.6L592.0 486.3L600.6 487.9M581.1 483.2L578.7 498.7L580.9 510.0M600.6 487.9L606.7 487.6L616.5 489.7L623.2 494.2M623.2 494.2L634.2 490.6L641.3 487.1L653.1 486.8M623.2 494.2L627.4 508.3L633.0 517.6M653.1 486.8L667.3 489.2M653.1 486.8L647.1 501.4L644.3 512.4M667.3 489.2L694.1 492.1M667.3 489.2L667.2 517.8M694.1 492.1L709.1 491.5L719.7 491.8M694.1 492.1L700.7 508.5M719.7 491.8L737.5 487.8M719.7 491.8L719.9 497.1L723.1 502.0L723.9 509.2M737.5 487.8L762.1 486.2M737.5 487.8L740.3 517.8M762.1 486.2L789.6 489.9M762.1 486.2L761.2 494.8L761.3 506.3M789.6 489.9L796.1 489.1L805.0 487.1M789.6 489.9L787.9 497.1L789.3 502.8L791.4 511.0M805.0 487.1L816.4 490.9L824.6 493.3L831.9 493.4M805.0 487.1L807.3 512.9M831.9 493.4L835.1 502.6L836.5 508.2M-11.6 508.2L-9.4 511.9L-0.7 515.3L1.1 515.6M-11.6 508.2L-18.3 538.1M1.1 515.6L15.7 516.5L25.3 516.7M1.1 515.6L0.9 535.4M25.3 516.7L34.4 512.9L43.7 512.4L49.9 512.2M25.3 516.7L25.9 522.4L30.5 528.7L29.6 538.3M49.9 512.2L73.5 508.2M49.9 512.2L55.3 522.8L55.8 534.0M73.5 508.2L88.2 508.3L101.3 507.0M73.5 508.2L79.7 530.6M101.3 507.0L109.8 508.8L116.6 512.1L121.4 514.6M101.3 507.0L99.7 521.5L98.1 533.9M121.4 514.6L135.9 513.3L146.3 515.7M121.4 514.6L120.4 524.5L121.5 531.4M146.3 515.7L140.7 533.2M166.9 507.1L171.9 512.7L181.1 512.9L184.6 517.1M166.9 507.1L163.1 514.9L164.2 522.5L161.9 532.8M184.6 517.1L210.4 510.6M184.6 517.1L187.5 529.1L189.7 536.6M210.4 510.6L240.1 516.3M210.4 510.6L213.8 536.6M240.1 516.3L253.5 507.5M240.1 516.3L237.3 527.4L233.1 534.5M253.5 507.5L286.4 515.1M253.5 507.5L255.3 516.7L258.5 529.0L261.3 539.8M286.4 515.1L299.1 512.6L310.9 508.1M286.4 515.1L287.4 524.2L287.4 531.6L285.7 540.0M310.9 508.1L325.4 509.9M310.9 508.1L310.7 519.0L305.8 534.4M325.4 509.9L334.8 509.2L337.9 506.9L347.4 507.7M325.4 509.9L326.0 540.5M347.4 507.7L360.5 511.9L374.2 516.4M347.4 507.7L346.8 518.1L349.4 528.7L353.0 537.6M399.9 517.3L411.3 510.2L422.0 507.6M399.9 517.3L400.0 522.6L398.9 534.3L398.6 540.4M422.0 507.6L438.3 513.1M438.3 513.1L447.4 513.8L455.1 514.9L464.5 512.9M438.3 513.1L439.4 520.6L440.7 525.8L440.9 535.4M464.5 512.9L476.2 511.5L483.4 511.4L494.0 510.7M464.5 512.9L462.3 522.2L463.1 530.5M494.0 510.7L506.1 517.8M494.0 510.7L489.2 535.8M506.1 517.8L514.4 513.4L521.0 509.3L531.7 506.5M506.1 517.8L506.6 525.6L505.2 531.6L507.6 540.2M531.7 506.5L559.6 506.4M531.7 506.5L533.5 513.2L536.7 521.9L540.3 532.4M559.6 506.4L580.9 510.0M559.6 506.4L559.0 517.4L562.6 530.9M580.9 510.0L599.7 513.1M580.9 510.0L585.1 531.9M599.7 513.1L608.9 515.9L621.1 514.5L633.0 517.6M633.0 517.6L637.4 516.3L644.3 512.4M633.0 517.6L631.6 524.5L633.2 525.1L631.2 531.4M644.3 512.4L648.4 520.2L652.4 532.2L654.9 541.0M667.2 517.8L677.0 515.1L691.5 511.7L700.7 508.5M700.7 508.5L713.9 509.0L723.9 509.2M700.7 508.5L693.8 540.3M723.9 509.2L730.0 514.0L734.6 515.2L740.3 517.8M723.9 509.2L714.0 539.7M740.3 517.8L752.6 511.6L761.3 506.3M740.3 517.8L737.6 533.0M761.3 506.3L760.8 516.7L764.2 531.6M791.4 511.0L797.0 512.9L807.3 512.9M791.4 511.0L788.1 519.5L784.9 521.9L784.6 530.7M807.3 512.9L810.6 520.8L815.7 531.5M-18.3 538.1L0.9 535.4M-18.3 538.1L-22.8 546.8L-22.9 556.7M0.9 535.4L4.8 545.6L4.5 550.4L7.8 559.4M29.6 538.3L37.0 538.5L46.4 537.6L55.8 534.0M29.6 538.3L30.1 563.9M55.8 534.0L79.7 530.6M55.8 534.0L54.8 542.1L53.3 547.7L53.3 553.0M79.7 530.6L90.9 530.3L98.1 533.9M79.7 530.6L77.7 541.4L71.1 550.2L70.5 559.0M98.1 533.9L121.5 531.4M98.1 533.9L94.1 546.4L94.4 561.9M121.5 531.4L140.7 533.2M121.5 531.4L119.2 542.8L122.2 548.4L119.5 560.2M140.7 533.2L147.1 534.6L155.8 533.1L161.9 532.8M140.7 533.2L138.9 541.4L139.1 544.4L138.1 553.6M161.9 532.8L189.7 536.6M161.9 532.8L172.2 552.7M189.7 536.6L213.8 536.6M189.7 536.6L190.7 545.3L188.9 552.5L185.9 559.4M213.8 536.6L233.1 534.5M213.8 536.6L213.1 542.5L213.1 549.7L214.5 554.7M233.1 534.5L261.3 539.8M233.1 534.5L240.4 558.0M261.3 539.8L271.8 539.1L285.7 540.0M261.3 539.8L256.9 558.9M285.7 540.0L305.8 534.4M285.7 540.0L280.0 559.9M305.8 534.4L326.0 540.5M326.0 540.5L353.0 537.6M326.0 540.5L327.6 547.2L329.9 557.0L330.1 563.4M353.0 537.6L360.1 537.4L368.0 537.4M353.0 537.6L353.4 547.1L357.0 552.5M368.0 537.4L380.7 539.2L387.1 537.9L398.6 540.4M368.0 537.4L368.2 549.1L369.4 562.5M398.6 540.4L408.5 542.2L420.4 541.0M398.6 540.4L395.5 549.6L391.6 553.9L391.8 562.1M420.4 541.0L440.9 535.4M420.4 541.0L423.5 552.5M440.9 535.4L447.8 535.9L455.0 532.6L463.1 530.5M440.9 535.4L440.8 544.6L443.7 548.2L444.8 557.9M463.1 530.5L464.1 539.1L467.1 553.2L471.5 563.6M489.2 535.8L507.6 540.2M489.2 535.8L488.7 544.7L485.9 554.1M507.6 540.2L520.2 537.4L528.4 536.2L540.3 532.4M507.6 540.2L506.5 548.8L506.2 559.4M540.3 532.4L549.3 529.6L562.6 530.9M540.3 532.4L532.6 542.7L529.9 552.6M562.6 530.9L570.9 531.1L578.7 529.7L585.1 531.9M585.1 531.9L595.8 530.8L609.6 531.3M585.1 531.9L582.6 543.7L580.5 553.4M609.6 531.3L606.3 543.4L601.1 553.3M631.2 531.4L623.4 558.3M654.9 541.0L656.5 549.5L653.8 554.6M668.9 540.7L681.9 540.3L693.8 540.3M668.9 540.7L670.7 550.0L674.2 555.1M693.8 540.3L701.0 540.6L706.6 539.1L714.0 539.7M693.8 540.3L692.7 548.5L691.4 554.1M714.0 539.7L737.6 533.0M714.0 539.7L716.4 563.8M737.6 533.0L747.1 531.1L753.1 530.5L764.2 531.6M737.6 533.0L745.2 555.1M764.2 531.6L773.4 528.7L784.6 530.7M764.2 531.6L763.4 539.7L761.7 550.0L760.2 556.7M784.6 530.7L815.7 531.5M784.6 530.7L788.0 537.8L790.4 550.7L789.6 557.0M815.7 531.5L823.4 531.3L828.1 534.2M815.7 531.5L812.3 542.2L808.5 552.4L807.8 561.0M-22.9 556.7L-22.0 586.3M7.8 559.4L12.8 560.8L22.4 561.5L30.1 563.9M30.1 563.9L39.9 560.2L44.7 556.6L53.3 553.0M30.1 563.9L30.2 568.6L30.6 571.8L31.2 578.9M53.3 553.0L57.0 556.4L66.6 555.1L70.5 559.0M53.3 553.0L55.9 579.7M70.5 559.0L94.4 561.9M70.5 559.0L78.6 578.5M94.4 561.9L119.5 560.2M94.4 561.9L98.1 570.9L101.4 575.2L102.6 584.6M119.5 560.2L138.1 553.6M138.1 553.6L157.4 553.7L172.2 552.7M138.1 553.6L140.3 560.4L140.5 569.5L143.0 575.7M172.2 552.7L185.9 559.4M185.9 559.4L198.3 555.3L214.5 554.7M214.5 554.7L240.4 558.0M214.5 554.7L215.7 563.9L214.5 569.5L216.4 578.3M240.4 558.0L256.9 558.9M240.4 558.0L236.2 581.6M256.9 558.9L266.1 561.1L280.0 559.9M256.9 558.9L256.6 585.2M280.0 559.9L290.2 557.7L300.9 556.1M280.0 559.9L281.5 566.8L285.0 577.7M300.9 556.1L311.9 556.5L320.4 563.0L330.1 563.4M300.9 556.1L302.7 571.6L305.0 583.8M330.1 563.4L338.1 560.1L350.3 556.6L357.0 552.5M330.1 563.4L326.0 585.6M357.0 552.5L361.9 557.5L369.4 562.5M357.0 552.5L356.3 576.2M369.4 562.5L376.1 564.1L383.6 562.6L391.8 562.1M369.4 562.5L371.9 568.2L371.9 577.5M391.8 562.1L407.5 556.3L423.5 552.5M423.5 552.5L431.0 556.1L436.5 554.9L444.8 557.9M423.5 552.5L422.7 580.1M471.5 563.6L481.0 559.8L485.9 554.1M471.5 563.6L468.1 576.4L462.7 585.6M485.9 554.1L506.2 559.4M506.2 559.4L514.1 555.0L523.9 554.9L529.9 552.6M529.9 552.6L539.2 552.6L548.3 557.6L559.8 556.8M529.9 552.6L533.8 576.4M559.8 556.8L580.5 553.4M559.8 556.8L558.1 565.4L557.5 576.0L555.2 586.2M580.5 553.4L601.1 553.3M580.5 553.4L583.4 564.9L581.9 575.2M601.1 553.3L610.3 554.7L614.6 555.8L623.4 558.3M601.1 553.3L602.4 568.7L599.3 584.5M623.4 558.3L638.9 557.1L653.8 554.6M623.4 558.3L627.0 569.7L625.8 577.2M653.8 554.6L659.2 553.3L666.4 552.5L674.2 555.1M653.8 554.6L653.7 571.3L654.8 585.8M674.2 555.1L683.9 554.1L691.4 554.1M674.2 555.1L672.5 564.6L672.4 577.7M691.4 554.1L703.0 556.8L716.4 563.8M716.4 563.8L727.4 563.1L736.9 560.4L745.2 555.1M716.4 563.8L718.6 570.2L722.7 574.4L723.1 577.6M745.2 555.1L750.7 556.2L760.2 556.7M745.2 555.1L746.9 563.2L746.7 577.0L748.0 584.4M760.2 556.7L769.2 555.1L778.9 556.6L789.6 557.0M760.2 556.7L761.6 568.4L760.7 580.8M789.6 557.0L799.1 556.9L807.8 561.0M789.6 557.0L790.4 579.2M807.8 561.0L816.7 563.2L822.3 562.0L829.1 563.2M807.8 561.0L810.3 566.7L813.4 571.9L812.6 577.0M829.1 563.2L831.3 572.7L828.0 578.8L828.4 584.5M-22.0 586.3L-9.3 582.3L5.8 581.8M-22.0 586.3L-21.2 599.7M5.8 581.8L12.6 580.2L24.1 581.7L31.2 578.9M5.8 581.8L6.2 590.1L1.7 596.9L2.7 607.9M31.2 578.9L55.9 579.7M31.2 578.9L25.0 608.1M55.9 579.7L63.3 578.0L69.0 579.7L78.6 578.5M78.6 578.5L85.8 580.5L94.7 584.2L102.6 584.6M78.6 578.5L77.7 585.0L74.6 591.3L75.6 599.2M102.6 584.6L117.6 583.7M102.6 584.6L99.2 596.1L92.2 604.1M117.6 583.7L128.5 580.3L143.0 575.7M117.6 583.7L119.1 590.8L122.5 600.8M143.0 575.7L152.3 573.0L166.6 575.2M143.0 575.7L142.0 586.3L144.0 589.8L143.6 600.5M166.6 575.2L175.6 582.0L186.4 584.8M166.6 575.2L167.9 586.1L167.9 594.7L171.0 601.5M186.4 584.8L195.7 580.5L204.8 582.0L216.4 578.3M186.4 584.8L189.7 589.8L192.9 597.5L193.7 605.7M216.4 578.3L221.8 578.8L230.0 578.7L236.2 581.6M216.4 578.3L212.9 601.5M236.2 581.6L241.5 584.8L249.5 583.7L256.6 585.2M236.2 581.6L238.9 585.6L237.9 596.7L237.1 600.8M256.6 585.2L285.0 577.7M256.6 585.2L255.2 593.6L258.5 597.8L258.5 605.5M285.0 577.7L293.0 582.0L305.0 583.8M285.0 577.7L285.0 587.2L283.7 597.6L280.9 604.3M305.0 583.8L312.8 586.7L318.8 585.1L326.0 585.6M305.0 583.8L304.3 591.1L306.6 595.8L309.5 602.4M326.0 585.6L337.5 584.2L344.7 578.5L356.3 576.2M326.0 585.6L325.5 599.3M356.3 576.2L365.0 579.2L371.9 577.5M356.3 576.2L350.3 587.2L351.2 598.1L345.6 606.7M371.9 577.5L387.1 577.3L397.5 577.2M371.9 577.5L378.8 602.1M397.5 577.2L408.8 578.9L422.7 580.1M397.5 577.2L392.6 600.6M422.7 580.1L431.4 584.8L442.5 584.6M422.7 580.1L421.6 592.0L421.6 599.1M442.5 584.6L462.7 585.6M442.5 584.6L439.7 607.9M462.7 585.6L478.6 585.5L489.8 581.5M462.7 585.6L469.1 609.7M489.8 581.5L496.2 583.3L507.2 582.4M489.8 581.5L492.1 595.4L490.4 609.5M507.2 582.4L533.8 576.4M507.2 582.4L513.7 604.7M533.8 576.4L555.2 586.2M555.2 586.2L553.3 602.2M581.9 575.2L591.3 579.4L599.3 584.5M599.3 584.5L625.8 577.2M599.3 584.5L607.9 600.9M625.8 577.2L641.2 584.0L654.8 585.8M625.8 577.2L629.1 588.6L631.2 603.2M654.8 585.8L649.6 591.4L650.4 600.7L645.0 606.0M672.4 577.7L691.5 585.9M672.4 577.7L670.4 586.5L670.8 592.8L671.9 603.8M691.5 585.9L708.3 579.8L723.1 577.6M691.5 585.9L693.1 591.3L695.4 599.6L695.0 607.6M723.1 577.6L748.0 584.4M723.1 577.6L719.1 601.2M748.0 584.4L752.6 581.0L760.7 580.8M748.0 584.4L744.1 588.6L741.7 594.8L740.0 601.8M760.7 580.8L769.1 578.5L780.7 580.1L790.4 579.2M760.7 580.8L763.1 589.7L760.2 595.8L761.3 602.5M790.4 579.2L812.6 577.0M812.6 577.0L817.2 577.5L824.5 584.4L828.4 584.5M812.6 577.0L813.2 586.9L812.1 594.6L811.5 600.0M828.4 584.5L830.1 594.3L832.0 600.6M-21.2 599.7L-15.2 627.8M2.7 607.9L9.5 608.0L19.0 608.9L25.0 608.1M2.7 607.9L5.3 626.1M25.0 608.1L33.3 608.9L42.6 608.6L49.7 608.9M25.0 608.1L31.3 623.2M49.7 608.9L61.4 602.5L75.6 599.2M49.7 608.9L54.2 622.6M75.6 599.2L92.2 604.1M75.6 599.2L75.7 607.4L74.3 614.9L74.9 622.8M92.2 604.1L122.5 600.8M92.2 604.1L95.9 617.0L96.6 626.2M122.5 600.8L131.2 601.1L134.5 600.2L143.6 600.5M122.5 600.8L122.6 606.4L121.0 613.0L122.1 622.7M143.6 600.5L152.5 600.2L164.1 603.3L171.0 601.5M143.6 600.5L148.2 614.3L149.0 624.3M171.0 601.5L184.3 601.9L193.7 605.7M171.0 601.5L169.3 608.0L162.8 617.1L161.3 621.3M193.7 605.7L200.9 601.7L212.9 601.5M193.7 605.7L187.1 626.7M212.9 601.5L237.1 600.8M212.9 601.5L218.6 630.7M237.1 600.8L258.5 605.5M258.5 605.5L266.7 603.4L275.3 604.0L280.9 604.3M258.5 605.5L259.9 611.3L258.7 618.3L260.2 621.2M280.9 604.3L294.6 604.5L309.5 602.4M280.9 604.3L282.8 612.4L283.7 623.7L284.1 629.9M309.5 602.4L313.3 602.8L320.5 599.4L325.5 599.3M325.5 599.3L330.2 602.6L340.4 602.0L345.6 606.7M325.5 599.3L326.2 612.9L325.9 628.2M345.6 606.7L355.1 606.0L367.8 605.7L378.8 602.1M345.6 606.7L348.9 625.3M378.8 602.1L384.2 602.9L392.6 600.6M378.8 602.1L378.6 625.1M392.6 600.6L421.6 599.1M392.6 600.6L393.5 609.2L396.9 618.4L398.2 626.3M421.6 599.1L427.4 601.8L433.0 602.8L439.7 607.9M421.6 599.1L423.0 611.7L421.9 625.9M439.7 607.9L452.7 610.0L469.1 609.7M439.7 607.9L444.2 614.9L445.2 616.7L446.0 623.0M469.1 609.7L490.4 609.5M469.1 609.7L472.6 622.2L471.7 631.8M490.4 609.5L496.5 610.2L506.6 607.1L513.7 604.7M490.4 609.5L492.1 615.1L489.4 620.9L488.4 622.9M513.7 604.7L537.6 608.9M513.7 604.7L512.3 614.2L515.2 625.0M537.6 608.9L540.5 608.2L550.4 606.6L553.3 602.2M553.3 602.2L564.9 602.0L580.4 599.8M553.3 602.2L556.8 611.4L558.1 618.7L557.7 629.7M580.4 599.8L607.9 600.9M580.4 599.8L583.9 612.4L586.8 624.6M607.9 600.9L617.3 602.5L621.9 601.8L631.2 603.2M607.9 600.9L608.2 607.6L609.2 618.2L607.6 623.1M631.2 603.2L637.1 607.1L645.0 606.0M631.2 603.2L628.5 615.1L627.0 626.0M645.0 606.0L656.1 607.2L662.4 602.8L671.9 603.8M645.0 606.0L647.8 632.4M671.9 603.8L695.0 607.6M671.9 603.8L673.4 623.1M695.0 607.6L702.1 604.6L709.4 601.4L719.1 601.2M695.0 607.6L695.3 621.1L699.6 630.1M719.1 601.2L740.0 601.8M719.1 601.2L719.9 613.8L716.3 622.2M740.0 601.8L747.0 600.1L753.8 601.4L761.3 602.5M740.0 601.8L736.6 624.2M761.3 602.5L774.4 604.9L784.1 607.1M761.3 602.5L759.6 611.9L761.8 625.8M784.1 607.1L792.5 603.0L803.6 603.6L811.5 600.0M784.1 607.1L792.1 622.5M811.5 600.0L819.7 601.1L823.4 599.2L832.0 600.6M811.5 600.0L810.7 607.4L808.7 617.7L808.1 624.7M832.0 600.6L834.7 621.1M-15.2 627.8L5.3 626.1M-15.2 627.8L-16.8 631.2L-19.2 639.5L-21.4 644.6M5.3 626.1L31.3 623.2M31.3 623.2L45.0 624.1L54.2 622.6M31.3 623.2L29.9 639.2L24.7 653.0M54.2 622.6L74.9 622.8M54.2 622.6L53.1 651.3M74.9 622.8L96.6 626.2M74.9 622.8L72.3 637.8L69.7 648.6M96.6 626.2L107.1 627.2L113.1 626.2L122.1 622.7M96.6 626.2L95.6 633.3L95.9 638.6L94.0 645.8M122.1 622.7L137.7 622.8L149.0 624.3M122.1 622.7L122.5 629.7L123.4 640.4L120.5 647.0M149.0 624.3L161.3 621.3M149.0 624.3L148.2 647.7M161.3 621.3L168.6 624.2L179.6 624.3L187.1 626.7M161.3 621.3L163.3 630.9L162.7 643.3L161.7 652.2M187.1 626.7L198.4 629.5L210.0 631.5L218.6 630.7M187.1 626.7L188.9 644.0M218.6 630.7L216.1 641.6L215.0 653.7M241.1 632.4L251.4 625.2L260.2 621.2M241.1 632.4L239.8 639.7L234.3 644.6L230.6 649.8M260.2 621.2L284.1 629.9M260.2 621.2L260.2 633.8L261.2 646.3M284.1 629.9L281.1 642.4L278.2 654.3M299.7 628.3L308.0 626.2L317.8 628.6L325.9 628.2M299.7 628.3L302.1 634.9L300.5 642.5L301.4 650.7M325.9 628.2L332.5 627.6L343.1 628.2L348.9 625.3M348.9 625.3L360.4 624.7L370.0 624.4L378.6 625.1M378.6 625.1L390.4 627.0L398.2 626.3M378.6 625.1L374.6 638.8L372.3 652.3M398.2 626.3L421.9 625.9M398.2 626.3L393.2 641.3L391.9 651.6M421.9 625.9L433.1 622.1L446.0 623.0M421.9 625.9L419.9 636.8L420.9 650.4M446.0 623.0L455.6 628.3L460.8 628.9L471.7 631.8M446.0 623.0L448.6 634.1L447.4 640.1L448.8 649.1M471.7 631.8L479.6 627.4L488.4 622.9M471.7 631.8L468.2 638.7L468.9 646.1L464.2 652.2M488.4 622.9L515.2 625.0M488.4 622.9L483.3 650.5M515.2 625.0L524.6 626.1L531.2 623.5L537.0 623.7M515.2 625.0L507.8 650.1M537.0 623.7L546.2 624.6L551.9 627.5L557.7 629.7M537.0 623.7L533.9 629.6L533.0 639.5L533.5 648.3M557.7 629.7L586.8 624.6M586.8 624.6L607.6 623.1M586.8 624.6L587.0 634.2L587.2 644.0L583.7 654.1M607.6 623.1L618.5 624.7L627.0 626.0M607.6 623.1L605.9 654.5M627.0 626.0L633.5 627.5L642.1 632.2L647.8 632.4M627.0 626.0L628.5 640.3L632.4 651.4M647.8 632.4L652.0 638.2L654.1 645.9M673.4 623.1L672.3 630.8L675.5 642.1L673.4 650.0M699.6 630.1L716.3 622.2M699.6 630.1L698.0 647.4M716.3 622.2L723.3 622.6L730.9 622.9L736.6 624.2M716.3 622.2L716.6 632.5L719.5 642.1L721.2 654.5M736.6 624.2L745.2 623.0L754.5 623.5L761.8 625.8M736.6 624.2L738.8 632.4L737.1 642.0L736.4 651.2M761.8 625.8L773.4 627.1L783.1 621.5L792.1 622.5M761.8 625.8L764.4 646.3M792.1 622.5L799.5 621.9L801.2 623.0L808.1 624.7M792.1 622.5L793.7 652.3M834.7 621.1L838.6 644.7M-21.4 644.6L6.4 651.3M-21.4 644.6L-23.0 660.6L-20.1 674.1M6.4 651.3L7.1 662.1L7.4 673.7M24.7 653.0L26.9 660.3L28.8 667.3M53.1 651.3L54.8 660.5L52.6 666.6L51.4 673.5M69.7 648.6L94.0 645.8M69.7 648.6L69.1 657.7L69.9 668.0L69.1 679.0M94.0 645.8L120.5 647.0M94.0 645.8L95.0 671.3M120.5 647.0L124.2 671.0M161.7 652.2L174.9 649.1L188.9 644.0M161.7 652.2L164.2 662.0L162.1 666.8L165.0 674.5M188.9 644.0L195.3 644.8L206.8 652.9L215.0 653.7M188.9 644.0L192.1 651.9L192.6 661.4L193.2 671.5M215.0 653.7L230.6 649.8M215.0 653.7L213.8 661.3L212.6 668.8L213.7 674.1M230.6 649.8L240.6 648.7L249.3 647.2L261.2 646.3M261.2 646.3L271.7 649.6L278.2 654.3M261.2 646.3L262.2 661.8L258.5 677.1M278.2 654.3L285.2 652.1L295.2 649.5L301.4 650.7M278.2 654.3L279.9 661.2L281.8 670.8L282.3 676.6M301.4 650.7L310.8 654.3L319.1 653.6L329.4 654.0M301.4 650.7L304.3 663.8L302.4 674.2M329.4 654.0L337.0 654.6L340.0 652.2L345.1 652.4M329.4 654.0L323.5 666.9L322.1 678.4M345.1 652.4L372.3 652.3M345.1 652.4L356.1 671.1M372.3 652.3L377.8 651.3L386.5 651.3L391.9 651.6M372.3 652.3L375.4 660.4L373.3 665.0L374.6 669.4M391.9 651.6L401.9 648.8L409.2 650.4L420.9 650.4M391.9 651.6L391.1 665.7L393.8 677.5M420.9 650.4L431.9 648.6L438.0 650.8L448.8 649.1M420.9 650.4L420.8 656.6L416.9 664.3L417.3 668.8M448.8 649.1L454.3 652.0L464.2 652.2M448.8 649.1L448.5 655.7L446.1 662.3L442.5 671.7M464.2 652.2L483.3 650.5M464.2 652.2L461.6 666.0L462.4 678.6M483.3 650.5L496.2 648.0L507.8 650.1M483.3 650.5L488.1 674.4M507.8 650.1L533.5 648.3M507.8 650.1L506.3 662.5L509.1 672.6M533.5 648.3L533.7 661.1L534.5 674.7M560.3 655.5L583.7 654.1M560.3 655.5L563.5 672.3M583.7 654.1L584.0 661.3L584.8 664.7L581.9 672.9M605.9 654.5L632.4 651.4M605.9 654.5L603.0 678.3M632.4 651.4L645.7 646.6L654.1 645.9M632.4 651.4L627.4 670.8M654.1 645.9L654.0 655.0L654.4 661.5L653.0 670.1M673.4 650.0L698.0 647.4M673.4 650.0L672.7 657.4L670.7 663.8L668.8 671.8M698.0 647.4L706.3 649.2L711.1 651.1L721.2 654.5M736.4 651.2L764.4 646.3M736.4 651.2L738.6 656.5L739.0 666.3L737.1 670.6M764.4 646.3L793.7 652.3M764.4 646.3L763.6 660.0L760.5 670.9M793.7 652.3L796.7 650.2L802.6 651.7L806.5 649.6M793.7 652.3L790.4 661.8L785.2 674.1M806.5 649.6L823.0 644.7L838.6 644.7M806.5 649.6L806.2 672.3M838.6 644.7L838.3 659.3L834.1 678.2M-20.1 674.1L-12.5 672.0L0.2 671.8L7.4 673.7M7.4 673.7L28.8 667.3M7.4 673.7L7.1 686.1L6.4 694.4M28.8 667.3L40.2 669.9L51.4 673.5M28.8 667.3L25.6 676.6L27.3 687.1L25.9 695.3M51.4 673.5L59.5 677.7L69.1 679.0M51.4 673.5L53.2 684.3L56.5 697.3M69.1 679.0L80.0 674.5L95.0 671.3M69.1 679.0L74.6 690.7M95.0 671.3L109.2 670.3L124.2 671.0M95.0 671.3L92.9 680.4L95.2 683.5L96.0 693.2M124.2 671.0L131.0 673.9L138.5 674.9L142.1 676.9M124.2 671.0L120.9 681.3L119.5 689.2L115.4 697.8M142.1 676.9L152.2 674.1L165.0 674.5M142.1 676.9L139.3 693.9M165.0 674.5L193.2 671.5M165.0 674.5L165.4 685.8L169.1 700.6M193.2 671.5L213.7 674.1M193.2 671.5L189.6 697.6M213.7 674.1L235.8 677.8M213.7 674.1L212.7 690.7M235.8 677.8L245.6 675.9L258.5 677.1M235.8 677.8L233.3 694.0M258.5 677.1L265.4 675.9L276.7 674.8L282.3 676.6M258.5 677.1L257.2 689.4L253.6 700.1M282.3 676.6L302.4 674.2M302.4 674.2L310.6 678.0L313.6 675.5L322.1 678.4M302.4 674.2L300.5 693.7M322.1 678.4L334.0 675.7L344.4 674.8L356.1 671.1M322.1 678.4L326.0 687.0L326.9 693.0L332.0 698.7M356.1 671.1L365.1 669.3L374.6 669.4M356.1 671.1L352.2 701.5M374.6 669.4L385.7 671.3L393.8 677.5M374.6 669.4L374.9 677.2L370.3 688.8L368.5 698.5M393.8 677.5L417.3 668.8M393.8 677.5L394.8 685.9L394.4 692.1M417.3 668.8L442.5 671.7M417.3 668.8L418.0 679.2L421.3 693.8M442.5 671.7L448.0 672.5L454.5 674.4L462.4 678.6M442.5 671.7L443.7 682.4L446.4 690.8L445.2 697.7M462.4 678.6L472.7 676.9L488.1 674.4M462.4 678.6L467.6 695.0M488.1 674.4L497.2 675.4L502.4 674.9L509.1 672.6M488.1 674.4L490.3 681.1L494.1 688.5L494.2 698.5M509.1 672.6L534.5 674.7M509.1 672.6L506.5 691.6M534.5 674.7L551.1 671.8L563.5 672.3M534.5 674.7L536.4 680.7L535.6 693.2L535.6 699.5M563.5 672.3L567.9 670.8L574.3 673.5L581.9 672.9M563.5 672.3L562.8 691.8M581.9 672.9L603.0 678.3M581.9 672.9L582.0 680.0L583.2 686.4L583.3 691.0M603.0 678.3L627.4 670.8M603.0 678.3L602.9 682.6L601.2 691.5M627.4 670.8L653.0 670.1M627.4 670.8L628.6 678.0L626.8 687.9L624.7 697.6M653.0 670.1L656.1 670.8L663.4 669.1L668.8 671.8M653.0 670.1L652.8 680.0L650.9 693.4M692.0 668.1L719.4 678.2M692.0 668.1L694.1 680.6L690.6 687.7L692.3 698.9M719.4 678.2L713.2 693.3M737.1 670.6L736.0 686.0L739.3 699.0M760.5 670.9L773.5 673.1L785.2 674.1M760.5 670.9L768.1 693.6M785.2 674.1L806.2 672.3M785.2 674.1L783.4 692.2M806.2 672.3L819.7 674.6L834.1 678.2M806.2 672.3L805.6 678.3L805.4 684.3L806.1 691.4M834.1 678.2L835.6 685.6L836.9 689.7L836.9 693.7M-19.6 698.0L-19.5 707.7L-19.6 721.9M6.4 694.4L13.5 695.8L21.6 695.2L25.9 695.3M6.4 694.4L7.8 703.1L10.0 714.2L9.5 723.7M25.9 695.3L41.8 696.5L56.5 697.3M25.9 695.3L25.9 718.7M56.5 697.3L74.6 690.7M56.5 697.3L53.8 708.6L46.4 722.1M74.6 690.7L79.6 691.9L90.8 693.3L96.0 693.2M74.6 690.7L76.7 705.6L77.0 722.7M96.0 693.2L115.4 697.8M96.0 693.2L96.8 717.0M115.4 697.8L119.6 707.6L121.9 721.3M139.3 693.9L155.8 697.5L169.1 700.6M139.3 693.9L140.0 702.4L142.3 706.2L143.0 716.0M169.1 700.6L189.6 697.6M169.1 700.6L163.1 707.4L161.8 717.0M189.6 697.6L202.2 695.8L212.7 690.7M189.6 697.6L186.0 716.0M212.7 690.7L233.3 694.0M212.7 690.7L214.2 699.7L215.5 714.3L213.8 725.0M233.3 694.0L253.6 700.1M233.3 694.0L240.5 717.0M253.6 700.1L264.7 699.6L269.7 696.0L280.0 692.3M253.6 700.1L253.6 707.4L257.6 712.8L260.9 717.2M280.0 692.3L300.5 693.7M280.0 692.3L280.4 724.5M300.5 693.7L317.9 698.6L332.0 698.7M300.5 693.7L302.3 708.7L306.6 721.2M332.0 698.7L342.1 698.1L352.2 701.5M332.0 698.7L332.4 721.8M352.2 701.5L356.9 702.7L364.1 697.5L368.5 698.5M352.2 701.5L353.7 708.6L356.6 719.1M368.5 698.5L376.3 697.1L386.5 695.1L394.4 692.1M368.5 698.5L369.8 708.4L376.0 721.6M394.4 692.1L421.3 693.8M394.4 692.1L394.7 714.6M421.3 693.8L445.2 697.7M421.3 693.8L419.3 705.4L415.2 721.9M445.2 697.7L454.3 695.4L462.4 694.7L467.6 695.0M445.2 697.7L445.2 718.0M467.6 695.0L477.7 695.5L485.7 695.1L494.2 698.5M467.6 695.0L469.8 705.2L467.6 714.1M494.2 698.5L498.8 698.6L502.7 696.1L506.5 691.6M494.2 698.5L491.9 702.3L492.9 711.3L490.7 714.6M506.5 691.6L516.0 692.8L526.5 698.5L535.6 699.5M506.5 691.6L507.1 705.6L510.3 723.5M535.6 699.5L543.2 698.5L556.2 694.6L562.8 691.8M535.6 699.5L538.9 708.4L539.8 715.9M562.8 691.8L569.7 692.7L577.5 691.4L583.3 691.0M562.8 691.8L557.5 699.5L555.4 708.7L552.4 717.7M583.3 691.0L586.6 721.1M601.2 691.5L608.6 691.9L615.0 695.2L624.7 697.6M601.2 691.5L601.6 700.5L606.6 711.3L607.8 723.1M624.7 697.6L638.4 696.7L650.9 693.4M624.7 697.6L623.9 704.2L622.9 712.5L622.3 723.1M650.9 693.4L673.2 701.9M673.2 701.9L692.3 698.9M673.2 701.9L671.3 716.7M692.3 698.9L705.1 696.8L713.2 693.3M692.3 698.9L691.3 713.0M713.2 693.3L739.3 699.0M713.2 693.3L718.9 708.8L722.0 720.9M739.3 699.0L746.4 695.4L756.5 693.4L768.1 693.6M739.3 699.0L738.9 718.4M768.1 693.6L783.4 692.2M768.1 693.6L765.9 704.3L767.9 714.8M783.4 692.2L792.7 693.7L798.0 689.9L806.1 691.4M783.4 692.2L790.7 723.2M806.1 691.4L822.1 691.6L836.9 693.7M806.1 691.4L808.3 702.0L807.8 710.1L806.6 723.1M-19.6 721.9L-10.9 723.7L-0.3 722.6L9.5 723.7M-19.6 721.9L-17.8 728.3L-20.3 738.6M9.5 723.7L25.9 718.7M9.5 723.7L10.1 731.0L9.3 741.1M25.9 718.7L46.4 722.1M25.9 718.7L24.5 733.5L25.2 744.4M46.4 722.1L57.3 723.6L67.9 723.3L77.0 722.7M46.4 722.1L46.7 729.7L50.8 741.9M77.0 722.7L96.8 717.0M77.0 722.7L75.2 731.3L74.6 739.0L71.5 745.3M96.8 717.0L109.6 716.8L121.9 721.3M96.8 717.0L98.6 726.9L102.7 735.2L102.7 745.5M121.9 721.3L143.0 716.0M121.9 721.3L121.5 739.6M143.0 716.0L152.2 717.8L161.8 717.0M143.0 716.0L142.7 724.2L142.4 730.0L140.8 737.8M161.8 717.0L175.9 717.1L186.0 716.0M161.8 717.0L163.6 726.3L166.4 737.9M186.0 716.0L197.4 722.4L213.8 725.0M186.0 716.0L191.5 729.4L193.6 744.7M213.8 725.0L214.4 734.0L214.5 747.7M240.5 717.0L248.9 714.6L255.9 719.3L260.9 717.2M240.5 717.0L240.4 731.3L235.3 745.8M260.9 717.2L280.4 724.5M260.9 717.2L264.4 733.7L264.4 747.6M280.4 724.5L306.6 721.2M280.4 724.5L284.8 731.8L284.3 742.3M306.6 721.2L314.6 722.9L325.9 720.8L332.4 721.8M306.6 721.2L303.1 730.0L303.5 740.2M332.4 721.8L342.9 721.9L348.4 717.8L356.6 719.1M332.4 721.8L330.5 732.0L326.4 737.6M356.6 719.1L376.0 721.6M356.6 719.1L356.1 726.8L352.9 736.6M376.0 721.6L394.7 714.6M376.0 721.6L378.0 732.6L375.1 743.5M394.7 714.6L399.3 716.3L408.9 718.4L415.2 721.9M415.2 721.9L445.2 718.0M415.2 721.9L416.1 746.2M445.2 718.0L467.6 714.1M445.2 718.0L438.1 736.5M467.6 714.1L477.3 716.5L490.7 714.6M467.6 714.1L468.2 743.5M490.7 714.6L499.3 716.7L503.3 718.5L510.3 723.5M490.7 714.6L494.8 747.3M510.3 723.5L527.4 721.7L539.8 715.9M510.3 723.5L511.9 730.1L514.6 739.7M539.8 715.9L545.5 718.1L552.4 717.7M539.8 715.9L533.0 737.6M552.4 717.7L586.6 721.1M552.4 717.7L553.2 743.8M586.6 721.1L585.9 725.6L580.6 729.9L580.4 736.1M607.8 723.1L622.3 723.1M607.8 723.1L607.6 729.1L602.2 741.2L600.4 747.1M622.3 723.1L623.6 746.5M653.9 716.2L661.7 715.1L671.3 716.7M653.9 716.2L647.4 727.4L645.4 740.4M671.3 716.7L678.5 713.0L685.4 715.3L691.3 713.0M671.3 716.7L677.7 744.9M691.3 713.0L703.2 713.5L711.1 720.6L722.0 720.9M691.3 713.0L694.5 726.2L698.8 736.1L699.3 747.3M722.0 720.9L738.9 718.4M738.9 718.4L743.0 745.3M767.9 714.8L790.7 723.2M767.9 714.8L769.4 737.2M790.7 723.2L797.9 724.9L806.6 723.1M790.7 723.2L789.7 746.4M806.6 723.1L816.2 722.5L823.0 719.9L831.1 720.4M806.6 723.1L806.4 738.1M831.1 720.4L831.5 724.5L829.7 734.3L829.0 740.2M-20.3 738.6L-3.9 742.3L9.3 741.1M-20.3 738.6L-18.4 750.4L-20.3 760.7M9.3 741.1L12.5 741.8L19.5 740.9L25.2 744.4M25.2 744.4L24.8 754.7L27.1 766.2M50.8 741.9L71.5 745.3M50.8 741.9L56.7 760.7M71.5 745.3L82.6 746.8L93.0 747.7L102.7 745.5M71.5 745.3L73.5 763.7M102.7 745.5L121.5 739.6M102.7 745.5L99.5 756.6L92.5 764.3M121.5 739.6L129.8 741.1L135.4 738.1L140.8 737.8M140.8 737.8L153.9 737.3L166.4 737.9M140.8 737.8L141.3 768.5M166.4 737.9L175.0 740.3L185.6 740.3L193.6 744.7M166.4 737.9L166.3 744.9L170.4 756.0L169.0 761.9M193.6 744.7L205.6 747.2L214.5 747.7M193.6 744.7L193.8 756.9L193.2 767.8M214.5 747.7L222.7 749.0L235.3 745.8M214.5 747.7L215.2 753.9L212.4 762.7M235.3 745.8L245.5 748.5L252.2 747.8L264.4 747.6M235.3 745.8L236.9 751.6L238.8 754.0L241.9 761.0M264.4 747.6L284.3 742.3M264.4 747.6L253.8 763.8M284.3 742.3L290.3 740.5L296.8 741.4L303.5 740.2M284.3 742.3L282.5 751.8L282.3 763.2M303.5 740.2L326.4 737.6M303.5 740.2L299.7 767.7M326.4 737.6L339.1 737.9L352.9 736.6M326.4 737.6L327.6 749.7L326.0 762.7M352.9 736.6L361.9 738.6L375.1 743.5M352.9 736.6L346.6 767.2M375.1 743.5L388.9 741.5L400.8 739.1M375.1 743.5L370.7 760.2M400.8 739.1L401.5 762.3M416.1 746.2L438.1 736.5M416.1 746.2L419.0 755.7L425.0 768.7M438.1 736.5L468.2 743.5M438.1 736.5L442.3 752.1L447.4 763.1M468.2 743.5L476.9 744.8L485.4 745.4L494.8 747.3M468.2 743.5L465.0 754.8L466.3 768.1M494.8 747.3L514.6 739.7M494.8 747.3L490.3 756.1L487.6 761.8M514.6 739.7L533.0 737.6M514.6 739.7L513.2 751.6L515.7 767.8M533.0 737.6L543.9 742.7L553.2 743.8M533.0 737.6L531.5 745.9L531.2 752.5L534.1 760.7M553.2 743.8L568.4 737.8L580.4 736.1M553.2 743.8L555.0 748.4L553.9 755.8L554.1 763.7M580.4 736.1L585.8 738.7L593.0 745.1L600.4 747.1M580.4 736.1L578.6 748.0L578.9 756.8L575.3 766.5M600.4 747.1L605.7 745.5L616.0 748.2L623.6 746.5M600.4 747.1L598.5 758.2L598.8 769.5M623.6 746.5L635.6 742.9L645.4 740.4M623.6 746.5L622.0 753.9L624.4 760.4L625.2 767.4M645.4 740.4L677.7 744.9M645.4 740.4L646.1 753.8L649.1 770.2M677.7 744.9L676.4 752.7L674.1 760.9L669.3 768.9M699.3 747.3L720.3 737.8M699.3 747.3L691.2 760.2M720.3 737.8L743.0 745.3M720.3 737.8L722.2 744.6L719.7 754.9L722.7 762.6M743.0 745.3L769.4 737.2M743.0 745.3L740.5 768.8M769.4 737.2L778.3 741.7L789.7 746.4M769.4 737.2L767.0 743.0L765.8 752.8L760.6 760.5M789.7 746.4L792.8 745.5L799.7 740.5L806.4 738.1M789.7 746.4L785.9 769.5M806.4 738.1L813.2 741.1L821.8 740.2L829.0 740.2M806.4 738.1L811.9 752.3L813.5 765.1M829.0 740.2L835.6 769.3M-20.3 760.7L4.7 763.4M-20.3 760.7L-19.9 769.9L-17.9 781.3L-19.1 792.7M27.1 766.2L56.7 760.7M27.1 766.2L34.3 791.3M56.7 760.7L73.5 763.7M73.5 763.7L82.1 761.9L85.5 763.7L92.5 764.3M73.5 763.7L69.3 783.8M92.5 764.3L104.4 767.3L117.4 765.5M92.5 764.3L92.3 771.4L97.4 774.9L96.7 783.2M117.4 765.5L128.5 766.6L141.3 768.5M117.4 765.5L120.5 775.8L119.9 784.1L120.6 791.0M141.3 768.5L143.3 772.5L146.5 783.7L148.1 787.9M169.0 761.9L177.3 763.3L186.3 764.1L193.2 767.8M169.0 761.9L166.8 791.0M193.2 767.8L204.8 764.2L212.4 762.7M193.2 767.8L187.5 790.5M212.4 762.7L221.5 759.8L233.3 763.1L241.9 761.0M241.9 761.0L245.5 764.4L249.9 761.5L253.8 763.8M241.9 761.0L236.8 776.9L235.0 790.8M253.8 763.8L282.3 763.2M253.8 763.8L264.9 789.4M282.3 763.2L288.7 762.4L291.7 763.9L299.7 767.7M282.3 763.2L286.6 791.0M299.7 767.7L308.8 764.9L315.1 762.2L326.0 762.7M299.7 767.7L303.8 785.0M326.0 762.7L346.6 767.2M326.0 762.7L329.7 771.5L330.5 779.7L330.3 791.0M346.6 767.2L370.7 760.2M346.6 767.2L347.9 773.6L346.4 783.4L349.0 788.1M401.5 762.3L425.0 768.7M425.0 768.7L447.4 763.1M425.0 768.7L425.9 776.9L425.8 783.3L425.3 791.2M447.4 763.1L466.3 768.1M447.4 763.1L439.7 786.8M466.3 768.1L475.9 762.8L487.6 761.8M466.3 768.1L466.7 772.9L466.6 783.1L467.9 789.3M487.6 761.8L515.7 767.8M487.6 761.8L487.4 773.3L483.6 782.4M515.7 767.8L524.3 767.8L529.6 763.2L534.1 760.7M534.1 760.7L554.1 763.7M534.1 760.7L535.8 774.7L538.6 785.6M554.1 763.7L575.3 766.5M554.1 763.7L556.5 771.5L552.4 777.7L554.4 783.3M575.3 766.5L586.6 767.0L598.8 769.5M575.3 766.5L575.1 774.7L577.8 783.9M598.8 769.5L613.1 768.4L625.2 767.4M598.8 769.5L603.5 775.8L607.0 780.7L607.6 784.5M625.2 767.4L632.4 770.0L641.5 770.2L649.1 770.2M625.2 767.4L628.8 778.8L631.1 785.9M649.1 770.2L669.3 768.9M649.1 770.2L645.1 786.4M669.3 768.9L691.2 760.2M691.2 760.2L702.8 762.2L712.3 763.5L722.7 762.6M691.2 760.2L695.6 771.7L695.4 778.3L698.7 789.3M722.7 762.6L728.2 763.5L735.8 765.8L740.5 768.8M722.7 762.6L720.9 775.1L718.1 785.8M740.5 768.8L748.9 764.3L760.6 760.5M740.5 768.8L739.2 777.1L736.0 782.6M760.6 760.5L767.8 762.4L775.7 767.6L785.9 769.5M760.6 760.5L761.9 773.0L764.8 783.3M785.9 769.5L813.5 765.1M785.9 769.5L785.0 788.0M813.5 765.1L822.4 765.4L828.0 769.4L835.6 769.3M835.6 769.3L835.4 782.7M-19.1 792.7L11.5 788.2M-19.1 792.7L-18.6 811.7M11.5 788.2L23.4 788.9L34.3 791.3M11.5 788.2L9.4 802.0L5.2 813.9M34.3 791.3L42.0 789.5L46.6 783.3M34.3 791.3L32.0 800.5L26.0 812.9M46.6 783.3L53.9 785.5L63.9 783.8L69.3 783.8M46.6 783.3L50.3 793.9L51.8 800.8L56.4 811.6M69.3 783.8L75.0 815.1M96.7 783.2L106.9 786.5L120.6 791.0M96.7 783.2L99.4 808.9M120.6 791.0L132.2 791.9L138.5 788.8L148.1 787.9M120.6 791.0L121.7 800.3L122.2 805.2M148.1 787.9L154.6 791.2L161.1 787.9L166.8 791.0M148.1 787.9L143.9 798.0L146.3 806.4L142.5 812.3M166.8 791.0L173.8 791.5L181.5 792.7L187.5 790.5M166.8 791.0L166.7 803.1L166.6 811.8M187.5 790.5L193.7 787.6L203.2 785.4L212.5 783.6M187.5 790.5L191.6 811.9M212.5 783.6L224.8 785.0L235.0 790.8M212.5 783.6L211.7 789.2L214.9 798.5L216.7 805.7M235.0 790.8L247.0 790.5L255.0 792.2L264.9 789.4M235.0 790.8L237.9 796.8L237.0 804.0L238.2 811.1M264.9 789.4L286.6 791.0M264.9 789.4L261.7 808.4M286.6 791.0L295.3 788.8L303.8 785.0M286.6 791.0L284.2 805.3M303.8 785.0L300.9 814.4M330.3 791.0L337.3 789.5L344.5 791.0L349.0 788.1M330.3 791.0L325.6 801.3L324.6 813.3M349.0 788.1L358.0 786.9L369.7 788.9L378.5 789.9M349.0 788.1L350.8 794.2L351.1 801.4L352.5 809.7M378.5 789.9L397.9 784.9M378.5 789.9L378.1 796.8L375.7 805.4L371.7 813.9M397.9 784.9L397.3 794.9L397.2 799.4L396.1 807.8M425.3 791.2L439.7 786.8M425.3 791.2L422.1 796.9L422.6 802.0L423.1 809.7M439.7 786.8L443.5 796.7L447.6 809.4M467.9 789.3L483.6 782.4M467.9 789.3L463.0 810.3M483.6 782.4L495.7 785.4L508.4 793.0M483.6 782.4L484.3 806.7M508.4 793.0L538.6 785.6M508.4 793.0L510.4 797.6L508.7 806.3L512.3 813.1M538.6 785.6L548.2 784.5L554.4 783.3M538.6 785.6L535.4 796.9L535.1 806.8M554.4 783.3L577.8 783.9M554.4 783.3L552.0 793.4L552.9 806.8L553.1 814.9M577.8 783.9L587.2 785.4L599.8 784.8L607.6 784.5M577.8 783.9L580.0 797.5L578.9 813.6M607.6 784.5L617.9 787.2L631.1 785.9M607.6 784.5L602.0 808.5M631.1 785.9L637.8 786.7L645.1 786.4M645.1 786.4L652.9 786.4L663.3 785.8L675.9 788.3M645.1 786.4L648.0 806.6M675.9 788.3L698.7 789.3M698.7 789.3L706.5 786.2L712.4 785.2L718.1 785.8M698.7 789.3L700.8 794.3L699.5 799.7L700.2 806.9M718.1 785.8L724.0 783.2L729.8 782.6L736.0 782.6M718.1 785.8L718.4 796.3L718.9 803.2L720.0 813.6M736.0 782.6L747.2 784.1L757.3 781.9L764.8 783.3M736.0 782.6L739.5 791.5L743.7 799.0L746.4 810.8M764.8 783.3L771.1 782.9L779.3 785.4L785.0 788.0M764.8 783.3L768.7 806.1M785.0 788.0L815.4 793.0M785.0 788.0L784.2 811.9M815.4 793.0L835.4 782.7M835.4 782.7L835.7 801.0L832.2 816.3M-18.6 811.7L-10.2 812.7L-4.2 811.7L5.2 813.9M-18.6 811.7L-20.4 837.8M5.2 813.9L10.2 815.8L21.1 815.1L26.0 812.9M5.2 813.9L4.4 821.3L4.4 824.8L0.6 832.7M26.0 812.9L37.1 812.7L47.2 813.0L56.4 811.6M26.0 812.9L31.0 818.8L32.8 825.0L33.5 833.0M56.4 811.6L57.9 822.5L56.8 837.5M75.0 815.1L99.4 808.9M75.0 815.1L79.2 822.1L77.9 829.7L80.4 838.8M99.4 808.9L108.6 809.8L116.3 808.6L122.2 805.2M99.4 808.9L98.6 821.5L96.2 828.1L95.8 839.3M122.2 805.2L127.9 806.1L137.0 809.8L142.5 812.3M122.2 805.2L121.3 824.1L116.9 838.5M142.5 812.3L166.6 811.8M142.5 812.3L148.3 836.1M166.6 811.8L175.8 814.3L185.6 813.3L191.6 811.9M166.6 811.8L166.3 817.5L165.6 826.7L162.8 833.9M191.6 811.9L202.5 809.7L216.7 805.7M191.6 811.9L194.8 818.3L195.5 828.3M216.7 805.7L238.2 811.1M216.7 805.7L215.9 815.4L211.8 827.1L210.6 834.9M238.2 811.1L261.7 808.4M238.2 811.1L237.5 824.8L237.8 838.6M261.7 808.4L271.0 805.6L284.2 805.3M261.7 808.4L258.2 816.1L260.3 824.8L256.7 830.4M284.2 805.3L287.5 810.3L293.1 812.0L300.9 814.4M300.9 814.4L308.4 812.3L315.9 812.8L324.6 813.3M300.9 814.4L301.0 821.1L301.2 826.2L300.7 828.5M324.6 813.3L340.3 811.3L352.5 809.7M352.5 809.7L360.5 809.4L365.5 813.7L371.7 813.9M371.7 813.9L385.1 810.8L396.1 807.8M371.7 813.9L376.2 835.5M396.1 807.8L403.9 807.2L413.0 809.0L423.1 809.7M396.1 807.8L397.5 817.8L402.4 831.8M423.1 809.7L447.6 809.4M423.1 809.7L424.8 831.3M447.6 809.4L453.4 810.0L460.2 808.9L463.0 810.3M463.0 810.3L470.3 809.5L478.0 806.6L484.3 806.7M463.0 810.3L464.4 829.4M484.3 806.7L512.3 813.1M484.3 806.7L485.8 837.2M512.3 813.1L509.8 823.0L510.1 829.7M535.1 806.8L538.5 820.6L539.4 837.1M553.1 814.9L578.9 813.6M578.9 813.6L586.2 814.1L592.2 811.6L602.0 808.5M578.9 813.6L578.7 837.4M602.0 808.5L611.2 810.4L621.5 811.4L627.8 811.4M602.0 808.5L607.6 828.5M627.8 811.4L648.0 806.6M627.8 811.4L632.8 835.4M648.0 806.6L655.4 807.7L665.0 813.2L670.0 816.5M648.0 806.6L650.0 815.6L648.7 830.3L652.1 839.5M670.0 816.5L700.2 806.9M670.0 816.5L670.2 821.8L675.3 832.1M700.2 806.9L705.7 809.1L714.8 810.3L720.0 813.6M700.2 806.9L699.8 822.3L696.5 839.3M720.0 813.6L731.3 810.6L746.4 810.8M720.0 813.6L718.1 838.5M746.4 810.8L757.2 808.0L768.7 806.1M746.4 810.8L737.1 839.9M768.7 806.1L777.3 810.7L784.2 811.9M768.7 806.1L766.2 816.3L761.8 830.7M784.2 811.9L795.5 813.5L803.8 812.0L812.5 810.9M784.2 811.9L789.7 823.8L791.3 834.9M812.5 810.9L818.6 812.8L828.1 816.6L832.2 816.3M812.5 810.9L809.6 838.4M-20.4 837.8L-7.9 833.6L0.6 832.7M0.6 832.7L33.5 833.0M56.8 837.5L68.7 837.8L80.4 838.8M80.4 838.8L95.8 839.3M95.8 839.3L104.1 839.2L116.9 838.5M116.9 838.5L130.6 837.1L148.3 836.1M162.8 833.9L173.2 832.5L184.0 832.3L195.5 828.3M195.5 828.3L201.0 833.7L210.6 834.9M210.6 834.9L237.8 838.6M237.8 838.6L256.7 830.4M256.7 830.4L270.0 833.5L287.8 831.9M287.8 831.9L300.7 828.5M300.7 828.5L331.8 828.9M331.8 828.9L342.1 831.1L349.3 833.8M349.3 833.8L365.2 834.0L376.2 835.5M376.2 835.5L382.8 836.1L396.1 835.5L402.4 831.8M402.4 831.8L413.3 829.5L424.8 831.3M424.8 831.3L435.0 834.1L444.7 836.3M444.7 836.3L454.8 834.9L464.4 829.4M464.4 829.4L485.8 837.2M485.8 837.2L510.1 829.7M539.4 837.1L544.7 835.6L549.1 834.8L557.6 832.2M557.6 832.2L566.3 835.5L569.2 834.2L578.7 837.4M578.7 837.4L607.6 828.5M632.8 835.4L652.1 839.5M652.1 839.5L663.4 837.9L675.3 832.1M675.3 832.1L685.2 837.0L696.5 839.3M696.5 839.3L718.1 838.5M718.1 838.5L737.1 839.9M737.1 839.9L761.8 830.7M761.8 830.7L791.3 834.9M791.3 834.9L798.8 835.5L809.6 838.4M809.6 838.4L832.9 831.6" stroke="#626464" stroke-width="1" fill="none" shape-rendering="crispEdges"/>
<g stroke="#7d6a12" stroke-width="1" fill="none" shape-rendering="crispEdges"><path d="M183.0 6.0 L186.0 15.0 L200.0 40.0 L200.0 87.0 L190.0 113.0 L187.0 133.0 L177.0 147.0 L157.0 187.0 L147.0 207.0 L152.0 222.0 L162.0 230.0 L167.0 250.0 L168.0 270.0 L173.0 287.0 L173.0 320.0 L182.0 357.0 L182.0 390.0 L167.0 420.0 L160.0 450.0 L153.0 477.0 L140.0 503.0 L133.0 540.0 L128.0 573.0 L127.0 607.0 L128.0 640.0 L133.0 653.0 L132.0 673.0"/><path d="M6.0 257.0 L50.0 253.0 L87.0 240.0 L113.0 230.0 L140.0 225.0 L160.0 223.0 L187.0 213.0 L213.0 200.0 L233.0 187.0 L270.0 173.0 L337.0 160.0 L370.0 147.0 L403.0 137.0 L443.0 133.0 L517.0 140.0 L540.0 150.0 L583.0 160.0 L620.0 150.0 L640.0 150.0 L660.0 143.0 L693.0 127.0 L726.7 106.7 L810.0 71.7"/><path d="M660.0 143.0 L672.5 160.0 L684.7 170.8 L686.0 181.7 L699.6 189.8 L721.2 187.1 L748.3 181.7 L775.4 177.6 L806.0 172.2"/><path d="M473.0 6.0 L470.0 37.0 L450.0 57.0 L433.0 67.0 L420.0 100.0 L407.0 130.0 L400.0 167.0 L397.0 200.0 L397.0 270.0 L397.0 303.0 L402.0 340.0 L405.0 367.0 L405.0 393.0 L413.0 420.0 L427.0 447.0 L440.0 472.0 L433.0 497.0 L417.0 530.0 L408.0 540.0 L380.0 567.0 L336.7 597.0 L310.0 607.0 L305.0 627.0"/><path d="M403.0 133.0 L427.0 160.8 L446.0 185.2 L473.0 217.7 L489.4 231.3 L508.0 238.5 L522.0 236.7 L549.0 212.3 L573.4 182.5 L595.0 160.8 L620.0 150.0"/><path d="M588.0 6.0 L586.7 20.0 L603.0 46.7 L600.0 80.0 L590.0 110.0 L610.0 140.0 L620.0 150.0"/><path d="M270.0 60.0 L303.0 55.0 L323.0 65.0 L363.0 90.0 L397.0 120.0 L403.0 133.0"/><path d="M240.0 6.0 L230.0 20.0 L228.0 43.0 L220.0 63.0 L203.0 70.0"/><path d="M6.7 462.0 L50.0 465.0 L93.0 475.0 L133.0 473.0 L153.0 481.0 L200.0 477.0 L270.0 472.0 L290.0 463.0 L317.0 427.0 L343.0 402.0 L380.0 393.0 L405.0 367.0 L413.0 367.0 L447.0 363.0 L487.0 360.0 L540.0 352.0 L583.0 347.0 L590.0 353.0 L640.0 363.0 L683.0 368.0 L721.2 371.2 L756.4 371.2 L780.8 360.4 L806.0 346.8"/><path d="M260.0 475.0 L240.0 510.0 L223.0 540.0 L213.0 567.0 L203.0 600.0 L190.0 633.0 L185.0 653.0"/><path d="M6.7 660.0 L47.0 650.0 L87.0 643.0 L100.0 640.0 L133.0 640.0 L160.0 643.0 L187.0 657.0 L213.0 650.0 L250.0 647.0 L270.0 643.0 L306.7 630.0 L356.7 630.0 L380.0 637.0 L396.7 627.0 L420.0 618.0 L443.0 617.0 L463.0 622.0 L480.0 615.0 L516.7 615.0 L540.0 624.0 L576.7 640.0 L640.0 643.0 L673.0 653.0 L706.7 662.0 L740.0 662.0 L773.0 657.0 L783.0 647.0 L806.0 640.0"/><path d="M90.0 653.0 L110.0 670.0 L133.0 673.0 L160.0 687.0 L180.0 677.0"/><path d="M583.0 347.0 L607.0 397.0 L630.0 423.0 L637.0 437.0 L632.0 457.0 L630.0 497.0 L643.0 540.0 L653.0 573.0 L660.0 607.0 L680.0 633.0 L706.7 660.0 L713.0 673.0 L723.0 700.0 L740.0 727.0 L750.0 753.0 L753.0 806.0"/><path d="M637.0 437.0 L657.0 450.0 L690.0 463.0 L740.0 473.0 L800.0 490.0 L806.0 492.0"/><path d="M440.0 472.0 L467.0 470.0 L510.0 450.0 L540.0 413.0 L553.0 383.0 L583.0 347.0 L613.0 323.0 L650.0 303.0 L687.0 283.0 L717.0 270.0 L740.0 247.0 L810.0 223.0"/><path d="M405.0 367.0 L416.3 364.0 L440.6 339.7 L465.0 312.6 L481.3 290.9 L497.6 263.8 L505.7 239.4"/><path d="M522.0 239.4 L535.5 250.3 L541.0 277.4 L554.5 301.8 L568.0 320.8 L584.3 337.0"/><path d="M699.6 189.8 L715.8 189.8 L732.0 211.4 L753.7 225.0 L760.5 241.2 L764.6 268.3 L770.0 281.9 L790.0 310.0 L806.0 330.0"/><path d="M729.4 257.5 L753.7 268.3 L783.5 292.7 L806.0 306.2"/><path d="M786.7 580.0 L783.0 640.0 L786.7 667.0 L790.0 720.0 L795.0 806.0"/><path d="M8.0 620.0 L11.7 640.0 L6.7 660.0"/><path d="M367.0 130.0 L372.0 112.0 L390.0 101.0 L410.0 100.0 L432.0 106.0 L437.0 118.0 L433.0 140.0 L428.0 158.0 L410.0 163.0 L385.0 160.0 L368.0 150.0 L367.0 130.0"/><path d="M575.0 345.0 L577.0 336.0 L586.0 334.0 L593.0 340.0 L594.0 352.0 L590.0 360.0 L580.0 360.0 L575.0 353.0 L575.0 345.0"/><path d="M160.0 225.0 L165.0 221.0 L174.0 223.0 L175.0 230.0 L168.0 233.0 L161.0 231.0 L160.0 225.0"/></g>
<path d="M6.0 705.0 L8.1 703.9 L10.5 703.7 L12.5 702.8 L14.4 701.5 L16.6 700.9 L18.5 699.8 L21.2 699.4 L23.7 698.5 L26.1 698.2 L28.3 698.5 L30.3 699.8 L29.1 701.6 L29.4 703.9 L28.8 705.9 L27.7 707.7 L30.1 708.1 L32.1 706.8 L34.3 706.4 L36.7 706.7 L39.0 705.8 L41.3 705.8 L43.6 704.7 L46.0 705.0 L45.5 707.1 L44.9 709.2 L45.2 711.4 L44.6 713.4 L44.8 715.6 L47.4 715.9 L50.0 715.6 L51.4 717.7 L50.9 720.3 L51.9 722.5 L52.7 724.8 L54.8 724.0 L56.9 723.1 L59.3 723.5 L61.1 724.8 L63.3 724.8 L65.1 725.8 L67.0 726.7 L69.1 727.1 L71.2 727.4 L71.9 729.8 L74.0 731.3 L74.6 733.7 L76.4 735.4 L77.8 738.0 L79.0 740.6 L76.4 739.8 L73.8 740.6 L71.3 740.9 L69.5 743.1 L67.0 743.3 L68.9 744.6 L70.1 746.5 L71.0 748.5 L72.8 750.1 L75.3 750.0 L77.3 751.1 L79.7 751.4 L81.7 752.5 L83.2 751.2 L84.6 749.7 L86.1 748.4 L87.9 747.4 L89.4 746.0 L91.3 745.2 L92.3 743.3 L94.0 744.7 L95.6 746.2 L97.6 747.2 L99.3 748.6 L101.5 749.2 L103.8 749.6 L105.4 751.2 L107.9 751.1 L110.3 750.7 L112.6 749.9 L114.7 748.5 L116.5 747.5 L118.3 746.6 L119.5 744.7 L121.8 744.5 L123.2 743.0 L124.6 741.4 L126.5 740.6 L128.7 740.6 L130.0 742.7 L131.8 743.7 L134.3 742.9 L135.7 744.9 L137.9 745.0 L139.7 745.9 L141.9 745.8 L143.9 746.6 L145.8 747.9 L147.8 748.6 L150.0 748.5 L151.8 747.1 L154.1 747.5 L155.8 746.0 L158.1 746.5 L159.9 745.3 L162.0 745.0 L164.3 745.3 L166.5 745.2 L168.5 744.0 L170.8 744.6 L172.8 743.0 L175.0 743.0 L177.2 742.4 L179.3 743.5 L181.5 742.6 L183.6 743.0 L185.7 743.5 L187.8 744.1 L190.0 744.0 L192.2 744.2 L194.3 744.8 L195.8 747.0 L198.1 746.9 L200.0 748.0 L201.7 749.6 L203.7 750.3 L206.1 750.2 L208.0 751.1 L210.0 752.0 L212.0 752.9 L213.9 753.9 L215.9 754.7 L218.0 755.4 L219.9 756.4 L222.0 757.0 L223.6 758.7 L226.0 759.0 L228.1 759.9 L229.8 761.4 L232.0 762.0 L234.0 761.5 L236.0 761.6 L238.0 762.9 L240.0 762.0 L242.0 762.0 L240.6 760.2 L238.3 759.1 L237.4 756.8 L236.0 755.0 L234.7 753.1 L232.5 751.9 L232.0 749.5 L230.6 747.7 L229.0 746.0 L226.6 745.7 L225.1 743.8 L223.0 743.1 L221.1 741.7 L218.9 741.2 L217.0 740.0 L215.1 738.8 L213.2 737.9 L210.7 738.3 L208.7 737.4 L207.1 735.5 L205.0 735.0 L205.6 732.9 L204.1 731.1 L204.2 729.0 L204.2 727.0 L203.4 725.0 L203.5 723.0 L204.5 721.0 L205.7 719.1 L207.1 717.4 L208.6 715.8 L209.5 713.6 L211.0 712.0 L212.3 710.2 L214.4 709.0 L214.9 706.4 L217.1 705.4 L218.8 703.9 L220.0 702.0 L220.7 700.0 L221.6 698.0 L223.5 696.7 L223.6 694.3 L224.5 692.4 L225.9 690.8 L227.0 689.0 L227.4 686.9 L226.3 684.7 L226.7 682.6 L226.7 680.4 L227.6 678.3 L226.9 676.1 L227.0 674.0 L224.9 673.8 L223.1 675.4 L221.1 675.5 L218.9 675.3 L216.9 675.3 L215.0 676.5 L213.1 677.3 L211.1 677.9 L209.0 677.5 L207.1 678.5 L205.0 678.4 L203.5 680.1 L202.5 682.1 L202.0 684.3 L201.0 686.5 L199.4 688.2 L197.2 689.5 L196.2 691.7 L193.7 691.9 L191.2 692.2 L188.8 693.2 L186.7 692.0 L184.5 690.8 L182.9 688.8 L180.8 688.1 L179.2 686.3 L177.0 685.8 L177.3 683.5 L178.4 681.4 L180.2 679.7 L182.2 678.3 L184.3 677.0 L185.9 675.6 L187.6 674.3 L189.9 673.7 L190.7 671.4 L192.3 669.9 L195.0 669.9 L196.2 668.0 L198.8 668.2 L201.2 667.9 L203.5 666.6 L204.9 664.6 L207.1 663.2 L208.0 660.7 L210.0 659.8 L210.6 657.4 L212.7 656.6 L213.9 654.8 L215.8 653.7 L216.8 651.8 L218.7 652.6 L220.8 652.8 L222.8 653.3 L224.6 652.2 L226.6 651.6 L228.5 650.7 L230.4 649.8 L232.7 650.0 L234.5 648.7 L236.8 648.9 L238.3 646.9 L240.5 647.0 L242.6 647.9 L244.8 647.8 L246.9 648.4 L249.1 648.6 L251.3 648.8 L253.5 648.5 L255.8 647.7 L257.8 649.2 L260.0 649.0 L262.2 648.9 L264.3 649.5 L266.2 650.6 L268.4 650.8 L270.5 651.0 L272.6 651.0 L274.6 652.2 L276.8 651.8 L278.9 651.5 L281.0 652.0 L282.9 650.6 L285.5 650.6 L287.4 649.0 L289.5 648.0 L291.3 649.0 L293.5 648.9 L295.6 649.2 L297.4 650.3 L299.4 650.8 L301.4 650.2 L302.6 648.2 L304.9 648.1 L306.4 646.6 L307.5 644.6 L307.6 642.4 L308.0 640.2 L307.8 638.0 L306.5 635.8 L307.1 633.3 L306.4 631.0 L308.1 629.7 L308.0 627.2 L309.4 625.8 L310.5 624.1 L312.0 622.7 L314.1 623.4 L316.3 624.0 L318.4 624.8 L320.5 625.5 L320.0 627.6 L321.4 629.7 L321.3 631.8 L321.2 633.8 L321.2 635.9 L320.5 638.0 L322.3 639.6 L322.0 642.4 L323.2 644.3 L325.6 645.6 L326.0 648.0 L327.4 649.7 L329.1 651.1 L330.5 652.8 L331.8 654.5 L333.0 656.4 L334.3 658.4 L336.0 660.0 L338.4 659.7 L340.6 658.8 L343.0 658.5 L342.9 656.2 L343.6 654.1 L344.4 652.0 L346.9 651.9 L349.0 653.2 L351.4 653.6 L353.4 652.1 L354.7 649.9 L356.1 647.8 L358.4 646.6 L361.0 643.7 L362.2 645.5 L362.4 647.6 L362.6 649.7 L362.9 651.8 L364.0 653.6 L366.3 652.5 L368.9 652.2 L371.0 650.8 L373.2 649.9 L375.2 648.6 L377.3 647.4 L379.5 646.6 L379.1 644.6 L379.1 642.5 L378.2 640.6 L378.2 638.5 L377.4 636.5 L376.6 634.6 L376.7 632.5 L379.3 634.0 L382.0 635.3 L384.2 634.2 L385.6 631.8 L388.0 631.0 L387.8 633.0 L387.5 635.0 L386.4 636.9 L386.0 638.9 L386.5 641.0 L388.9 641.7 L391.0 643.5 L393.6 643.7 L394.6 645.5 L396.7 646.3 L397.8 648.0 L399.9 647.9 L401.9 647.3 L403.9 648.6 L406.0 648.0 L408.0 648.1 L410.1 648.3 L412.0 648.0 L414.0 647.6 L416.0 647.5 L418.0 647.0 L420.0 646.7 L422.2 646.3 L424.2 647.4 L426.5 646.6 L428.6 647.1 L430.6 648.5 L432.9 647.5 L435.0 647.8 L437.0 648.8 L439.2 648.8 L440.8 650.8 L443.2 650.3 L445.3 650.7 L446.8 652.8 L449.2 652.3 L450.8 654.2 L452.9 654.6 L455.0 655.0 L456.7 656.5 L458.6 657.7 L460.9 658.1 L462.8 659.5 L465.4 659.3 L466.8 661.4 L469.0 662.0 L470.8 663.0 L472.5 664.3 L474.9 664.4 L476.2 666.4 L477.9 667.7 L480.5 667.3 L482.0 669.0 L483.6 670.3 L484.7 672.1 L485.7 673.9 L487.5 675.0 L489.6 675.8 L491.5 676.8 L493.3 678.1 L494.9 679.8 L496.6 681.2 L498.7 682.0 L500.6 683.6 L502.4 685.3 L504.2 687.1 L505.8 689.0 L507.4 690.7 L508.7 692.6 L510.0 694.5 L511.1 696.8 L510.7 699.3 L510.2 701.7 L511.4 704.0 L512.9 705.9 L513.8 708.3 L515.6 710.0 L518.0 709.7 L520.1 710.9 L522.4 711.3 L524.7 711.4 L527.0 711.4 L528.9 710.9 L530.9 710.3 L532.9 710.0 L535.0 709.8 L536.7 708.6 L538.5 707.4 L540.5 706.7 L542.9 707.2 L545.0 706.9 L546.8 705.6 L548.8 704.9 L550.8 704.4 L552.8 703.5 L554.1 701.5 L556.0 700.5 L557.7 699.1 L559.9 698.5 L561.4 696.9 L563.4 696.0 L565.4 694.3 L568.0 693.8 L570.0 692.3 L572.2 692.1 L573.5 690.1 L575.7 689.9 L577.3 688.5 L579.2 687.7 L581.2 686.3 L582.3 684.1 L583.3 681.9 L584.7 680.0 L586.6 678.5 L588.1 676.9 L590.3 676.9 L592.1 676.0 L593.8 674.9 L595.8 674.4 L597.7 673.9 L599.8 673.7 L601.9 674.6 L604.1 673.6 L606.1 675.3 L608.3 674.5 L610.4 674.8 L612.5 674.8 L614.4 676.1 L615.9 678.0 L617.8 679.4 L620.0 680.3 L621.8 681.3 L623.7 682.1 L625.3 683.5 L627.0 684.6 L629.2 684.8 L631.0 685.9 L632.6 687.7 L634.2 689.5 L636.6 690.3 L638.7 691.4 L640.2 693.3 L641.6 694.9 L641.7 697.1 L642.7 698.9 L643.9 700.6 L644.1 702.8 L645.2 704.6 L647.1 705.9 L647.6 708.0 L649.7 708.6 L651.5 709.9 L653.4 710.9 L654.8 712.8 L656.8 713.6 L656.2 715.8 L656.1 718.0 L657.2 720.3 L656.1 722.5 L656.8 724.7 L658.6 725.8 L660.1 727.3 L661.3 729.0 L663.7 729.4 L665.3 730.8 L666.0 733.1 L668.0 734.0 L669.6 735.3 L670.8 737.0 L671.7 738.8 L672.9 740.5 L675.1 741.3 L675.9 743.2 L677.0 745.0 L678.2 746.8 L679.3 748.7 L680.9 750.2 L681.4 752.4 L682.7 754.2 L681.3 756.1 L681.7 758.6 L680.9 760.7 L682.8 759.8 L684.2 758.2 L686.2 757.5 L688.3 757.2 L690.0 756.0 L692.4 755.7 L694.4 757.5 L696.6 757.9 L699.1 756.9 L701.2 758.0 L700.7 760.3 L702.0 762.3 L701.6 764.6 L701.9 766.7 L703.1 768.8 L703.0 771.0 L704.2 773.0 L705.7 774.8 L707.0 776.7 L709.2 777.9 L710.4 780.0 L710.7 782.0 L711.1 784.1 L712.3 785.8 L713.2 787.5 L714.0 789.4 L714.9 791.4 L714.5 793.5 L715.0 795.6 L714.6 797.7 L714.9 799.8 L715.4 801.9 L716.3 803.9 L716.0 806.0 L6 806Z" fill="#004364" stroke="#000" stroke-width="1"/>
<path d="M15.8 719.5L23.7 716.9L31.6 719.5L39.5 722.2L34.3 724.8L31.6 730.1L26.4 727.5L19.8 724.8Z" fill="#5c4f4a" stroke="#000" stroke-width="1"/>
<path d="M205.0 678.0 L207.0 677.5 L208.9 676.9 L210.8 675.8 L213.2 677.6 L214.7 674.7 L217.0 675.8 L219.2 676.6 L220.8 673.9 L223.0 674.9 L225.1 674.7 L227.0 674.0 L228.4 676.1 L227.4 678.3 L226.4 680.4 L227.1 682.6 L226.3 684.7 L228.0 686.9 L227.0 689.0 L226.7 691.2 L226.0 693.3 L224.0 694.6 L221.9 695.8 L221.8 698.2 L220.3 699.8 L220.0 702.0 L218.8 703.9 L216.5 704.8 L216.4 707.8 L214.5 709.1 L212.1 710.0 L211.0 712.0 L209.1 713.4 L208.5 715.8 L208.0 718.2 L206.2 719.7 L205.0 721.7 L203.0 723.0 L204.0 724.9 L202.8 727.2 L204.9 728.9 L203.2 731.2 L203.5 733.2 L205.0 735.0 L207.5 734.6 L209.1 736.3 L211.0 737.5 L213.5 737.0 L215.1 739.0 L217.0 740.0 L218.5 742.1 L221.5 741.0 L222.9 743.3 L225.5 743.0 L226.9 745.2 L229.0 746.0 L229.5 748.5 L232.5 749.1 L234.4 750.5 L235.6 752.4 L236.0 755.0 L237.9 756.8 L240.9 757.2 L242.0 760.0 L240.0 761.2 L238.0 760.0 L236.0 758.7 L234.0 760.2 L232.0 760.3 L230.0 760.0 L228.5 758.5 L225.9 758.7 L225.0 756.4 L222.6 756.2 L221.6 754.0 L220.5 752.0 L218.0 752.0 L215.5 752.2 L214.4 749.9 L212.6 748.7 L210.1 748.9 L208.4 747.6 L207.6 744.7 L205.0 745.0 L204.2 742.6 L201.0 743.6 L200.4 741.0 L199.1 739.2 L196.2 739.8 L195.0 738.0 L194.3 735.9 L191.8 734.6 L191.6 732.2 L191.5 729.8 L190.0 728.0 L190.9 726.1 L192.0 724.2 L190.7 721.6 L192.1 719.9 L194.2 718.3 L194.0 716.1 L194.2 714.0 L195.0 712.0 L195.6 709.9 L198.0 708.6 L197.7 706.1 L197.0 703.4 L200.0 702.3 L200.0 700.0 L200.1 697.9 L201.0 695.9 L201.0 693.8 L202.2 692.0 L203.0 690.0Z" fill="#000" opacity="0.75"/>
<rect x="201.3" y="710.3" width="1.1" height="1.4" fill="#000"/><rect x="229.6" y="755.9" width="2.9" height="1.8" fill="#004364"/><rect x="207.3" y="736.0" width="2.4" height="2.9" fill="#000"/><rect x="224.5" y="683.3" width="1.3" height="2.7" fill="#5c4f4a"/><rect x="215.5" y="676.5" width="1.1" height="2.4" fill="#000"/><rect x="223.7" y="688.5" width="1.5" height="1.0" fill="#004364"/><rect x="218.1" y="748.0" width="1.5" height="2.0" fill="#5c4f4a"/><rect x="213.9" y="697.2" width="2.1" height="2.9" fill="#004364"/><rect x="216.6" y="685.1" width="2.6" height="1.4" fill="#004364"/><rect x="215.0" y="705.4" width="2.1" height="2.9" fill="#000"/><rect x="215.2" y="704.7" width="1.7" height="2.1" fill="#5c4f4a"/><rect x="213.8" y="676.4" width="1.5" height="1.4" fill="#004364"/><rect x="225.0" y="681.2" width="1.0" height="1.0" fill="#5c4f4a"/><rect x="217.4" y="688.5" width="1.5" height="2.4" fill="#000"/><rect x="207.9" y="742.5" width="1.5" height="1.5" fill="#004364"/><rect x="210.7" y="677.0" width="2.9" height="1.9" fill="#000"/><rect x="218.3" y="693.0" width="3.0" height="2.6" fill="#000"/><rect x="201.6" y="729.8" width="1.8" height="2.2" fill="#5c4f4a"/><rect x="198.2" y="722.6" width="1.3" height="2.1" fill="#004364"/><rect x="220.7" y="692.7" width="2.8" height="1.9" fill="#004364"/><rect x="209.7" y="703.8" width="1.4" height="2.3" fill="#000"/><rect x="204.6" y="687.5" width="2.7" height="2.6" fill="#004364"/><rect x="207.6" y="692.3" width="2.3" height="2.7" fill="#5c4f4a"/><rect x="217.7" y="679.6" width="1.1" height="1.3" fill="#004364"/><rect x="207.7" y="699.0" width="2.7" height="2.2" fill="#000"/><rect x="197.0" y="721.4" width="1.2" height="1.1" fill="#004364"/><rect x="196.0" y="724.5" width="2.9" height="1.2" fill="#004364"/><rect x="209.0" y="699.4" width="2.1" height="1.2" fill="#5c4f4a"/><rect x="220.5" y="687.9" width="1.9" height="2.4" fill="#004364"/><rect x="205.3" y="695.8" width="2.0" height="1.2" fill="#5c4f4a"/><rect x="206.3" y="679.4" width="2.8" height="2.9" fill="#000"/><rect x="218.2" y="700.4" width="1.5" height="1.2" fill="#5c4f4a"/><rect x="194.7" y="723.4" width="1.7" height="1.5" fill="#5c4f4a"/><rect x="195.2" y="726.6" width="2.6" height="1.2" fill="#004364"/><rect x="193.8" y="721.4" width="1.1" height="1.2" fill="#004364"/><rect x="205.1" y="742.1" width="2.0" height="2.7" fill="#004364"/><rect x="224.6" y="689.4" width="1.3" height="1.3" fill="#5c4f4a"/><rect x="202.9" y="740.9" width="2.4" height="1.9" fill="#000"/><rect x="210.6" y="703.1" width="1.5" height="1.0" fill="#000"/><rect x="220.9" y="685.9" width="3.0" height="1.6" fill="#000"/><rect x="215.3" y="689.3" width="1.6" height="2.8" fill="#000"/><rect x="201.7" y="700.9" width="2.4" height="2.9" fill="#000"/><rect x="216.6" y="742.2" width="1.4" height="1.6" fill="#5c4f4a"/><rect x="220.9" y="747.6" width="2.8" height="2.9" fill="#000"/><rect x="201.3" y="723.0" width="2.5" height="1.1" fill="#000"/><rect x="216.8" y="688.2" width="2.5" height="1.1" fill="#004364"/><rect x="202.9" y="738.5" width="1.0" height="1.4" fill="#000"/><rect x="220.1" y="676.6" width="2.9" height="1.5" fill="#5c4f4a"/><rect x="200.7" y="698.5" width="2.1" height="1.5" fill="#5c4f4a"/><rect x="198.7" y="704.7" width="1.8" height="1.2" fill="#004364"/><rect x="204.8" y="683.3" width="2.6" height="1.2" fill="#004364"/><rect x="229.6" y="757.7" width="1.3" height="2.0" fill="#5c4f4a"/><rect x="196.4" y="735.7" width="1.7" height="2.1" fill="#5c4f4a"/><rect x="209.6" y="691.5" width="1.0" height="1.6" fill="#004364"/><rect x="228.7" y="758.9" width="1.6" height="1.3" fill="#004364"/><rect x="210.2" y="710.6" width="1.8" height="2.7" fill="#004364"/><rect x="208.2" y="696.8" width="2.4" height="2.7" fill="#5c4f4a"/><rect x="221.5" y="692.0" width="1.4" height="2.8" fill="#5c4f4a"/><rect x="193.6" y="734.1" width="2.8" height="2.3" fill="#000"/><rect x="198.8" y="730.2" width="2.4" height="2.6" fill="#5c4f4a"/><rect x="208.5" y="737.6" width="1.8" height="1.8" fill="#000"/><rect x="207.1" y="693.1" width="2.9" height="2.4" fill="#004364"/><rect x="228.1" y="748.9" width="2.2" height="2.2" fill="#004364"/><rect x="221.5" y="696.5" width="2.1" height="1.3" fill="#004364"/><rect x="206.1" y="708.5" width="1.2" height="1.4" fill="#5c4f4a"/><rect x="227.6" y="750.3" width="1.9" height="2.3" fill="#5c4f4a"/><rect x="196.1" y="733.6" width="1.2" height="1.8" fill="#000"/><rect x="213.4" y="738.6" width="2.9" height="1.5" fill="#5c4f4a"/><rect x="201.0" y="735.5" width="1.7" height="2.2" fill="#004364"/><rect x="206.6" y="707.0" width="2.2" height="2.8" fill="#000"/><rect x="219.4" y="695.9" width="1.2" height="2.3" fill="#5c4f4a"/><rect x="191.4" y="728.8" width="2.5" height="2.4" fill="#004364"/><rect x="223.4" y="694.9" width="1.1" height="2.9" fill="#004364"/><rect x="211.5" y="691.1" width="2.8" height="1.8" fill="#004364"/><rect x="213.1" y="685.0" width="1.8" height="2.4" fill="#000"/><rect x="206.3" y="685.2" width="2.6" height="2.6" fill="#5c4f4a"/><rect x="216.1" y="691.7" width="2.8" height="2.0" fill="#000"/><rect x="195.4" y="730.1" width="1.9" height="3.0" fill="#004364"/><rect x="205.1" y="687.5" width="1.7" height="2.0" fill="#004364"/><rect x="211.3" y="684.9" width="1.1" height="1.6" fill="#5c4f4a"/><rect x="211.7" y="701.4" width="1.5" height="2.5" fill="#004364"/><rect x="217.4" y="686.8" width="2.8" height="1.7" fill="#5c4f4a"/><rect x="204.5" y="713.1" width="1.7" height="2.5" fill="#000"/><rect x="232.4" y="753.6" width="2.8" height="2.6" fill="#004364"/><rect x="202.8" y="723.3" width="1.7" height="3.0" fill="#5c4f4a"/><rect x="218.4" y="696.9" width="1.2" height="1.5" fill="#004364"/><rect x="220.7" y="751.4" width="2.0" height="2.6" fill="#004364"/><rect x="232.3" y="759.8" width="1.5" height="1.4" fill="#000"/><rect x="213.8" y="690.3" width="1.6" height="2.4" fill="#004364"/><rect x="218.1" y="744.7" width="2.0" height="3.0" fill="#5c4f4a"/><rect x="232.6" y="756.0" width="1.8" height="2.3" fill="#5c4f4a"/><rect x="213.5" y="685.3" width="1.9" height="1.3" fill="#004364"/><rect x="204.1" y="741.2" width="2.3" height="2.7" fill="#5c4f4a"/><rect x="210.2" y="743.1" width="2.0" height="1.3" fill="#004364"/><rect x="220.7" y="698.7" width="3.0" height="1.5" fill="#5c4f4a"/><rect x="212.5" y="740.8" width="2.0" height="2.4" fill="#000"/><rect x="212.1" y="679.5" width="1.4" height="1.3" fill="#004364"/><rect x="223.8" y="690.1" width="1.0" height="1.9" fill="#004364"/><rect x="224.9" y="684.2" width="1.5" height="1.6" fill="#000"/><rect x="223.5" y="748.5" width="1.2" height="1.9" fill="#000"/><rect x="200.5" y="718.8" width="1.8" height="2.8" fill="#5c4f4a"/><rect x="232.1" y="752.5" width="2.6" height="2.2" fill="#000"/><rect x="192.9" y="727.8" width="1.6" height="2.8" fill="#004364"/><rect x="201.9" y="697.6" width="2.4" height="1.8" fill="#004364"/><rect x="203.3" y="709.1" width="2.3" height="2.8" fill="#004364"/><rect x="197.7" y="709.6" width="1.6" height="2.4" fill="#5c4f4a"/><rect x="221.1" y="694.8" width="1.4" height="2.5" fill="#000"/><rect x="217.8" y="679.0" width="1.7" height="2.4" fill="#004364"/><rect x="206.4" y="716.5" width="1.7" height="1.3" fill="#004364"/><rect x="223.0" y="745.3" width="1.1" height="1.3" fill="#004364"/><rect x="219.5" y="750.0" width="1.8" height="1.0" fill="#004364"/><rect x="201.5" y="737.9" width="1.6" height="2.3" fill="#5c4f4a"/><rect x="204.0" y="735.8" width="1.8" height="1.2" fill="#5c4f4a"/><rect x="206.5" y="697.2" width="1.1" height="1.1" fill="#004364"/><rect x="194.7" y="723.6" width="2.5" height="2.0" fill="#000"/><rect x="218.6" y="678.6" width="2.0" height="1.4" fill="#004364"/><rect x="196.6" y="735.0" width="2.5" height="1.1" fill="#5c4f4a"/><rect x="218.3" y="746.6" width="2.4" height="2.4" fill="#004364"/><rect x="209.0" y="699.1" width="1.3" height="2.6" fill="#000"/><rect x="196.9" y="738.2" width="2.9" height="1.2" fill="#004364"/><rect x="216.4" y="704.6" width="1.5" height="3.0" fill="#5c4f4a"/><rect x="202.5" y="722.4" width="1.7" height="1.3" fill="#004364"/><rect x="212.6" y="706.4" width="1.6" height="2.6" fill="#000"/><rect x="221.7" y="686.4" width="1.7" height="1.2" fill="#004364"/><rect x="196.3" y="724.1" width="2.0" height="1.4" fill="#004364"/><rect x="210.7" y="693.6" width="1.5" height="2.9" fill="#5c4f4a"/><rect x="215.6" y="740.5" width="2.4" height="1.4" fill="#000"/><rect x="210.7" y="684.4" width="2.0" height="1.5" fill="#004364"/><rect x="197.8" y="706.3" width="1.2" height="1.1" fill="#004364"/><rect x="232.4" y="752.9" width="1.3" height="2.0" fill="#004364"/><rect x="228.3" y="752.5" width="2.1" height="1.8" fill="#004364"/><rect x="218.3" y="695.5" width="1.8" height="1.3" fill="#004364"/><rect x="207.8" y="694.6" width="2.6" height="2.9" fill="#004364"/><rect x="199.1" y="724.3" width="2.0" height="1.9" fill="#004364"/><rect x="202.9" y="741.0" width="1.2" height="2.3" fill="#000"/><rect x="217.0" y="740.9" width="1.0" height="2.7" fill="#000"/><rect x="204.5" y="709.7" width="2.2" height="3.0" fill="#5c4f4a"/><rect x="215.8" y="697.9" width="2.9" height="1.5" fill="#5c4f4a"/><rect x="207.5" y="686.3" width="1.5" height="1.7" fill="#5c4f4a"/><rect x="198.0" y="731.4" width="1.1" height="1.8" fill="#000"/><rect x="196.7" y="720.3" width="1.1" height="1.5" fill="#000"/><rect x="205.5" y="686.4" width="2.0" height="1.6" fill="#5c4f4a"/><rect x="200.9" y="713.9" width="1.6" height="2.6" fill="#004364"/><rect x="232.2" y="756.3" width="2.3" height="1.2" fill="#000"/><rect x="222.9" y="695.1" width="1.4" height="2.0" fill="#004364"/><rect x="237.4" y="758.8" width="1.4" height="2.9" fill="#004364"/><rect x="232.0" y="758.8" width="2.1" height="2.3" fill="#004364"/><rect x="203.9" y="728.9" width="2.3" height="2.8" fill="#004364"/><rect x="234.5" y="757.2" width="2.5" height="1.8" fill="#5c4f4a"/><rect x="207.5" y="694.9" width="1.2" height="2.5" fill="#000"/><rect x="199.0" y="717.2" width="2.7" height="1.8" fill="#5c4f4a"/><rect x="200.2" y="704.9" width="2.8" height="3.0" fill="#004364"/><rect x="207.7" y="678.5" width="1.1" height="2.2" fill="#004364"/><rect x="234.4" y="754.7" width="1.9" height="2.2" fill="#004364"/><rect x="206.5" y="686.8" width="2.2" height="2.7" fill="#5c4f4a"/><rect x="193.4" y="726.2" width="2.6" height="1.7" fill="#000"/><rect x="219.9" y="683.8" width="2.1" height="1.0" fill="#5c4f4a"/><rect x="207.5" y="705.7" width="2.1" height="2.3" fill="#004364"/><rect x="216.0" y="743.7" width="1.0" height="1.3" fill="#5c4f4a"/><rect x="208.8" y="686.6" width="2.2" height="2.2" fill="#000"/><rect x="206.5" y="717.7" width="2.6" height="3.0" fill="#5c4f4a"/><rect x="221.7" y="677.2" width="1.1" height="2.3" fill="#5c4f4a"/><rect x="204.8" y="741.6" width="1.2" height="2.4" fill="#5c4f4a"/><rect x="211.5" y="684.9" width="2.1" height="2.3" fill="#004364"/><rect x="201.0" y="697.8" width="2.0" height="2.5" fill="#5c4f4a"/><rect x="200.6" y="720.8" width="2.1" height="1.7" fill="#5c4f4a"/><rect x="213.0" y="705.3" width="2.5" height="1.1" fill="#5c4f4a"/><rect x="211.7" y="688.1" width="2.1" height="2.4" fill="#000"/><rect x="202.1" y="724.5" width="2.9" height="2.0" fill="#5c4f4a"/><rect x="213.8" y="741.2" width="1.7" height="1.9" fill="#5c4f4a"/><rect x="217.5" y="692.0" width="1.6" height="2.0" fill="#5c4f4a"/><rect x="193.8" y="725.1" width="1.4" height="2.2" fill="#000"/><rect x="222.2" y="746.7" width="2.7" height="2.2" fill="#5c4f4a"/><rect x="214.5" y="745.6" width="2.4" height="2.0" fill="#000"/><rect x="221.6" y="696.3" width="1.6" height="2.2" fill="#004364"/><rect x="200.9" y="714.9" width="1.7" height="3.0" fill="#004364"/><rect x="210.0" y="711.6" width="2.3" height="1.7" fill="#004364"/><rect x="203.3" y="720.5" width="1.1" height="1.8" fill="#5c4f4a"/><rect x="230.9" y="748.9" width="1.4" height="1.2" fill="#004364"/><rect x="224.9" y="744.6" width="1.1" height="2.6" fill="#5c4f4a"/><rect x="226.4" y="689.7" width="2.5" height="2.0" fill="#5c4f4a"/><rect x="205.7" y="706.5" width="2.9" height="2.9" fill="#004364"/><rect x="202.5" y="693.3" width="2.4" height="1.8" fill="#004364"/><rect x="213.1" y="688.7" width="1.3" height="3.0" fill="#000"/><rect x="218.8" y="749.2" width="2.0" height="1.6" fill="#004364"/><rect x="220.3" y="699.1" width="2.1" height="1.6" fill="#004364"/><rect x="223.2" y="683.9" width="1.4" height="2.2" fill="#5c4f4a"/><rect x="212.7" y="741.5" width="1.1" height="2.2" fill="#004364"/><rect x="228.0" y="747.3" width="1.1" height="1.0" fill="#5c4f4a"/><rect x="200.4" y="699.4" width="2.1" height="1.5" fill="#004364"/><rect x="199.5" y="707.7" width="1.1" height="2.9" fill="#000"/><rect x="196.2" y="722.4" width="2.0" height="1.2" fill="#004364"/><rect x="231.3" y="749.5" width="1.3" height="2.7" fill="#004364"/><rect x="202.0" y="738.3" width="2.9" height="1.1" fill="#004364"/><rect x="213.0" y="742.2" width="2.3" height="1.2" fill="#004364"/><rect x="228.6" y="754.7" width="2.4" height="2.1" fill="#004364"/><rect x="208.6" y="739.7" width="2.8" height="2.7" fill="#000"/><rect x="212.2" y="695.0" width="2.7" height="2.8" fill="#004364"/><rect x="221.5" y="683.8" width="1.1" height="2.6" fill="#5c4f4a"/><rect x="209.3" y="713.2" width="1.7" height="1.8" fill="#000"/><rect x="205.7" y="700.0" width="1.3" height="2.1" fill="#004364"/><rect x="198.7" y="729.5" width="1.3" height="1.3" fill="#5c4f4a"/><rect x="202.2" y="729.5" width="1.3" height="2.7" fill="#5c4f4a"/><rect x="208.4" y="712.7" width="1.2" height="1.3" fill="#5c4f4a"/><rect x="216.4" y="748.8" width="2.7" height="2.6" fill="#5c4f4a"/><rect x="207.8" y="684.4" width="2.9" height="1.1" fill="#5c4f4a"/><rect x="219.3" y="695.0" width="2.5" height="1.5" fill="#5c4f4a"/><rect x="226.3" y="674.6" width="1.2" height="1.3" fill="#5c4f4a"/><rect x="216.3" y="696.9" width="1.3" height="1.2" fill="#000"/><rect x="216.6" y="689.7" width="2.7" height="1.4" fill="#004364"/><rect x="204.4" y="693.7" width="1.3" height="2.5" fill="#004364"/><rect x="198.5" y="705.2" width="1.1" height="1.7" fill="#004364"/><rect x="225.3" y="748.6" width="1.2" height="2.3" fill="#004364"/><rect x="221.3" y="688.2" width="2.4" height="2.7" fill="#004364"/><rect x="218.7" y="751.5" width="2.7" height="2.0" fill="#5c4f4a"/><rect x="206.6" y="737.8" width="2.1" height="3.0" fill="#5c4f4a"/><rect x="224.2" y="747.9" width="1.0" height="1.4" fill="#5c4f4a"/><rect x="201.7" y="696.6" width="2.6" height="2.7" fill="#000"/><rect x="196.0" y="711.0" width="2.2" height="1.6" fill="#000"/><rect x="208.3" y="708.1" width="2.0" height="2.1" fill="#004364"/><rect x="233.3" y="757.5" width="1.5" height="2.5" fill="#004364"/><rect x="215.2" y="702.1" width="2.0" height="1.3" fill="#000"/><rect x="210.7" y="707.2" width="2.4" height="2.7" fill="#000"/><rect x="198.6" y="724.6" width="1.1" height="2.5" fill="#5c4f4a"/><rect x="208.6" y="687.9" width="1.9" height="2.7" fill="#5c4f4a"/><rect x="199.0" y="716.2" width="1.0" height="1.5" fill="#004364"/><rect x="213.1" y="688.1" width="1.4" height="1.8" fill="#000"/><rect x="198.8" y="726.9" width="2.9" height="2.2" fill="#004364"/><rect x="204.7" y="687.3" width="1.0" height="3.0" fill="#004364"/><rect x="216.7" y="689.4" width="2.8" height="1.9" fill="#000"/><rect x="208.9" y="691.8" width="1.2" height="1.2" fill="#000"/><rect x="197.1" y="708.2" width="2.0" height="2.0" fill="#004364"/><rect x="205.1" y="704.0" width="2.5" height="2.7" fill="#5c4f4a"/><rect x="199.4" y="740.7" width="2.1" height="2.6" fill="#004364"/><rect x="213.2" y="701.4" width="1.7" height="2.5" fill="#000"/><rect x="216.4" y="688.1" width="2.1" height="1.9" fill="#000"/><rect x="216.3" y="701.5" width="1.7" height="1.3" fill="#004364"/><rect x="201.2" y="713.0" width="2.8" height="1.2" fill="#004364"/><rect x="225.2" y="754.4" width="1.7" height="2.2" fill="#000"/><rect x="232.8" y="752.1" width="1.3" height="2.1" fill="#004364"/><rect x="222.2" y="679.3" width="1.8" height="1.1" fill="#5c4f4a"/><rect x="205.0" y="693.3" width="1.8" height="2.4" fill="#004364"/><rect x="208.3" y="743.5" width="2.9" height="1.2" fill="#004364"/><rect x="220.4" y="685.2" width="1.3" height="1.7" fill="#5c4f4a"/><rect x="220.9" y="675.8" width="2.6" height="1.5" fill="#000"/><rect x="220.8" y="676.9" width="2.3" height="1.3" fill="#000"/><rect x="219.4" y="686.3" width="1.7" height="1.3" fill="#5c4f4a"/><rect x="203.9" y="718.6" width="1.1" height="1.2" fill="#004364"/><rect x="215.1" y="698.1" width="1.9" height="2.3" fill="#000"/><rect x="211.4" y="705.7" width="2.1" height="1.4" fill="#004364"/><rect x="202.5" y="707.8" width="2.6" height="1.9" fill="#004364"/><rect x="212.4" y="741.6" width="1.8" height="2.7" fill="#5c4f4a"/><rect x="220.4" y="678.1" width="1.9" height="2.4" fill="#5c4f4a"/><rect x="214.6" y="676.3" width="1.1" height="2.6" fill="#000"/><rect x="194.8" y="720.8" width="2.0" height="1.3" fill="#000"/><rect x="193.5" y="724.9" width="2.7" height="1.7" fill="#004364"/><rect x="200.2" y="733.3" width="2.2" height="1.0" fill="#000"/><rect x="210.4" y="677.5" width="2.2" height="1.6" fill="#000"/><rect x="212.8" y="697.1" width="3.0" height="1.6" fill="#000"/><rect x="213.0" y="678.7" width="2.0" height="2.5" fill="#000"/><rect x="181.8" y="738.2" width="2.3" height="1.6" fill="#004364"/><rect x="150.6" y="712.3" width="2.4" height="3.0" fill="#004364"/><rect x="159.7" y="737.8" width="3.0" height="2.9" fill="#004364"/><rect x="186.8" y="729.6" width="2.8" height="2.7" fill="#000"/><rect x="163.2" y="722.8" width="1.8" height="2.8" fill="#004364"/><rect x="148.2" y="717.6" width="1.5" height="1.4" fill="#000"/><rect x="146.8" y="729.9" width="3.0" height="2.3" fill="#000"/><rect x="160.7" y="730.4" width="2.8" height="1.7" fill="#004364"/><rect x="177.7" y="737.5" width="1.9" height="2.1" fill="#000"/><rect x="154.0" y="729.4" width="2.0" height="2.6" fill="#004364"/><rect x="163.1" y="732.0" width="2.8" height="2.4" fill="#000"/><rect x="180.7" y="741.9" width="2.8" height="2.2" fill="#000"/><rect x="155.5" y="746.4" width="2.4" height="2.0" fill="#004364"/><rect x="165.4" y="733.8" width="1.8" height="2.5" fill="#000"/><rect x="181.0" y="737.9" width="2.8" height="1.4" fill="#004364"/><rect x="145.3" y="732.3" width="1.1" height="2.2" fill="#004364"/><rect x="166.1" y="742.6" width="1.5" height="1.4" fill="#000"/><rect x="161.1" y="737.5" width="1.1" height="1.7" fill="#000"/><rect x="142.0" y="745.0" width="1.7" height="1.3" fill="#000"/><rect x="176.7" y="730.4" width="1.0" height="2.2" fill="#000"/><rect x="157.2" y="733.8" width="2.5" height="1.2" fill="#000"/><rect x="164.4" y="722.4" width="2.1" height="2.2" fill="#000"/><rect x="185.1" y="739.0" width="2.7" height="2.4" fill="#000"/><rect x="174.4" y="742.0" width="1.0" height="2.6" fill="#000"/><rect x="165.9" y="739.9" width="2.0" height="1.7" fill="#000"/><rect x="153.0" y="733.4" width="1.8" height="1.0" fill="#004364"/><rect x="187.9" y="735.8" width="1.5" height="1.3" fill="#000"/><rect x="144.8" y="734.5" width="2.0" height="3.0" fill="#000"/><rect x="162.2" y="720.3" width="2.2" height="2.2" fill="#004364"/><rect x="175.5" y="720.5" width="1.8" height="2.1" fill="#000"/><rect x="147.6" y="725.2" width="1.3" height="2.0" fill="#000"/><rect x="152.0" y="714.7" width="1.4" height="1.5" fill="#000"/><rect x="162.7" y="730.8" width="1.8" height="2.4" fill="#000"/><rect x="176.4" y="727.0" width="2.0" height="2.2" fill="#000"/><rect x="173.2" y="728.8" width="1.0" height="2.9" fill="#000"/><rect x="170.5" y="721.7" width="3.0" height="1.7" fill="#000"/><rect x="183.7" y="726.3" width="1.2" height="1.4" fill="#004364"/><rect x="181.3" y="741.0" width="1.1" height="2.3" fill="#000"/><rect x="150.4" y="732.8" width="1.1" height="1.6" fill="#000"/><rect x="155.3" y="737.8" width="1.4" height="2.0" fill="#000"/><rect x="168.6" y="725.5" width="1.9" height="2.5" fill="#000"/><rect x="146.1" y="733.8" width="1.7" height="1.8" fill="#000"/><rect x="173.0" y="739.8" width="2.4" height="2.0" fill="#000"/><rect x="158.7" y="728.9" width="2.7" height="2.4" fill="#004364"/><rect x="181.8" y="722.0" width="1.5" height="2.0" fill="#000"/><rect x="167.4" y="736.7" width="2.4" height="1.2" fill="#004364"/><rect x="147.3" y="726.4" width="1.1" height="1.2" fill="#004364"/><rect x="189.4" y="735.0" width="1.3" height="1.6" fill="#000"/><rect x="175.4" y="743.8" width="1.7" height="1.3" fill="#000"/><rect x="145.6" y="731.0" width="2.9" height="2.5" fill="#000"/><rect x="156.4" y="720.2" width="2.0" height="1.3" fill="#000"/><rect x="163.0" y="737.0" width="1.8" height="3.0" fill="#004364"/><rect x="176.4" y="728.3" width="2.4" height="2.6" fill="#000"/><rect x="165.5" y="728.9" width="1.8" height="2.4" fill="#000"/><rect x="175.3" y="728.5" width="2.9" height="1.7" fill="#004364"/><rect x="181.0" y="737.9" width="2.1" height="1.4" fill="#004364"/><rect x="159.1" y="743.6" width="2.8" height="1.6" fill="#004364"/><rect x="175.6" y="743.7" width="2.3" height="2.6" fill="#000"/><rect x="160.1" y="719.0" width="2.1" height="1.8" fill="#000"/><rect x="180.8" y="739.4" width="1.4" height="2.5" fill="#004364"/><rect x="169.0" y="729.1" width="2.2" height="1.0" fill="#004364"/><rect x="161.7" y="720.4" width="2.1" height="1.9" fill="#000"/><rect x="157.5" y="744.5" width="2.1" height="2.3" fill="#000"/><rect x="177.7" y="728.9" width="2.3" height="1.7" fill="#000"/><rect x="183.9" y="728.0" width="3.0" height="2.2" fill="#000"/><rect x="148.7" y="738.8" width="2.6" height="1.8" fill="#004364"/><rect x="171.3" y="741.8" width="2.4" height="1.1" fill="#000"/><rect x="159.1" y="728.2" width="1.6" height="1.0" fill="#004364"/><rect x="141.7" y="742.5" width="2.1" height="1.4" fill="#004364"/><rect x="155.4" y="735.0" width="2.0" height="2.1" fill="#000"/><rect x="143.8" y="741.5" width="1.6" height="2.3" fill="#000"/><rect x="172.7" y="725.5" width="2.7" height="1.2" fill="#004364"/><rect x="150.5" y="733.1" width="2.7" height="1.3" fill="#004364"/><rect x="171.4" y="722.4" width="1.5" height="1.9" fill="#000"/><rect x="145.6" y="736.0" width="2.6" height="2.7" fill="#000"/><rect x="155.9" y="713.9" width="1.9" height="1.3" fill="#000"/><rect x="183.5" y="728.1" width="1.3" height="2.4" fill="#004364"/><rect x="150.8" y="721.1" width="1.3" height="2.8" fill="#000"/><rect x="149.5" y="736.1" width="1.7" height="1.7" fill="#000"/><rect x="151.7" y="740.9" width="2.3" height="1.8" fill="#004364"/><rect x="157.1" y="743.5" width="2.9" height="2.0" fill="#004364"/><rect x="176.6" y="722.9" width="1.8" height="2.4" fill="#004364"/><rect x="171.1" y="735.8" width="1.7" height="1.8" fill="#000"/><rect x="152.9" y="744.3" width="1.9" height="1.2" fill="#000"/><rect x="155.7" y="725.0" width="2.9" height="1.2" fill="#000"/><rect x="158.0" y="745.0" width="2.8" height="2.5" fill="#000"/><rect x="181.3" y="733.0" width="2.1" height="1.9" fill="#000"/><rect x="158.0" y="718.5" width="2.0" height="2.9" fill="#000"/><rect x="156.6" y="716.2" width="1.7" height="1.2" fill="#000"/><rect x="152.3" y="719.9" width="2.2" height="1.7" fill="#000"/><rect x="172.4" y="733.6" width="2.7" height="1.4" fill="#000"/><rect x="161.5" y="739.8" width="1.3" height="2.0" fill="#000"/><rect x="156.9" y="739.4" width="2.2" height="1.8" fill="#000"/><rect x="159.6" y="728.5" width="2.2" height="1.6" fill="#004364"/><rect x="169.9" y="732.8" width="2.1" height="3.0" fill="#000"/><rect x="182.0" y="727.8" width="1.8" height="2.0" fill="#000"/><rect x="183.9" y="727.7" width="2.2" height="1.2" fill="#004364"/><rect x="165.0" y="717.5" width="1.8" height="1.9" fill="#004364"/><rect x="157.5" y="717.4" width="1.3" height="2.3" fill="#000"/><rect x="156.8" y="741.3" width="1.9" height="2.7" fill="#000"/><rect x="152.1" y="728.8" width="2.1" height="1.3" fill="#004364"/><rect x="180.7" y="723.5" width="2.1" height="1.5" fill="#000"/><rect x="164.6" y="715.9" width="1.2" height="1.2" fill="#000"/><rect x="179.9" y="733.8" width="2.3" height="1.7" fill="#004364"/><rect x="175.9" y="729.8" width="2.8" height="1.3" fill="#000"/><rect x="150.1" y="723.6" width="1.3" height="1.3" fill="#000"/><rect x="179.9" y="741.0" width="2.1" height="1.9" fill="#000"/><rect x="166.4" y="729.1" width="1.6" height="1.8" fill="#000"/><rect x="175.0" y="735.4" width="1.1" height="2.1" fill="#000"/><rect x="150.6" y="725.5" width="1.1" height="1.3" fill="#000"/><rect x="177.1" y="737.0" width="2.0" height="1.1" fill="#000"/><rect x="181.8" y="733.1" width="1.1" height="1.4" fill="#000"/><rect x="147.0" y="736.7" width="2.8" height="2.5" fill="#000"/><rect x="163.2" y="721.8" width="1.4" height="2.6" fill="#004364"/><rect x="181.0" y="742.4" width="2.0" height="1.1" fill="#000"/><rect x="154.9" y="742.9" width="2.3" height="2.5" fill="#000"/><rect x="150.7" y="723.3" width="2.1" height="1.8" fill="#004364"/><rect x="177.4" y="744.0" width="1.9" height="1.3" fill="#000"/><rect x="179.3" y="727.6" width="1.9" height="1.7" fill="#000"/><rect x="170.6" y="733.8" width="2.2" height="1.9" fill="#000"/><rect x="182.5" y="723.5" width="1.1" height="1.7" fill="#004364"/><rect x="170.8" y="735.4" width="2.8" height="2.4" fill="#000"/><rect x="183.5" y="730.8" width="2.6" height="1.2" fill="#000"/><rect x="149.9" y="722.6" width="1.6" height="1.5" fill="#004364"/><rect x="173.2" y="741.4" width="1.1" height="1.9" fill="#004364"/><rect x="170.3" y="724.9" width="1.1" height="2.2" fill="#000"/><rect x="172.3" y="729.3" width="2.6" height="2.8" fill="#000"/><rect x="168.2" y="742.4" width="2.7" height="1.5" fill="#004364"/><rect x="175.2" y="743.3" width="2.2" height="2.4" fill="#004364"/><rect x="160.3" y="734.8" width="2.1" height="1.5" fill="#000"/><rect x="146.9" y="734.0" width="1.8" height="1.9" fill="#000"/><rect x="159.6" y="728.6" width="1.8" height="1.4" fill="#000"/><rect x="142.7" y="730.4" width="2.8" height="2.2" fill="#004364"/><rect x="175.4" y="725.9" width="2.0" height="1.2" fill="#004364"/><rect x="158.1" y="745.9" width="2.0" height="1.1" fill="#000"/><rect x="176.7" y="719.2" width="1.0" height="2.0" fill="#000"/><rect x="172.4" y="718.6" width="1.5" height="1.1" fill="#000"/><rect x="145.1" y="731.6" width="1.2" height="2.3" fill="#000"/><rect x="165.6" y="720.9" width="1.1" height="2.1" fill="#000"/><rect x="158.0" y="733.5" width="1.7" height="2.6" fill="#004364"/><rect x="153.8" y="728.7" width="1.6" height="2.2" fill="#000"/><rect x="175.8" y="742.9" width="1.2" height="2.1" fill="#004364"/><rect x="178.5" y="726.9" width="1.5" height="1.4" fill="#004364"/><rect x="142.2" y="732.9" width="2.9" height="2.7" fill="#004364"/><rect x="149.1" y="711.7" width="2.7" height="2.9" fill="#004364"/><rect x="179.4" y="744.1" width="1.8" height="2.8" fill="#000"/><rect x="152.1" y="731.4" width="1.2" height="2.4" fill="#000"/><rect x="165.0" y="721.4" width="2.3" height="1.1" fill="#004364"/><rect x="161.4" y="740.0" width="1.3" height="1.3" fill="#004364"/><rect x="168.6" y="730.1" width="1.9" height="1.9" fill="#004364"/><rect x="162.3" y="729.3" width="3.0" height="2.7" fill="#000"/><rect x="188.9" y="734.6" width="2.1" height="1.5" fill="#000"/><rect x="163.5" y="718.0" width="1.9" height="2.5" fill="#000"/><rect x="181.1" y="734.0" width="1.1" height="1.6" fill="#000"/><rect x="168.4" y="736.4" width="1.5" height="2.4" fill="#000"/><rect x="166.1" y="733.9" width="2.8" height="1.5" fill="#004364"/><rect x="148.0" y="721.7" width="2.9" height="1.7" fill="#000"/><rect x="165.3" y="744.2" width="2.5" height="2.3" fill="#000"/><rect x="145.9" y="733.1" width="2.2" height="1.9" fill="#004364"/><rect x="170.8" y="739.3" width="2.4" height="1.7" fill="#004364"/><rect x="157.4" y="716.4" width="2.3" height="2.3" fill="#000"/><rect x="162.6" y="737.2" width="2.4" height="1.3" fill="#000"/><rect x="185.6" y="732.1" width="1.8" height="2.3" fill="#000"/><rect x="173.5" y="735.7" width="1.8" height="1.1" fill="#000"/><rect x="181.9" y="722.9" width="1.6" height="1.8" fill="#004364"/><rect x="181.7" y="723.0" width="1.2" height="2.2" fill="#000"/><rect x="171.0" y="719.7" width="2.8" height="2.2" fill="#000"/><rect x="156.5" y="728.7" width="2.8" height="2.9" fill="#000"/><rect x="171.9" y="732.3" width="1.4" height="2.2" fill="#000"/><rect x="156.7" y="739.9" width="1.8" height="2.2" fill="#000"/><rect x="163.3" y="721.3" width="2.0" height="2.1" fill="#000"/><rect x="158.1" y="724.8" width="2.6" height="2.8" fill="#004364"/><rect x="180.6" y="737.7" width="1.4" height="2.2" fill="#000"/><rect x="159.9" y="720.8" width="1.4" height="2.7" fill="#000"/><rect x="160.3" y="728.5" width="1.7" height="1.4" fill="#000"/><rect x="176.3" y="733.5" width="1.4" height="2.0" fill="#000"/><rect x="150.5" y="737.0" width="1.0" height="1.2" fill="#004364"/><rect x="149.8" y="717.8" width="1.8" height="2.7" fill="#000"/><rect x="158.0" y="715.3" width="1.1" height="1.7" fill="#000"/><rect x="146.1" y="746.5" width="1.4" height="2.6" fill="#000"/><rect x="185.5" y="734.7" width="1.5" height="2.7" fill="#004364"/><rect x="143.7" y="740.9" width="2.1" height="2.6" fill="#000"/><rect x="185.8" y="731.2" width="2.1" height="1.2" fill="#000"/><rect x="149.3" y="722.4" width="2.9" height="2.7" fill="#004364"/><rect x="156.9" y="740.0" width="1.3" height="1.5" fill="#004364"/><rect x="157.5" y="722.3" width="2.4" height="1.2" fill="#000"/><rect x="147.8" y="745.1" width="1.1" height="1.2" fill="#000"/><rect x="158.7" y="713.7" width="2.6" height="2.7" fill="#004364"/><rect x="170.7" y="724.0" width="2.9" height="2.5" fill="#000"/><rect x="155.5" y="739.2" width="2.5" height="1.7" fill="#000"/><rect x="176.0" y="742.9" width="2.5" height="1.3" fill="#004364"/><rect x="164.7" y="726.4" width="1.7" height="2.3" fill="#000"/><rect x="143.2" y="734.1" width="2.9" height="1.2" fill="#000"/><rect x="184.9" y="724.0" width="2.7" height="1.3" fill="#000"/><rect x="178.8" y="736.1" width="2.8" height="1.3" fill="#000"/><rect x="168.6" y="739.8" width="1.5" height="1.7" fill="#000"/><rect x="183.8" y="735.7" width="1.4" height="2.3" fill="#000"/><rect x="181.7" y="723.4" width="2.9" height="2.3" fill="#000"/><rect x="186.2" y="730.5" width="1.2" height="2.7" fill="#000"/><rect x="174.2" y="725.0" width="1.8" height="2.5" fill="#000"/><rect x="171.7" y="733.8" width="2.4" height="1.2" fill="#004364"/><rect x="181.7" y="737.7" width="1.4" height="2.3" fill="#004364"/><rect x="151.9" y="736.1" width="2.3" height="1.9" fill="#000"/><rect x="151.6" y="723.7" width="1.8" height="2.1" fill="#004364"/><rect x="180.6" y="724.1" width="1.5" height="1.8" fill="#000"/><rect x="147.0" y="746.5" width="2.9" height="2.7" fill="#000"/><rect x="172.2" y="739.3" width="1.9" height="1.2" fill="#000"/><rect x="174.5" y="741.9" width="1.4" height="1.0" fill="#000"/><rect x="180.9" y="742.4" width="1.3" height="2.7" fill="#000"/><rect x="168.1" y="729.4" width="2.7" height="1.8" fill="#000"/><rect x="180.3" y="721.9" width="2.2" height="2.1" fill="#004364"/><rect x="174.4" y="731.0" width="2.1" height="1.5" fill="#000"/><rect x="184.3" y="728.0" width="1.2" height="2.7" fill="#004364"/><rect x="167.1" y="730.4" width="1.6" height="2.9" fill="#000"/><rect x="180.7" y="738.2" width="3.0" height="1.9" fill="#004364"/><rect x="184.5" y="729.8" width="2.8" height="1.3" fill="#000"/><rect x="155.4" y="727.9" width="2.5" height="1.2" fill="#000"/><rect x="174.0" y="719.1" width="2.6" height="1.1" fill="#004364"/><rect x="178.2" y="719.6" width="1.3" height="1.8" fill="#000"/><rect x="168.7" y="741.5" width="2.0" height="1.5" fill="#000"/><rect x="170.3" y="716.9" width="2.3" height="2.9" fill="#004364"/><rect x="156.2" y="721.8" width="2.9" height="2.3" fill="#000"/><rect x="156.8" y="727.5" width="1.4" height="1.5" fill="#004364"/><rect x="162.2" y="736.0" width="2.8" height="1.1" fill="#000"/><rect x="149.2" y="736.5" width="2.0" height="1.8" fill="#000"/><rect x="166.6" y="716.7" width="1.1" height="1.4" fill="#004364"/><rect x="172.6" y="739.1" width="2.0" height="2.9" fill="#004364"/><rect x="174.4" y="723.2" width="2.7" height="1.2" fill="#000"/><rect x="176.0" y="742.3" width="2.5" height="2.8" fill="#000"/><rect x="147.7" y="721.9" width="1.2" height="2.3" fill="#000"/><rect x="145.3" y="735.6" width="2.3" height="2.3" fill="#000"/><rect x="148.2" y="733.9" width="1.9" height="2.7" fill="#004364"/><rect x="153.8" y="719.9" width="1.5" height="1.4" fill="#004364"/><rect x="151.8" y="741.5" width="2.2" height="2.6" fill="#000"/><rect x="187.8" y="732.6" width="2.3" height="1.6" fill="#004364"/><rect x="144.2" y="735.0" width="2.3" height="2.1" fill="#000"/><rect x="174.6" y="718.8" width="1.8" height="1.0" fill="#000"/><rect x="180.9" y="731.9" width="2.3" height="1.6" fill="#000"/><rect x="155.5" y="714.3" width="1.9" height="2.3" fill="#004364"/><rect x="168.3" y="721.6" width="2.8" height="1.8" fill="#004364"/><rect x="161.3" y="734.9" width="1.2" height="2.1" fill="#004364"/><rect x="164.0" y="730.3" width="1.3" height="2.9" fill="#000"/><rect x="156.9" y="722.4" width="1.3" height="2.2" fill="#000"/><rect x="176.5" y="741.7" width="1.0" height="1.4" fill="#000"/><rect x="178.0" y="718.6" width="2.7" height="1.1" fill="#000"/><rect x="159.3" y="726.4" width="2.9" height="1.8" fill="#004364"/><rect x="175.7" y="730.2" width="2.1" height="1.5" fill="#000"/><rect x="178.5" y="722.2" width="2.5" height="1.2" fill="#004364"/><rect x="173.4" y="744.5" width="2.6" height="1.9" fill="#000"/><rect x="172.2" y="732.7" width="2.7" height="2.9" fill="#004364"/><rect x="156.6" y="713.7" width="2.8" height="1.6" fill="#000"/><rect x="148.4" y="718.2" width="1.8" height="2.7" fill="#000"/><rect x="171.1" y="743.3" width="1.8" height="2.2" fill="#000"/><rect x="149.9" y="729.1" width="1.2" height="1.8" fill="#000"/><rect x="174.6" y="719.8" width="2.1" height="2.1" fill="#000"/><rect x="179.1" y="741.0" width="2.9" height="1.5" fill="#000"/><rect x="154.4" y="738.7" width="2.8" height="3.0" fill="#004364"/><rect x="148.2" y="736.5" width="2.7" height="2.5" fill="#000"/><rect x="166.8" y="715.7" width="2.8" height="2.2" fill="#000"/><rect x="150.3" y="741.5" width="2.8" height="1.5" fill="#000"/><rect x="92.1" y="749.4" width="2.8" height="2.6" fill="#000"/><rect x="101.8" y="752.3" width="1.6" height="1.3" fill="#000"/><rect x="104.2" y="760.8" width="1.1" height="2.3" fill="#004364"/><rect x="107.2" y="754.2" width="2.5" height="2.7" fill="#004364"/><rect x="93.4" y="753.7" width="2.3" height="2.0" fill="#000"/><rect x="103.3" y="746.9" width="2.9" height="2.6" fill="#004364"/><rect x="131.7" y="747.5" width="2.5" height="1.4" fill="#5c4f4a"/><rect x="125.1" y="750.1" width="1.3" height="1.6" fill="#000"/><rect x="93.0" y="750.7" width="3.0" height="2.0" fill="#5c4f4a"/><rect x="131.5" y="744.0" width="2.3" height="1.1" fill="#000"/><rect x="127.4" y="750.3" width="1.4" height="1.9" fill="#004364"/><rect x="127.3" y="745.2" width="1.6" height="2.7" fill="#000"/><rect x="105.2" y="753.2" width="2.7" height="1.2" fill="#000"/><rect x="129.9" y="747.9" width="1.6" height="1.6" fill="#000"/><rect x="136.1" y="749.6" width="2.9" height="2.2" fill="#000"/><rect x="106.2" y="745.0" width="1.9" height="1.3" fill="#5c4f4a"/><rect x="125.1" y="744.3" width="2.1" height="1.7" fill="#5c4f4a"/><rect x="98.5" y="757.5" width="1.7" height="1.6" fill="#000"/><rect x="91.9" y="756.5" width="2.2" height="2.9" fill="#000"/><rect x="121.9" y="753.2" width="1.6" height="1.1" fill="#004364"/><rect x="136.0" y="749.6" width="3.0" height="2.0" fill="#000"/><rect x="115.2" y="751.3" width="1.4" height="1.9" fill="#5c4f4a"/><rect x="139.5" y="751.5" width="1.1" height="1.5" fill="#000"/><rect x="120.6" y="757.2" width="1.8" height="1.5" fill="#004364"/><rect x="91.2" y="760.5" width="2.1" height="3.0" fill="#5c4f4a"/><rect x="147.7" y="754.7" width="2.7" height="2.4" fill="#000"/><rect x="101.1" y="759.3" width="2.8" height="2.8" fill="#004364"/><rect x="106.4" y="750.9" width="2.8" height="1.6" fill="#5c4f4a"/><rect x="120.7" y="754.7" width="2.4" height="1.5" fill="#5c4f4a"/><rect x="148.2" y="761.2" width="2.3" height="1.1" fill="#000"/><rect x="135.5" y="746.7" width="2.7" height="2.7" fill="#5c4f4a"/><rect x="123.3" y="756.7" width="2.9" height="1.4" fill="#000"/><rect x="101.1" y="744.3" width="2.2" height="1.5" fill="#5c4f4a"/><rect x="138.2" y="757.4" width="2.8" height="2.1" fill="#000"/><rect x="98.0" y="753.8" width="2.6" height="2.1" fill="#5c4f4a"/><rect x="144.7" y="750.2" width="1.2" height="2.4" fill="#000"/><rect x="118.3" y="759.2" width="2.2" height="1.3" fill="#004364"/><rect x="92.9" y="759.5" width="2.8" height="1.6" fill="#004364"/><rect x="121.7" y="749.0" width="2.6" height="1.6" fill="#000"/><rect x="135.0" y="759.0" width="1.8" height="1.2" fill="#004364"/><rect x="119.8" y="750.1" width="2.7" height="2.6" fill="#000"/><rect x="127.0" y="760.8" width="2.3" height="2.9" fill="#5c4f4a"/><rect x="114.2" y="757.8" width="1.3" height="2.7" fill="#000"/><rect x="131.8" y="747.9" width="2.7" height="1.5" fill="#000"/><rect x="107.3" y="752.4" width="2.0" height="2.4" fill="#5c4f4a"/><rect x="120.6" y="751.9" width="1.8" height="1.6" fill="#000"/><rect x="135.5" y="761.7" width="2.3" height="2.4" fill="#004364"/><rect x="121.7" y="760.1" width="2.6" height="2.1" fill="#5c4f4a"/><rect x="126.0" y="750.3" width="1.3" height="2.5" fill="#004364"/><rect x="114.9" y="753.7" width="2.4" height="2.2" fill="#004364"/><rect x="143.9" y="748.8" width="2.2" height="1.7" fill="#000"/><rect x="92.8" y="754.6" width="2.8" height="1.7" fill="#004364"/><rect x="108.3" y="747.3" width="1.0" height="1.0" fill="#000"/><rect x="137.7" y="758.0" width="2.9" height="1.3" fill="#5c4f4a"/><rect x="129.0" y="761.8" width="1.2" height="2.9" fill="#000"/><rect x="98.7" y="751.1" width="2.8" height="1.4" fill="#004364"/><rect x="140.9" y="755.4" width="2.8" height="1.5" fill="#5c4f4a"/><rect x="131.6" y="747.5" width="1.5" height="1.7" fill="#5c4f4a"/><rect x="143.7" y="749.4" width="1.8" height="2.6" fill="#004364"/><rect x="115.2" y="753.4" width="1.5" height="2.8" fill="#5c4f4a"/><rect x="131.0" y="753.9" width="1.7" height="2.9" fill="#000"/><rect x="148.4" y="761.7" width="2.8" height="2.2" fill="#004364"/><rect x="144.4" y="756.9" width="2.0" height="2.3" fill="#5c4f4a"/><rect x="143.3" y="757.3" width="1.3" height="1.5" fill="#004364"/><rect x="112.7" y="753.2" width="2.2" height="2.4" fill="#004364"/><rect x="134.6" y="745.3" width="2.9" height="1.2" fill="#004364"/><rect x="91.8" y="761.8" width="1.6" height="2.8" fill="#000"/><rect x="133.3" y="754.8" width="2.9" height="2.8" fill="#000"/><rect x="122.7" y="755.6" width="2.4" height="2.1" fill="#5c4f4a"/><rect x="97.6" y="758.7" width="2.0" height="1.1" fill="#000"/><rect x="98.1" y="759.7" width="2.0" height="2.1" fill="#004364"/><rect x="141.4" y="747.9" width="1.8" height="1.8" fill="#000"/><rect x="105.3" y="755.2" width="1.6" height="2.6" fill="#000"/><rect x="97.7" y="758.8" width="2.6" height="1.5" fill="#000"/><rect x="117.6" y="756.1" width="1.4" height="2.7" fill="#5c4f4a"/><rect x="120.9" y="744.9" width="1.9" height="2.8" fill="#004364"/><rect x="106.9" y="754.6" width="2.8" height="2.2" fill="#000"/><rect x="123.9" y="757.8" width="2.2" height="2.6" fill="#5c4f4a"/><rect x="126.8" y="748.1" width="2.7" height="2.8" fill="#004364"/><rect x="142.8" y="754.8" width="2.4" height="2.2" fill="#5c4f4a"/><rect x="93.1" y="756.0" width="2.0" height="2.1" fill="#000"/><rect x="90.4" y="755.2" width="1.7" height="2.2" fill="#000"/><rect x="131.2" y="743.5" width="3.0" height="2.7" fill="#000"/><rect x="105.0" y="761.0" width="2.8" height="2.9" fill="#000"/><rect x="110.3" y="759.7" width="2.5" height="2.6" fill="#004364"/><rect x="141.2" y="754.3" width="1.8" height="1.3" fill="#5c4f4a"/><rect x="148.4" y="756.8" width="2.7" height="1.6" fill="#004364"/><rect x="136.9" y="755.8" width="1.9" height="1.3" fill="#000"/><rect x="117.7" y="750.2" width="2.9" height="1.7" fill="#5c4f4a"/><rect x="146.9" y="760.5" width="1.8" height="2.5" fill="#000"/><rect x="103.9" y="751.7" width="1.1" height="1.5" fill="#004364"/><rect x="129.9" y="754.5" width="2.2" height="1.6" fill="#000"/><rect x="126.5" y="755.7" width="2.9" height="1.5" fill="#000"/><rect x="143.2" y="751.5" width="1.2" height="1.7" fill="#5c4f4a"/><rect x="123.3" y="745.3" width="1.2" height="2.0" fill="#000"/><rect x="95.1" y="761.4" width="1.6" height="2.1" fill="#000"/><rect x="135.5" y="744.8" width="1.4" height="1.1" fill="#004364"/><rect x="127.1" y="756.5" width="2.5" height="2.7" fill="#000"/><rect x="98.7" y="745.5" width="2.9" height="2.9" fill="#000"/><rect x="129.7" y="746.5" width="2.8" height="2.3" fill="#5c4f4a"/><rect x="96.5" y="751.1" width="2.1" height="2.1" fill="#004364"/><rect x="114.7" y="749.5" width="1.1" height="2.8" fill="#000"/><rect x="97.5" y="745.6" width="1.5" height="2.1" fill="#000"/><rect x="146.2" y="755.2" width="1.8" height="2.1" fill="#000"/><rect x="109.6" y="761.6" width="1.4" height="1.1" fill="#000"/><rect x="106.4" y="755.5" width="1.6" height="2.1" fill="#000"/><rect x="146.9" y="757.8" width="2.6" height="1.3" fill="#5c4f4a"/><rect x="126.3" y="748.4" width="1.0" height="2.4" fill="#5c4f4a"/><rect x="89.8" y="757.5" width="2.5" height="1.8" fill="#000"/><rect x="108.5" y="753.5" width="1.1" height="1.2" fill="#000"/><rect x="148.4" y="752.1" width="1.4" height="2.2" fill="#004364"/><rect x="125.2" y="756.2" width="1.0" height="1.9" fill="#000"/><rect x="126.5" y="743.8" width="2.2" height="1.5" fill="#004364"/><rect x="121.5" y="748.8" width="2.5" height="2.9" fill="#004364"/><rect x="104.0" y="748.0" width="2.1" height="2.1" fill="#004364"/><rect x="123.4" y="758.9" width="2.0" height="2.7" fill="#000"/><rect x="142.8" y="753.5" width="3.0" height="1.3" fill="#000"/><rect x="125.0" y="742.1" width="2.6" height="2.7" fill="#000"/><rect x="98.9" y="754.1" width="1.6" height="2.8" fill="#004364"/><rect x="101.0" y="750.9" width="1.6" height="2.4" fill="#000"/><rect x="143.1" y="747.0" width="1.8" height="1.0" fill="#004364"/><rect x="92.5" y="750.1" width="1.2" height="1.8" fill="#000"/><rect x="105.6" y="758.8" width="2.9" height="2.6" fill="#000"/><rect x="132.3" y="756.7" width="1.2" height="1.2" fill="#000"/><rect x="147.3" y="751.9" width="2.1" height="1.1" fill="#004364"/><rect x="129.4" y="754.2" width="2.0" height="2.1" fill="#000"/><rect x="92.0" y="750.2" width="1.3" height="1.2" fill="#004364"/><rect x="119.8" y="755.0" width="1.3" height="2.2" fill="#000"/><rect x="127.9" y="757.3" width="2.2" height="2.9" fill="#000"/><rect x="120.5" y="752.3" width="1.5" height="2.2" fill="#000"/><rect x="148.8" y="762.0" width="2.2" height="1.1" fill="#000"/><rect x="104.2" y="753.3" width="2.1" height="2.2" fill="#5c4f4a"/><rect x="98.0" y="761.1" width="2.7" height="2.4" fill="#5c4f4a"/><rect x="126.3" y="746.7" width="2.7" height="1.3" fill="#000"/><rect x="141.5" y="757.7" width="1.7" height="2.7" fill="#000"/><rect x="115.4" y="761.5" width="1.6" height="2.0" fill="#000"/><rect x="128.6" y="752.7" width="1.4" height="1.5" fill="#5c4f4a"/><rect x="112.0" y="754.3" width="2.9" height="1.9" fill="#000"/><rect x="99.5" y="749.5" width="1.8" height="1.3" fill="#000"/><rect x="122.6" y="761.5" width="1.7" height="1.7" fill="#000"/><rect x="88.0" y="748.6" width="2.5" height="2.1" fill="#5c4f4a"/><rect x="109.8" y="753.0" width="2.1" height="1.2" fill="#000"/><rect x="93.4" y="749.1" width="1.4" height="1.1" fill="#004364"/><rect x="115.1" y="748.3" width="2.8" height="1.8" fill="#5c4f4a"/><rect x="129.5" y="759.7" width="1.8" height="2.8" fill="#000"/><rect x="137.5" y="748.2" width="1.8" height="2.0" fill="#000"/><rect x="132.1" y="750.1" width="2.4" height="2.8" fill="#000"/><rect x="142.4" y="754.2" width="2.3" height="1.5" fill="#000"/><rect x="136.1" y="745.9" width="2.0" height="2.8" fill="#5c4f4a"/><rect x="113.9" y="758.7" width="1.2" height="2.7" fill="#000"/><rect x="793.0" y="616.7" width="1.9" height="2.5" fill="#000"/><rect x="799.3" y="651.3" width="2.2" height="2.4" fill="#000"/><rect x="805.9" y="609.7" width="3.1" height="2.2" fill="#000"/><rect x="792.9" y="579.4" width="3.3" height="2.0" fill="#000"/><rect x="800.4" y="571.1" width="2.9" height="2.5" fill="#000"/><rect x="802.3" y="643.2" width="1.7" height="2.5" fill="#004364"/><rect x="801.1" y="652.5" width="2.0" height="3.0" fill="#004364"/><rect x="805.4" y="577.7" width="1.9" height="1.1" fill="#004364"/><rect x="792.7" y="656.7" width="2.1" height="2.6" fill="#000"/><rect x="796.2" y="644.2" width="2.4" height="2.3" fill="#004364"/><rect x="798.9" y="650.9" width="2.7" height="3.3" fill="#000"/><rect x="805.8" y="628.8" width="1.4" height="3.2" fill="#000"/><rect x="801.1" y="585.1" width="3.1" height="2.4" fill="#000"/><rect x="799.9" y="610.9" width="1.9" height="1.2" fill="#000"/><rect x="796.1" y="576.3" width="2.5" height="2.9" fill="#004364"/><rect x="801.2" y="596.4" width="3.2" height="3.5" fill="#000"/><rect x="806.0" y="594.4" width="1.2" height="2.5" fill="#000"/><rect x="794.0" y="590.0" width="2.7" height="3.4" fill="#000"/><rect x="794.3" y="656.1" width="3.2" height="1.9" fill="#004364"/><rect x="803.8" y="601.7" width="3.2" height="2.7" fill="#000"/><rect x="799.5" y="654.4" width="2.3" height="2.1" fill="#000"/><rect x="804.9" y="606.6" width="1.6" height="1.8" fill="#000"/><rect x="799.5" y="625.1" width="1.2" height="2.6" fill="#004364"/><rect x="795.0" y="652.1" width="2.5" height="1.7" fill="#004364"/><rect x="800.5" y="656.5" width="1.6" height="2.1" fill="#000"/><rect x="792.0" y="582.6" width="2.9" height="3.1" fill="#000"/><rect x="794.1" y="600.8" width="2.9" height="1.1" fill="#000"/><rect x="794.3" y="586.1" width="3.0" height="1.6" fill="#000"/><rect x="800.5" y="626.7" width="1.2" height="2.5" fill="#000"/><rect x="800.5" y="586.3" width="3.0" height="3.4" fill="#000"/><rect x="794.7" y="626.8" width="3.2" height="2.1" fill="#000"/><rect x="802.4" y="568.2" width="3.4" height="1.8" fill="#000"/><rect x="803.7" y="597.3" width="3.1" height="1.2" fill="#000"/><rect x="799.0" y="605.0" width="2.3" height="3.1" fill="#004364"/><rect x="794.9" y="604.6" width="2.0" height="2.0" fill="#004364"/><rect x="805.0" y="648.6" width="3.5" height="2.1" fill="#000"/><rect x="801.8" y="636.1" width="3.4" height="2.4" fill="#000"/><rect x="803.6" y="646.5" width="3.4" height="1.3" fill="#000"/><rect x="789.8" y="650.8" width="2.7" height="3.3" fill="#004364"/><rect x="801.7" y="581.3" width="1.7" height="2.7" fill="#004364"/><rect x="789.9" y="651.7" width="1.3" height="1.3" fill="#004364"/><rect x="802.8" y="570.8" width="1.6" height="1.3" fill="#000"/><rect x="791.9" y="640.2" width="3.3" height="3.0" fill="#000"/><rect x="797.3" y="619.2" width="2.0" height="2.9" fill="#000"/><rect x="793.6" y="615.1" width="2.1" height="2.2" fill="#000"/><rect x="803.6" y="638.6" width="1.1" height="1.1" fill="#004364"/><rect x="805.6" y="646.2" width="1.2" height="2.3" fill="#000"/><rect x="791.7" y="571.8" width="2.0" height="2.0" fill="#000"/><rect x="795.1" y="583.2" width="1.8" height="1.3" fill="#000"/><rect x="801.2" y="601.1" width="1.2" height="1.4" fill="#000"/><rect x="796.8" y="626.8" width="2.4" height="2.6" fill="#000"/><rect x="799.6" y="606.0" width="1.9" height="2.2" fill="#000"/><rect x="796.1" y="630.9" width="2.2" height="1.6" fill="#000"/><rect x="800.8" y="571.8" width="2.1" height="2.1" fill="#000"/><rect x="804.9" y="600.6" width="3.2" height="3.0" fill="#000"/><rect x="805.0" y="634.5" width="3.1" height="2.3" fill="#004364"/><rect x="800.3" y="634.7" width="2.4" height="1.3" fill="#000"/><rect x="797.1" y="587.4" width="2.0" height="2.3" fill="#000"/><rect x="800.2" y="600.7" width="3.0" height="1.9" fill="#000"/><rect x="789.4" y="575.9" width="2.2" height="2.7" fill="#000"/><rect x="798.8" y="640.9" width="1.1" height="2.9" fill="#000"/><rect x="790.8" y="636.2" width="3.3" height="1.2" fill="#000"/><rect x="803.8" y="582.1" width="1.2" height="3.5" fill="#000"/><rect x="796.7" y="631.5" width="3.4" height="1.6" fill="#004364"/><rect x="805.0" y="617.9" width="3.4" height="1.9" fill="#000"/><rect x="805.5" y="604.2" width="2.9" height="1.4" fill="#004364"/><rect x="791.7" y="603.1" width="3.2" height="1.4" fill="#004364"/><rect x="801.7" y="652.1" width="2.3" height="2.1" fill="#000"/><rect x="791.3" y="636.4" width="1.4" height="2.3" fill="#000"/><rect x="803.5" y="616.1" width="2.9" height="2.7" fill="#004364"/><rect x="799.1" y="620.5" width="3.5" height="3.2" fill="#000"/><rect x="795.5" y="581.4" width="1.9" height="1.8" fill="#000"/><rect x="796.1" y="631.3" width="2.8" height="1.5" fill="#000"/><rect x="797.2" y="633.5" width="3.1" height="2.0" fill="#000"/><rect x="796.9" y="586.8" width="1.6" height="2.8" fill="#000"/><rect x="805.3" y="646.1" width="1.6" height="1.5" fill="#000"/><rect x="800.5" y="568.5" width="3.3" height="1.4" fill="#000"/><rect x="794.3" y="605.2" width="2.8" height="1.2" fill="#000"/><rect x="793.5" y="651.8" width="1.1" height="2.1" fill="#000"/><rect x="796.4" y="611.2" width="1.5" height="2.5" fill="#004364"/><rect x="795.6" y="616.7" width="1.3" height="1.7" fill="#004364"/><rect x="790.9" y="649.3" width="3.3" height="1.2" fill="#000"/><rect x="800.5" y="600.0" width="2.1" height="2.7" fill="#000"/><rect x="790.8" y="654.7" width="1.8" height="2.4" fill="#000"/><rect x="800.3" y="613.3" width="1.1" height="1.7" fill="#000"/><rect x="800.0" y="634.4" width="1.4" height="1.9" fill="#004364"/><rect x="791.1" y="653.5" width="1.4" height="1.8" fill="#004364"/><rect x="798.4" y="626.5" width="2.1" height="1.8" fill="#000"/><rect x="801.0" y="575.2" width="1.5" height="2.4" fill="#004364"/><rect x="795.1" y="590.3" width="2.0" height="3.2" fill="#000"/><rect x="797.1" y="590.8" width="2.7" height="2.3" fill="#000"/><rect x="805.1" y="607.6" width="3.0" height="1.2" fill="#004364"/><rect x="803.4" y="575.7" width="1.7" height="1.2" fill="#000"/><rect x="798.6" y="651.4" width="1.3" height="2.7" fill="#004364"/><rect x="800.4" y="602.2" width="3.5" height="1.3" fill="#000"/><rect x="803.6" y="640.8" width="2.4" height="1.4" fill="#000"/><rect x="792.4" y="588.8" width="3.0" height="1.1" fill="#004364"/><rect x="804.2" y="655.2" width="2.0" height="2.4" fill="#000"/><rect x="799.8" y="657.8" width="2.7" height="1.7" fill="#004364"/><rect x="799.8" y="575.2" width="2.9" height="1.6" fill="#000"/><rect x="797.9" y="608.8" width="1.5" height="2.3" fill="#000"/><rect x="802.8" y="653.0" width="3.4" height="1.3" fill="#000"/><rect x="805.3" y="649.7" width="1.3" height="3.0" fill="#000"/><rect x="797.6" y="612.4" width="1.0" height="1.8" fill="#000"/><rect x="803.8" y="631.0" width="1.3" height="3.1" fill="#000"/><rect x="801.2" y="635.3" width="1.9" height="3.0" fill="#000"/><rect x="803.6" y="606.5" width="2.9" height="2.2" fill="#000"/><rect x="802.4" y="603.8" width="3.1" height="2.8" fill="#004364"/><rect x="797.5" y="631.4" width="2.3" height="2.1" fill="#004364"/><rect x="794.2" y="609.1" width="2.9" height="2.0" fill="#000"/><rect x="796.7" y="568.5" width="1.6" height="3.1" fill="#004364"/><rect x="798.0" y="621.7" width="1.6" height="1.0" fill="#000"/><rect x="793.4" y="600.1" width="3.1" height="2.3" fill="#000"/><rect x="792.6" y="581.2" width="2.0" height="1.4" fill="#000"/><rect x="796.5" y="582.6" width="3.1" height="2.0" fill="#000"/><rect x="795.9" y="631.8" width="1.1" height="2.0" fill="#004364"/><rect x="797.4" y="651.4" width="3.2" height="1.6" fill="#004364"/><rect x="797.1" y="580.7" width="2.6" height="1.9" fill="#000"/><rect x="799.1" y="641.7" width="1.7" height="3.5" fill="#004364"/><rect x="802.4" y="656.4" width="2.2" height="2.4" fill="#000"/><rect x="802.8" y="624.8" width="1.9" height="1.2" fill="#004364"/><rect x="805.5" y="621.3" width="1.0" height="1.1" fill="#000"/><rect x="797.2" y="583.0" width="2.3" height="1.8" fill="#004364"/><rect x="794.8" y="610.5" width="1.9" height="2.6" fill="#004364"/><rect x="794.2" y="622.7" width="3.4" height="1.2" fill="#000"/><rect x="792.1" y="604.2" width="2.3" height="2.4" fill="#004364"/><rect x="792.0" y="635.3" width="2.8" height="3.1" fill="#000"/><rect x="804.7" y="599.5" width="2.0" height="1.6" fill="#004364"/><rect x="794.9" y="643.0" width="2.3" height="2.9" fill="#004364"/><rect x="805.1" y="569.1" width="1.4" height="2.9" fill="#004364"/><rect x="800.2" y="595.4" width="2.5" height="3.0" fill="#000"/><rect x="803.9" y="647.9" width="2.1" height="3.2" fill="#000"/><rect x="805.9" y="565.2" width="1.5" height="3.0" fill="#000"/><rect x="794.8" y="594.6" width="2.1" height="3.1" fill="#000"/><rect x="793.1" y="569.6" width="1.4" height="2.6" fill="#000"/><rect x="790.9" y="592.3" width="1.5" height="3.1" fill="#004364"/><rect x="797.6" y="651.2" width="1.8" height="3.2" fill="#000"/><rect x="796.9" y="624.1" width="1.1" height="3.0" fill="#000"/><rect x="803.6" y="574.6" width="3.4" height="1.6" fill="#000"/><rect x="796.9" y="586.2" width="3.1" height="2.5" fill="#004364"/><rect x="801.9" y="647.8" width="1.9" height="2.5" fill="#004364"/><rect x="802.2" y="592.7" width="3.4" height="2.1" fill="#004364"/><rect x="792.5" y="616.2" width="2.2" height="2.8" fill="#000"/><rect x="794.8" y="583.2" width="2.9" height="3.3" fill="#000"/><rect x="796.2" y="626.6" width="2.5" height="1.5" fill="#000"/><rect x="803.2" y="570.9" width="1.6" height="2.1" fill="#000"/><rect x="792.7" y="580.7" width="3.3" height="2.8" fill="#004364"/><rect x="804.8" y="615.9" width="2.0" height="3.4" fill="#004364"/><rect x="797.2" y="638.5" width="2.0" height="3.5" fill="#000"/><rect x="794.0" y="653.7" width="1.5" height="1.2" fill="#000"/><rect x="794.0" y="614.3" width="2.6" height="1.1" fill="#000"/><rect x="793.7" y="606.1" width="1.9" height="2.9" fill="#000"/><rect x="791.4" y="607.2" width="3.3" height="2.1" fill="#000"/><rect x="791.6" y="637.5" width="2.8" height="3.4" fill="#000"/><rect x="805.0" y="606.0" width="3.4" height="2.2" fill="#000"/><rect x="795.1" y="646.0" width="1.7" height="2.2" fill="#000"/><rect x="802.7" y="593.3" width="1.6" height="3.0" fill="#000"/><rect x="805.7" y="640.3" width="1.9" height="3.4" fill="#000"/><rect x="805.6" y="568.3" width="1.5" height="1.0" fill="#004364"/><rect x="804.4" y="644.4" width="2.5" height="3.0" fill="#004364"/><rect x="794.3" y="588.5" width="3.0" height="2.0" fill="#000"/><rect x="789.6" y="659.6" width="1.4" height="2.9" fill="#000"/><rect x="805.2" y="635.6" width="3.1" height="2.0" fill="#000"/><rect x="798.4" y="591.6" width="1.4" height="1.0" fill="#000"/><rect x="804.2" y="651.1" width="2.2" height="2.7" fill="#004364"/><rect x="795.3" y="625.1" width="1.7" height="1.2" fill="#000"/><rect x="805.9" y="617.0" width="2.0" height="1.9" fill="#004364"/><rect x="793.7" y="589.3" width="1.7" height="2.3" fill="#000"/><rect x="797.3" y="586.9" width="2.1" height="2.5" fill="#000"/><rect x="798.3" y="611.3" width="1.7" height="2.8" fill="#000"/><rect x="795.3" y="613.9" width="3.2" height="3.4" fill="#004364"/><rect x="792.3" y="652.5" width="1.5" height="2.0" fill="#004364"/><rect x="794.4" y="590.7" width="3.4" height="3.4" fill="#000"/><rect x="799.4" y="617.7" width="1.1" height="2.0" fill="#004364"/><rect x="805.7" y="572.5" width="1.6" height="1.5" fill="#000"/><rect x="800.9" y="575.9" width="2.6" height="1.3" fill="#000"/><rect x="800.8" y="606.0" width="3.5" height="2.2" fill="#000"/><rect x="798.3" y="569.5" width="1.6" height="3.4" fill="#000"/><rect x="791.5" y="632.0" width="2.7" height="2.2" fill="#004364"/><rect x="800.0" y="578.5" width="1.1" height="2.9" fill="#000"/><rect x="794.3" y="626.6" width="1.3" height="1.4" fill="#000"/><rect x="798.1" y="601.3" width="1.3" height="2.0" fill="#000"/><rect x="793.8" y="577.5" width="1.4" height="1.3" fill="#000"/><rect x="804.9" y="622.3" width="3.3" height="1.0" fill="#000"/><rect x="793.2" y="598.7" width="3.4" height="2.2" fill="#000"/><rect x="797.0" y="635.2" width="2.3" height="3.1" fill="#004364"/><rect x="798.7" y="609.1" width="2.3" height="2.1" fill="#004364"/><rect x="803.2" y="584.0" width="2.5" height="3.3" fill="#000"/><rect x="794.1" y="646.6" width="3.4" height="1.8" fill="#000"/><rect x="792.0" y="619.5" width="1.4" height="1.3" fill="#004364"/><rect x="805.9" y="630.1" width="2.3" height="2.9" fill="#000"/><rect x="796.9" y="620.2" width="1.8" height="2.5" fill="#000"/><rect x="794.5" y="613.1" width="1.9" height="1.8" fill="#000"/><rect x="800.9" y="638.2" width="2.8" height="1.9" fill="#000"/><rect x="793.9" y="657.8" width="1.7" height="1.3" fill="#000"/><rect x="801.4" y="597.4" width="2.6" height="1.7" fill="#000"/><rect x="796.7" y="610.4" width="2.3" height="3.2" fill="#004364"/><rect x="805.9" y="569.9" width="2.0" height="2.4" fill="#000"/><rect x="795.5" y="658.2" width="1.9" height="1.5" fill="#004364"/><rect x="804.0" y="606.0" width="3.2" height="2.8" fill="#000"/><rect x="795.3" y="606.7" width="3.3" height="2.7" fill="#000"/><rect x="798.9" y="578.9" width="1.5" height="1.9" fill="#000"/><rect x="791.4" y="572.7" width="1.8" height="1.7" fill="#000"/><rect x="794.3" y="607.2" width="1.9" height="2.8" fill="#000"/><rect x="796.5" y="629.8" width="1.3" height="3.2" fill="#004364"/><rect x="792.8" y="578.2" width="1.8" height="2.4" fill="#000"/><rect x="803.0" y="621.9" width="1.2" height="1.1" fill="#000"/><rect x="795.5" y="611.6" width="3.5" height="2.2" fill="#000"/><rect x="795.6" y="613.6" width="2.1" height="2.6" fill="#000"/><rect x="796.4" y="574.2" width="3.4" height="2.7" fill="#000"/><rect x="790.1" y="648.3" width="2.9" height="1.8" fill="#000"/><rect x="794.5" y="651.7" width="2.6" height="1.2" fill="#000"/><rect x="800.0" y="648.7" width="1.6" height="1.8" fill="#004364"/><rect x="805.3" y="569.9" width="2.3" height="3.3" fill="#000"/><rect x="798.8" y="573.1" width="1.6" height="2.2" fill="#004364"/><rect x="793.8" y="658.3" width="2.7" height="2.3" fill="#000"/><rect x="798.7" y="597.6" width="2.5" height="2.5" fill="#000"/><rect x="799.5" y="598.7" width="2.9" height="3.3" fill="#000"/><rect x="796.6" y="633.5" width="3.1" height="2.6" fill="#004364"/><rect x="803.8" y="585.5" width="3.1" height="3.3" fill="#000"/>
<path d="M250 678L254 690L253 700L249 712L243 722L236 730L231 737" stroke="#000" stroke-width="1.2" fill="none"/>
<g fill="#004364" stroke="#000" stroke-width="0.8"><path d="M420.0 642.5 L428.4 638.3 L431.3 641.1 L438.3 641.8 L448.1 639.7 L453.8 642.5 L455.2 648.1 L448.1 647.4 L441.1 648.1 L434.1 647.4 L425.6 647.4 L420.0 648.1Z"/><path d="M473.4 656.6 L480.5 658.0 L484.7 662.2 L493.1 655.2 L497.4 653.8 L498.8 656.6 L493.1 660.8 L487.5 667.8 L498.8 673.4 L505.8 679.1 L503.0 681.9 L495.9 679.1 L488.9 674.9 L484.7 670.6 L479.1 662.2 L474.8 659.4Z"/></g>
<path d="M802 561L806 561L806 660L800 657L802 640L801 620L803 600L801 580Z" fill="#004364" stroke="#000" stroke-width="0.8"/>
<path d="M797 657L792 665L785 672L782 685L788 700L784 712L790 725L787 730" stroke="#000" stroke-width="3.2" fill="none"/>
<path d="M797 657L792 665L785 672L782 685L788 700L784 712L790 725L787 730" stroke="#234869" stroke-width="1.6" fill="none"/>
<g fill="#234869" stroke="#1d3c58" stroke-width="0.6"><path d="M299.2 59.8 L302.3 58.6 L304.2 56.8 L306.6 55.5 L309.7 56.2 L314.6 58.0 L315.2 62.3 L317.1 66.6 L318.9 70.3 L321.4 70.3 L323.5 71.5 L323.2 73.4 L320.2 74.0 L319.5 75.8 L318.9 78.9 L318.9 82.6 L320.8 86.9 L323.2 91.2 L323.5 95.5 L322.6 96.2 L320.8 91.8 L316.5 86.9 L314.6 82.6 L314.6 76.5 L312.2 70.9 L310.3 67.8 L309.7 62.3 L307.8 58.6 L305.4 60.5 L304.8 62.9 L302.3 63.5 L299.8 61.7Z"/><path d="M368.3 261.8 L371.1 259.4 L373.8 258.3 L377.7 259.4 L380.9 263.0 L384.0 264.6 L387.2 265.7 L390.3 267.3 L392.7 271.3 L395.9 273.6 L396.6 276.4 L395.1 276.8 L391.9 274.4 L388.8 272.0 L385.6 269.7 L381.7 268.1 L377.7 265.7 L377.0 264.2 L373.8 261.0 L371.4 261.0 L369.1 262.6Z"/><path d="M438.0 376.0 L441.0 370.0 L446.0 366.0 L451.0 363.0 L452.0 367.0 L447.0 372.0 L442.0 378.0Z"/><path d="M425.0 413.0 L428.0 414.0 L429.0 424.0 L432.0 431.0 L430.0 436.0 L427.0 430.0 L425.0 422.0Z"/><path d="M526.2 503.0 L532.6 501.4 L531.0 511.0 L529.4 523.8 L535.8 525.4 L532.6 530.2 L534.2 536.6 L531.0 538.2 L526.2 531.8 L527.8 522.2 L526.2 514.2Z"/><path d="M540.6 600.6 L543.8 610.2 L551.8 610.2 L556.6 603.8 L558.2 607.0 L563.0 610.2 L561.4 613.4 L551.8 616.6 L547.0 619.8 L542.2 618.2 L540.6 607.0Z"/><path d="M604.4 306.6 L606.8 308.5 L609.3 304.6 L611.3 306.1 L614.7 303.6 L615.7 300.7 L616.7 298.7 L612.7 296.7 L612.3 293.3 L612.7 288.3 L614.2 285.4 L615.2 287.9 L617.2 287.4 L618.2 290.3 L615.7 292.3 L616.7 294.7 L623.1 295.2 L620.6 292.3 L620.1 286.4 L621.6 286.9 L623.6 292.3 L627.5 293.3 L625.1 296.7 L623.6 299.7 L620.6 302.6 L617.7 306.6 L615.7 310.0 L610.8 312.0 L607.3 313.5 L605.9 310.0 L604.4 308.5Z"/><path d="M122.0 660.0 L126.0 654.0 L133.0 653.0 L137.0 658.0 L134.0 667.0 L126.0 668.0Z"/><path d="M42.0 681.0 L47.0 680.0 L52.0 686.0 L49.0 688.0Z"/><path d="M58.0 685.0 L62.0 688.0 L65.0 698.0 L72.0 704.0 L80.0 705.0 L85.0 710.0 L78.0 711.0 L68.0 707.0 L62.0 700.0Z"/><path d="M140.0 707.0 L142.0 699.0 L148.0 695.0 L155.0 700.0 L151.0 710.0 L144.0 713.0Z"/><path d="M783.0 728.0 L790.0 730.0 L797.0 745.0 L795.0 755.0 L786.0 750.0Z"/></g>
<g stroke="#000" stroke-width="1" fill="none" shape-rendering="crispEdges"><path d="M6.0 105.0 L155.0 105.0 L162.0 115.0 L160.0 123.0 L152.0 133.0 L138.0 149.0 L188.0 150.0"/><path d="M220.0 60.0 L221.1 58.2 L223.6 58.0 L225.0 56.7 L225.9 54.6 L227.8 53.7 L229.3 52.4 L231.1 51.5 L232.9 50.5 L233.6 48.1 L235.0 46.8 L237.6 46.8 L238.7 44.9 L240.6 44.2 L241.3 41.7 L243.4 41.2 L245.0 40.0 L246.9 40.8 L249.1 40.1 L250.9 41.9 L252.9 42.1 L255.2 40.7 L257.0 42.0 L259.4 42.3 L260.7 44.4 L262.1 46.2 L264.6 46.4 L266.6 47.2 L268.2 48.7 L270.0 50.0 L272.0 48.7 L274.2 48.8 L276.5 48.9 L278.7 48.7 L280.8 47.8 L283.0 48.0 L281.9 45.9 L281.3 43.7 L281.1 41.4 L280.2 39.3 L280.0 37.0 L281.2 35.0 L283.9 35.1 L285.4 33.4 L287.3 32.3 L288.5 30.4 L291.2 30.5 L292.9 29.0 L293.8 26.6 L296.0 26.0 L297.6 24.6 L299.7 24.1 L301.5 23.0 L303.5 22.2 L304.7 20.2 L306.9 19.8 L308.4 18.4 L310.0 17.0 L309.0 14.9 L309.0 12.6 L308.9 10.2 L308.3 8.0 L307.0 6.0"/><path d="M208.0 105.0 L311.6 105.0 L311.6 89.0 L323.0 91.7 L420.0 90.0 L540.0 95.0 L636.7 96.7 L786.7 95.0 L806.0 97.0"/><path d="M635.0 96.0 L636.8 94.5 L639.0 94.1 L640.9 92.8 L643.1 92.2 L645.1 91.2 L646.6 89.2 L649.0 89.0 L650.7 87.6 L653.1 88.8 L654.8 87.2 L656.7 86.8 L659.0 87.8 L660.7 86.4 L662.8 86.7 L664.6 85.5 L666.7 85.4 L668.4 84.0 L670.6 84.5 L672.6 84.6 L674.5 83.5 L676.4 83.0 L678.0 81.4 L679.1 79.4 L679.2 76.8 L681.6 75.7 L682.3 73.5 L684.4 73.0 L686.3 71.8 L688.1 70.6 L690.7 71.5 L692.5 70.1 L694.7 69.9 L696.6 68.8 L697.6 66.8 L697.6 64.7 L698.3 62.7 L697.8 60.5 L699.6 59.6 L701.8 59.7 L703.5 58.3 L705.7 58.5 L707.3 57.0 L708.3 55.0 L707.1 52.7 L707.4 50.6 L708.4 48.6 L710.1 47.1 L712.6 47.5 L714.1 45.6 L716.1 45.0 L717.8 43.5 L719.8 42.9 L721.6 41.8 L723.5 40.8 L725.6 40.2 L727.5 39.3 L729.7 38.9 L731.4 37.6 L733.6 37.1 L735.4 36.0 L737.0 34.4 L739.2 34.0 L740.5 32.3 L741.5 30.3 L743.9 30.2 L745.7 29.2 L747.2 27.9 L748.5 26.2 L750.3 25.2 L751.3 23.2 L753.6 23.1 L755.0 21.5 L756.2 19.8 L757.6 18.3 L760.2 18.3 L762.0 17.4 L763.0 15.4 L760.8 15.1 L759.8 12.8 L757.6 12.4 L755.5 11.9 L753.9 10.6 L752.6 8.7 L751.0 7.5 L748.8 7.1"/><path d="M763.0 15.4 L764.1 17.3 L765.0 19.3 L765.0 21.6 L765.4 23.7 L767.5 24.5 L769.3 25.7 L770.6 27.6 L771.6 29.8 L773.5 31.0 L775.2 32.3 L777.2 33.2 L779.1 34.2 L780.3 36.0 L782.2 37.0 L784.0 38.2 L785.6 39.5 L786.7 41.5 L788.4 40.3 L790.8 40.9 L792.6 40.0 L794.5 39.2 L796.4 38.5 L797.9 36.7 L799.9 36.2 L802.0 36.1 L804.0 35.5 L805.7 34.4"/><path d="M786.7 95.0 L785.9 96.9 L785.0 98.8 L784.3 100.7 L783.4 102.6 L783.2 104.7 L782.2 106.6 L783.3 109.1 L781.9 110.8 L780.4 112.5 L780.3 114.6 L780.0 116.7 L777.6 117.3 L776.4 119.9 L774.0 120.5 L772.3 122.2 L770.0 123.0 L768.2 124.3 L766.5 125.6 L765.5 127.9 L763.6 128.9 L761.8 130.2 L759.3 130.6 L757.8 132.2 L756.8 134.5 L754.3 134.9 L753.0 136.7 L751.1 137.8 L748.9 137.3 L747.0 138.7 L745.0 139.3 L742.7 138.0 L740.9 139.7 L738.9 140.1 L736.7 140.0 L734.4 140.4 L732.7 141.7 L731.5 143.9 L728.9 144.0 L727.6 145.8 L725.6 146.8 L724.3 148.8 L721.7 148.7 L720.1 150.3 L718.0 151.0 L716.7 153.0 L714.6 152.2 L712.5 153.4 L710.4 153.3 L708.4 153.7 L706.3 153.7 L704.2 153.9 L702.1 153.4 L700.0 153.0 L698.8 154.9 L698.9 157.4 L696.7 158.8 L696.3 161.1 L695.3 163.2 L693.4 164.7 L693.0 167.0 L690.8 167.5 L688.7 168.4 L686.5 168.5 L684.2 168.6 L682.4 170.4 L680.0 170.0 L677.7 170.1 L676.7 172.8 L674.1 172.5 L672.2 173.3 L671.1 175.8 L668.5 175.4 L667.0 177.1 L664.9 177.7 L663.6 179.7 L661.7 180.6 L659.7 181.4 L657.5 181.8 L655.1 182.7 L654.3 185.4 L651.8 186.1 L650.4 188.0 L648.3 186.9 L646.1 186.6 L643.8 187.6 L641.6 187.0 L639.6 187.8 L637.4 188.0 L635.1 188.1 L633.4 189.9 L630.9 189.2 L628.8 189.6 L626.7 190.0 L624.9 192.1 L622.4 190.9 L620.5 192.3 L619.6 194.4 L617.7 195.5 L615.8 196.6 L613.9 197.7 L613.2 200.0 L610.9 200.7 L610.0 202.8 L609.5 204.8 L609.6 207.0 L609.2 209.0 L609.0 211.1 L608.0 213.0 L606.1 214.3 L604.1 214.6 L601.8 214.0 L599.6 213.9 L598.0 216.0 L596.0 216.7 L593.5 215.3 L591.7 216.7 L591.3 218.8 L591.2 221.0 L591.2 223.1 L590.2 225.1 L589.4 227.2 L589.8 229.4 L589.5 231.6 L589.9 233.8 L587.9 235.6 L589.3 238.0 L588.0 240.0"/><path d="M145.0 238.5 L300.0 238.5 L493.0 240.0 L588.0 240.0 L678.5 239.0"/><path d="M678.5 239.0 L705.0 231.0 L731.0 220.4 L743.6 220.4 L806.0 223.0"/><path d="M678.5 239.0 L677.5 240.9 L675.0 241.4 L674.7 244.0 L672.5 244.8 L671.9 247.1 L670.2 248.4 L667.7 248.9 L667.4 251.5 L665.4 252.4 L664.2 254.1 L662.7 255.6 L662.4 257.8 L661.9 260.0 L662.0 262.3 L661.0 264.4 L662.4 266.1 L665.0 266.1 L666.6 267.5 L668.6 268.3 L670.0 269.9 L671.6 271.3 L672.8 273.3 L675.2 273.6 L676.8 275.0 L678.8 275.9 L680.1 277.6 L680.5 280.0 L683.3 280.2 L684.0 282.4 L685.6 283.7 L687.8 283.5 L690.0 284.0 L692.2 283.4 L694.4 283.7 L694.9 285.8 L696.2 287.6 L696.8 289.7 L697.2 291.9 L698.6 293.6 L700.3 295.3 L701.3 297.2 L701.4 299.5 L701.6 301.8 L703.5 303.2 L705.0 304.7 L704.7 307.3 L706.4 308.7 L707.1 310.7 L707.9 312.7 L709.9 314.0 L710.8 315.9 L710.9 318.2 L713.3 319.3 L713.2 321.8 L715.4 322.9 L715.3 325.4 L716.7 327.0 L718.1 328.6 L719.5 330.2 L721.3 331.3 L723.3 332.0 L725.4 332.8 L727.1 333.9 L728.3 335.8 L730.0 337.0 L731.5 338.5 L733.6 339.3 L734.0 341.9 L736.1 342.8 L737.3 344.6 L739.5 345.3 L741.0 346.8 L742.8 347.9 L743.9 349.9 L745.5 351.2 L746.7 353.0 L748.3 354.5 L749.8 355.9 L750.6 358.1 L752.0 359.8 L754.6 360.3 L755.7 362.2 L757.5 363.4 L758.3 365.7 L760.0 367.0 L760.3 369.2 L762.7 370.0 L762.9 372.3 L764.8 373.4 L766.4 374.8 L766.7 377.0 L767.0 379.2 L768.6 380.9 L769.7 382.8 L770.0 385.0 L771.1 386.8 L771.6 388.9 L772.3 391.0 L773.0 393.0 L774.5 394.3 L775.7 396.0 L777.6 397.0 L779.3 398.1 L780.7 399.6 L782.1 401.0 L783.0 403.0 L784.7 404.3 L786.6 405.3 L787.8 407.2 L789.8 408.0 L791.3 409.6 L792.7 411.3 L795.5 411.0 L796.7 413.0 L798.3 414.6 L798.8 416.5 L799.0 418.6 L799.4 420.6 L799.7 422.6 L801.2 424.2 L800.7 426.5 L803.2 427.8 L803.0 430.0 L803.1 432.2 L805.0 433.8 L804.5 436.3 L806.8 437.7 L806.7 440.0"/><path d="M300.0 238.5 L306.7 270.0 L301.7 290.0 L293.0 403.0 L285.0 463.0 L280.0 540.0 L283.0 607.0 L285.0 650.0"/><path d="M493.0 240.0 L500.0 270.0 L510.0 337.0 L523.0 420.0 L526.7 443.0 L534.5 476.0 L542.0 486.0 L537.0 495.0 L532.6 538.2 L534.2 546.2 L531.0 567.0 L529.4 576.6 L535.8 586.2 L539.0 597.4 L540.6 600.6"/><path d="M537.0 594.2 L343.0 594.0 L341.7 607.0 L356.7 623.0 L360.0 637.0 L358.0 648.0"/><path d="M547.0 620.6 L583.0 621.7 L740.0 631.7 L743.0 637.0 L746.7 650.0 L756.7 651.7 L760.0 640.0 L756.7 623.0 L760.0 611.7 L770.0 610.0 L786.7 618.0 L806.0 623.0"/><path d="M45.0 594.0 L186.7 594.0"/><path d="M6.0 415.7 L80.0 415.7"/><path d="M186.7 594.0 L185.0 595.8 L185.9 598.7 L183.8 600.3 L184.0 602.9 L181.6 604.5 L181.7 607.0 L182.3 609.2 L180.2 610.9 L180.2 612.9 L179.5 614.9 L178.9 616.8 L180.0 619.1 L179.4 621.1 L178.3 622.9 L178.8 625.1 L178.0 627.0 L179.6 628.3 L180.8 629.9 L181.0 632.2 L182.2 633.8 L183.5 635.4 L185.6 636.3 L185.7 638.7 L187.6 639.8 L189.2 641.1 L190.0 643.0 L190.5 645.0 L191.0 647.0 L192.1 648.8 L191.5 651.0 L192.4 652.9 L192.4 655.0 L192.1 657.2 L193.0 659.1 L193.9 661.0 L193.5 663.1 L193.6 665.2 L195.0 667.0"/><path d="M202.0 6.0 L202.2 7.5 L201.9 9.0 L201.2 10.2 L200.1 11.3 L199.0 12.3 L198.1 13.5 L197.7 14.9 L198.2 16.3 L199.3 17.4 L200.6 18.0 L202.1 18.5 L203.5 18.9 L204.8 19.5 L205.9 20.5 L206.5 21.9 L206.4 23.4 L205.7 24.7 L204.6 25.6 L203.2 26.3 L201.8 26.9 L200.6 27.6 L199.6 28.8 L199.2 30.2 L199.6 31.7 L200.6 32.7 L202.0 33.2 L203.5 33.1 L205.0 32.7 L206.4 32.3 L207.9 32.1 L209.4 32.4 L210.6 33.2 L211.2 34.6 L211.0 36.0 L210.0 37.1 L208.6 37.8 L207.3 38.5 L206.3 39.6 L206.1 41.1 L206.9 42.3 L208.2 42.9 L209.7 43.0 L211.2 43.1 L212.6 43.5 L213.8 44.5 L214.3 45.9 L214.1 47.4 L213.3 48.7 L212.4 49.8 L211.5 51.0 L211.0 52.5 L211.3 53.9 L212.2 55.1 L213.5 55.7 L215.0 55.7 L216.5 55.5 L218.0 55.2 L219.5 55.3 L220.9 55.8 L222.0 56.7 L222.8 58.0 L223.1 59.5 L223.0 61.0 L222.9 62.5 L222.8 64.0 L223.0 65.5 L223.5 66.9 L224.5 67.9 L225.9 68.4 L227.4 68.2 L228.6 67.3 L229.4 66.0 L230.0 64.6 L230.7 63.3 L231.6 62.2 L233.0 61.6 L234.4 62.2 L235.0 63.5 L234.6 64.9 L233.5 66.0 L232.3 66.9 L231.3 68.0 L230.8 69.4 L231.0 70.9 L231.7 72.2 L232.6 73.4 L233.7 74.5 L234.4 75.7 L234.7 77.2 L234.2 78.6 L233.1 79.6 L231.7 80.0 L230.2 79.9 L228.7 79.6 L227.2 79.4 L225.8 79.7 L224.6 80.7 L224.2 82.1 L224.7 83.5 L225.7 84.6 L227.0 85.3 L228.4 85.9 L229.5 86.9 L229.9 88.3 L229.3 89.7 L228.0 90.3 L226.5 90.1 L225.2 89.4 L223.8 88.8 L222.3 88.6 L220.9 89.1 L219.9 90.2 L219.4 91.6 L219.3 93.1 L219.3 94.6 L218.9 96.1 L218.1 97.3 L216.7 97.7 L215.2 97.4 L214.1 96.4 L213.1 95.3 L212.1 94.2 L210.7 93.6 L209.3 93.7 L208.1 94.6 L207.5 96.0 L207.4 97.5 L207.6 99.0 L207.8 100.4 L207.6 101.9 L206.9 103.2 L205.7 104.2 L204.3 104.6 L202.8 104.7 L201.3 104.5 L199.8 104.4 L198.4 104.6 L197.0 105.3 L196.2 106.5 L196.1 108.0 L196.7 109.4 L197.9 110.3 L199.3 110.9 L200.6 111.5 L201.6 112.7 L201.7 114.1 L200.7 115.3 L199.3 115.8 L197.8 115.9 L196.4 116.1 L195.0 116.8 L194.1 117.9 L194.0 119.4 L194.5 120.8 L195.5 121.9 L196.6 122.9 L197.7 123.9 L198.5 125.2 L198.6 126.6 L197.9 127.9 L196.5 128.6 L195.0 128.8 L193.5 128.8 L192.1 129.2 L191.0 130.3 L190.8 131.7 L191.3 133.1 L192.4 134.1 L193.7 135.0 L194.6 136.1 L194.9 137.5 L194.2 138.8 L192.9 139.5 L191.4 139.4 L189.9 139.1 L188.4 139.1 L187.0 139.6 L186.1 140.8 L185.9 142.2 L186.5 143.6 L187.7 144.6 L189.0 145.3 L190.3 146.1 L191.3 147.1 L191.9 148.5 L191.6 150.0 L190.7 151.1 L189.3 151.8 L187.9 152.2 L186.5 152.6 L185.2 153.4 L184.4 154.7 L184.4 156.2 L185.0 157.6 L186.0 158.7 L187.3 159.4 L188.7 160.0 L190.1 160.6 L191.3 161.4 L192.2 162.6 L192.4 164.1 L191.9 165.5 L190.7 166.4 L189.3 166.8 L187.8 166.9 L186.3 167.0 L184.8 167.4 L183.6 168.2 L182.8 169.4 L182.7 170.9 L183.1 172.4 L183.8 173.7 L184.6 175.0 L185.1 176.4 L185.2 177.9 L184.7 179.3 L183.7 180.4 L182.3 180.8 L180.8 180.5 L179.6 179.7 L178.6 178.6 L177.7 177.4 L176.7 176.3 L175.4 175.6 L173.9 175.6 L172.6 176.4 L172.0 177.7 L172.1 179.2 L172.8 180.5 L173.7 181.7 L174.5 183.0 L175.1 184.4 L175.0 185.8 L174.3 187.1 L173.1 188.0 L171.7 188.5 L170.2 188.8 L168.8 189.4 L167.8 190.5 L167.3 191.9 L167.3 193.4 L167.7 194.8 L168.1 196.2 L168.3 197.7 L168.0 199.2 L167.2 200.4 L165.8 201.0 L164.3 201.0 L162.9 200.4 L161.7 199.6 L160.4 198.8 L159.0 198.3 L157.5 198.4 L156.3 199.3 L155.7 200.6 L155.8 202.1 L156.4 203.5 L157.0 204.8 L157.6 206.2 L157.6 207.7 L157.0 209.1 L155.8 210.0 L154.4 210.3 L152.9 210.2 L151.4 209.9 L149.9 209.8 L148.5 210.2 L147.4 211.2 L147.1 212.7 L147.8 214.0 L149.1 214.6 L150.6 214.4 L152.0 213.8 L153.2 213.0 L154.5 212.3 L156.0 212.0 L157.4 212.4 L158.5 213.4 L159.0 214.8 L159.0 216.3 L158.9 217.8 L159.0 219.3 L159.4 220.7 L160.2 222.0 L161.3 222.9 L162.7 223.7 L164.0 224.3 L165.4 224.9 L166.6 225.8 L167.5 227.0 L167.8 228.4 L167.4 229.8 L166.2 230.7 L164.7 230.7 L163.4 230.0 L162.2 229.1 L160.9 228.3 L159.5 228.0 L158.1 228.5 L157.2 229.7 L156.8 231.1 L156.9 232.6 L157.2 234.1 L157.4 235.6 L157.3 237.1 L156.7 238.4 L155.5 239.4 L154.1 239.6 L152.7 239.2 L151.5 238.2 L150.7 236.9 L150.0 235.6 L149.2 234.3 L148.1 233.3 L146.7 232.9 L145.2 233.4 L144.3 234.5 L144.3 236.0 L145.1 237.3 L146.3 238.1 L147.7 238.7 L149.1 239.2 L150.4 240.0 L151.3 241.2 L151.6 242.6 L150.8 243.9 L149.4 244.3 L148.0 243.7 L146.9 242.7 L145.8 241.7 L144.4 241.2 L143.0 241.6 L142.1 242.9 L142.2 244.3 L142.7 245.7 L143.3 247.1 L143.3 248.6 L142.6 249.9 L141.2 250.3 L139.8 249.8 L138.9 248.6 L138.2 247.2 L137.5 245.9 L136.5 244.8 L135.1 244.2 L133.7 244.1 L132.4 244.9 L131.6 246.2 L131.6 247.6 L132.2 249.0 L133.2 250.1 L134.2 251.2 L134.8 252.6 L134.6 254.0 L133.5 255.0 L132.0 255.2 L130.5 254.9 L129.1 254.6 L127.6 254.7 L126.4 255.6 L126.1 257.0 L126.7 258.4 L128.0 259.1 L129.4 259.4 L130.9 259.5 L132.4 259.8 L133.6 260.7 L134.0 262.1 L133.3 263.5 L132.0 264.1 L130.5 264.0 L129.1 263.5 L127.7 263.1 L126.2 263.2 L125.0 264.0 L124.3 265.4 L124.4 266.9 L125.0 268.2 L126.0 269.3 L127.1 270.4 L128.1 271.5 L128.9 272.8 L129.0 274.3 L128.6 275.7 L127.6 276.8 L126.2 277.4 L124.7 277.6 L123.2 277.7 L121.7 277.9 L120.4 278.5 L119.4 279.6 L119.1 281.0 L119.8 282.3 L121.1 283.1 L122.6 283.3 L124.0 283.4 L125.5 283.8 L126.6 284.7 L127.0 286.1 L126.3 287.5 L125.1 288.3 L123.6 288.6 L122.2 288.6 L120.7 288.3 L119.2 288.1 L117.7 288.2 L116.3 288.8 L115.3 289.9 L114.8 291.3 L115.0 292.8 L115.6 294.1 L116.4 295.3 L117.3 296.5 L118.1 297.8 L118.6 299.2 L118.6 300.7 L118.0 302.0 L116.7 302.8 L115.2 302.8 L113.9 302.2 L112.6 301.5 L111.2 300.8 L109.8 300.6 L108.4 301.1 L107.4 302.3 L107.0 303.7 L106.9 305.2 L107.0 306.7 L107.0 308.2 L106.7 309.6 L105.9 310.9 L104.7 311.8 L103.3 312.1 L101.8 311.8 L100.5 311.1 L99.2 310.4 L97.7 310.1 L96.3 310.5 L95.4 311.7 L95.2 313.2 L95.6 314.6 L96.2 316.0 L96.5 317.5 L96.6 319.0 L96.1 320.4 L95.1 321.5 L93.8 322.2 L92.3 322.5 L90.8 322.5 L89.3 322.4 L87.8 322.4 L86.4 322.7 L85.1 323.4 L84.2 324.6 L83.9 326.1 L84.4 327.5 L85.3 328.6 L86.6 329.4 L88.1 329.8 L89.5 330.2 L90.8 330.9 L91.8 332.1 L92.1 333.5 L91.6 335.0 L90.5 336.0 L89.2 336.7 L87.8 337.3 L86.5 337.9 L85.3 338.9 L84.6 340.2 L84.5 341.7 L85.0 343.0 L86.1 344.1 L87.5 344.6 L89.0 344.9 L90.5 345.0 L92.0 345.2 L93.3 345.9 L94.0 347.1 L93.8 348.6 L92.6 349.5 L91.2 349.4 L90.0 348.4 L89.3 347.1 L88.6 345.8 L87.9 344.5 L86.9 343.4 L85.6 342.8 L84.1 342.9 L83.0 343.9 L82.6 345.3 L83.0 346.8 L83.8 348.0 L84.8 349.2 L85.5 350.5 L85.7 352.0 L85.1 353.3 L83.9 354.2 L82.4 354.4 L80.9 354.3 L79.4 354.3 L78.0 354.8 L77.1 355.9 L76.9 357.4 L77.4 358.8 L78.3 360.0 L79.2 361.2 L79.6 362.7 L79.3 364.1 L78.4 365.3 L77.1 366.0 L75.7 366.3 L74.2 366.4 L72.7 366.5 L71.3 367.0 L70.1 368.0 L69.6 369.3 L69.9 370.8 L71.0 371.8 L72.4 372.2 L73.9 372.0 L75.2 371.3 L76.4 370.4 L77.7 369.6 L79.1 369.1 L80.6 369.2 L81.8 370.1 L82.1 371.5 L81.4 372.8 L80.1 373.5 L78.6 373.6 L77.1 373.4 L75.6 373.3 L74.2 373.6 L73.1 374.6 L72.9 376.0 L73.5 377.3 L74.8 378.2 L76.2 378.7 L77.6 379.2 L78.8 380.1 L79.5 381.4 L79.5 382.9 L79.0 384.3 L78.1 385.5 L77.0 386.5 L75.8 387.4 L74.7 388.4 L73.8 389.6 L73.4 391.1 L73.6 392.5 L74.5 393.7 L75.8 394.5 L77.3 394.7 L78.8 394.5 L80.2 394.1 L81.7 393.8 L83.2 393.8 L84.6 394.4 L85.4 395.6 L85.2 397.1 L84.2 398.1 L82.8 398.4 L81.3 398.0 L79.9 397.4 L78.6 396.8 L77.1 396.6 L75.6 397.0 L74.5 397.9 L73.9 399.3 L74.1 400.8 L74.9 402.1 L76.0 403.0 L77.4 403.7 L78.8 404.3 L80.1 405.0 L80.9 406.2 L81.0 407.7 L80.3 409.0 L79.1 409.9 L77.8 410.7 L76.7 411.6 L76.0 413.0 L76.2 414.4 L77.1 415.6 L78.4 416.4 L79.7 417.0 L81.0 417.8 L81.8 419.1 L81.9 420.6 L81.2 421.9 L80.1 423.0 L79.0 423.9 L78.0 425.1 L77.8 426.5 L78.4 427.9 L79.7 428.6 L81.2 428.8 L82.7 428.8 L84.1 429.1 L85.3 430.1 L85.6 431.5 L85.0 432.9 L83.8 433.8 L82.5 434.5 L81.2 435.3 L80.4 436.5 L80.4 438.0 L81.2 439.3 L82.4 440.1 L83.8 440.6 L85.3 440.9 L86.7 441.3 L88.0 442.1 L88.9 443.2 L89.2 444.7 L88.8 446.1 L87.6 447.0 L86.2 447.4 L84.7 447.6 L83.2 447.9 L82.0 448.7 L81.3 450.0 L81.5 451.5 L82.6 452.5 L84.1 452.6 L85.4 452.1 L86.8 451.4 L88.2 451.0 L89.6 451.5 L90.3 452.8 L90.0 454.2 L89.0 455.3 L87.8 456.2 L86.6 457.1 L85.8 458.3 L85.6 459.8 L86.2 461.1 L87.5 461.8 L89.0 461.8 L90.4 461.2 L91.7 460.4 L93.0 459.8 L94.5 459.8 L95.7 460.7 L96.1 462.2 L95.6 463.6 L94.6 464.7 L93.6 465.8 L92.8 467.0 L92.6 468.5 L93.3 469.8 L94.6 470.6 L96.1 470.8 L97.5 470.9 L99.0 471.3 L100.1 472.3 L100.4 473.8 L99.7 475.1 L98.4 475.8 L97.0 476.0 L95.5 476.1 L94.0 476.4 L92.8 477.3 L92.3 478.7 L92.7 480.2 L93.6 481.3 L94.8 482.2 L96.1 483.0 L97.2 484.0 L97.7 485.4 L97.3 486.8 L96.1 487.7 L94.6 487.5 L93.5 486.5 L92.6 485.3 L91.6 484.2 L90.4 483.3 L89.0 483.0 L87.6 483.4 L86.5 484.5 L85.9 485.8 L85.5 487.3 L85.0 488.7 L83.9 489.7 L82.5 490.0 L81.0 489.6 L79.8 488.8 L78.4 488.1 L76.9 488.1 L75.8 489.0 L75.5 490.5 L75.9 491.9 L76.7 493.2 L77.7 494.3 L78.7 495.5 L79.3 496.8 L79.4 498.3 L78.9 499.7 L78.0 500.9 L76.8 501.8 L75.6 502.7 L74.6 503.8 L74.1 505.2 L74.2 506.7 L74.8 508.1 L75.8 509.3 L76.7 510.4 L77.3 511.8 L77.1 513.3 L76.0 514.4 L74.6 514.7 L73.1 514.5 L71.6 514.3 L70.2 514.6 L69.0 515.5 L68.6 517.0 L68.8 518.4 L69.5 519.8 L70.5 520.9 L71.5 522.0 L72.5 523.2 L73.1 524.5 L73.2 526.0 L72.7 527.4 L71.5 528.3 L70.1 528.3 L68.7 527.7 L67.5 526.8 L66.3 525.9 L64.9 525.4 L63.5 525.6 L62.4 526.6 L62.2 528.1 L62.8 529.5 L63.6 530.7 L64.4 532.0 L64.6 533.4 L63.9 534.7 L62.5 535.2 L61.1 534.7 L59.9 533.8 L58.7 532.8 L57.5 532.0 L56.0 531.6 L54.5 531.7 L53.2 532.4 L52.4 533.7 L52.2 535.2 L52.6 536.6 L53.2 538.0 L53.9 539.3 L54.3 540.7 L54.3 542.2 L53.7 543.6 L52.7 544.7 L51.5 545.6 L50.3 546.6 L49.5 547.8 L49.2 549.3 L49.5 550.7 L50.4 551.9 L51.5 552.9 L52.6 553.9 L53.5 555.1 L53.8 556.6 L53.4 558.0 L52.2 558.8 L50.7 559.2 L49.2 559.3 L47.8 559.7 L46.7 560.7 L46.5 562.2 L47.2 563.5 L48.4 564.4 L49.8 565.0 L51.0 565.9 L51.8 567.1 L51.7 568.6 L50.8 569.8 L49.4 570.3 L48.0 570.5 L46.5 570.7 L45.1 571.3 L44.1 572.5 L43.8 573.9 L44.1 575.4 L44.8 576.7 L45.4 578.1 L45.8 579.5 L45.7 581.0 L44.9 582.2 L43.7 583.1 L42.3 583.6 L40.9 584.1 L39.6 584.9 L38.7 586.1 L38.6 587.6 L39.3 588.9 L40.5 589.7 L42.0 590.0 L43.5 590.2 L44.9 590.7 L45.0 594.0"/></g>
<g fill="none" stroke="#d4d4d4" stroke-width="1" shape-rendering="crispEdges"><circle cx="407" cy="407" r="520"/><path d="M416.50 7.61A399.5 399.5 0 1 1 395.50 7.67"/><path d="M416.50 127.66A279.5 279.5 0 1 1 395.50 127.74"/><path d="M416.50 247.78A159.5 159.5 0 1 1 395.50 247.92"/></g>
<circle cx="407" cy="407" r="39.5" stroke="#ff1010" stroke-width="1.8" fill="none"/>
<g font-family="Liberation Mono, monospace" font-size="10.5" font-weight="bold" fill="#f8f4a8" text-anchor="middle"><text x="405.5" y="11">313</text><text x="405.5" y="131">219</text><text x="405.5" y="251">125</text><text x="405.5" y="371">31</text></g>
<g><rect x="143.2" y="10.2" width="7" height="1.7" fill="#ff8c00"/><path d="M133.2 41.7H140.2M136.7 38.2V45.2" stroke="#ff8c00" stroke-width="1.5" fill="none"/><path d="M168.2 95.7H173.2" stroke="#ff8c00" stroke-width="1.3"/><circle cx="170.7" cy="95.7" r="4.6" stroke="#ff8c00" stroke-width="1.2" fill="none"/><path d="M533.0 83.3H540.0M536.5 79.8V86.8" stroke="#ffff00" stroke-width="1.5" fill="none"/><path d="M636.5 45.5H643.5M640.0 42.0V49.0" stroke="#ffff00" stroke-width="1.5" fill="none"/><rect x="738.2" y="111.4" width="7" height="1.7" fill="#ff6a00"/><rect x="791.0" y="103.2" width="7" height="1.7" fill="#ff6a00"/><path d="M776.0 173.0H781.0M778.5 170.5V175.5" stroke="#ff6a00" stroke-width="1.3" fill="none"/><circle cx="778.5" cy="173.0" r="4.6" stroke="#ff6a00" stroke-width="1.2" fill="none"/><rect x="750.6" y="196.4" width="7" height="1.7" fill="#ffcc00"/><rect x="676.8" y="191.5" width="7" height="1.7" fill="#ffaa00"/><rect x="685.6" y="221.4" width="7" height="1.7" fill="#ffaa00"/><rect x="690.9" y="224.5" width="7" height="1.7" fill="#ff8c00"/><rect x="668.9" y="227.5" width="7" height="1.7" fill="#ffaa00"/><rect x="672.9" y="230.5" width="7" height="1.7" fill="#ff8c00"/><rect x="699.6" y="229.6" width="7" height="1.7" fill="#ffcc00"/><rect x="716.9" y="225.6" width="7" height="1.7" fill="#ff6a00"/><rect x="714.6" y="227.4" width="7" height="1.7" fill="#ffaa00"/><rect x="751.5" y="220.7" width="7" height="1.7" fill="#ff8c00"/><rect x="754.1" y="222.4" width="7" height="1.7" fill="#ffcc00"/><rect x="668.0" y="238.6" width="7" height="1.7" fill="#ffaa00"/><rect x="632.0" y="242.5" width="7" height="1.7" fill="#ffaa00"/><rect x="722.5" y="240.7" width="7" height="1.7" fill="#ff6a00"/><rect x="705.8" y="247.4" width="7" height="1.7" fill="#ffaa00"/><rect x="680.8" y="251.6" width="7" height="1.7" fill="#ff6a00"/><rect x="691.7" y="262.7" width="7" height="1.7" fill="#ffcc00"/><rect x="685.6" y="264.8" width="7" height="1.7" fill="#ff8c00"/><rect x="625.0" y="263.6" width="7" height="1.7" fill="#ffaa00"/><rect x="726.0" y="261.6" width="7" height="1.7" fill="#ff8c00"/><rect x="750.9" y="274.6" width="7" height="1.7" fill="#ffaa00"/><path d="M617.6 267.3H624.6M621.1 263.8V270.8" stroke="#ff8c00" stroke-width="1.5" fill="none"/><path d="M734.9 259.5H741.9M738.4 256.0V263.0" stroke="#ffaa00" stroke-width="1.5" fill="none"/><path d="M757.0 282.5H764.0M760.5 279.0V286.0" stroke="#ffaa00" stroke-width="1.5" fill="none"/><rect x="729.2" y="315.9" width="7" height="1.7" fill="#ffaa00"/><rect x="783.2" y="309.9" width="7" height="1.7" fill="#ffaa00"/><rect x="732.5" y="349.9" width="7" height="1.7" fill="#ffaa00"/><rect x="757.2" y="345.2" width="7" height="1.7" fill="#ffcc00"/><rect x="686.5" y="519.9" width="7" height="1.7" fill="#ffaa00"/><path d="M662.2 590.7H669.2M665.7 587.2V594.2" stroke="#ffff00" stroke-width="1.5" fill="none"/><path d="M739.2 694.0H746.2M742.7 690.5V697.5" stroke="#ff6a00" stroke-width="1.5" fill="none"/><rect x="789.8" y="607.5" width="7" height="1.7" fill="#ff8c00"/></g>
<rect x="9.5" y="759.5" width="243" height="43" fill="#000" stroke="#a8a8a8"/>
<g font-family="Liberation Sans, sans-serif" font-size="9.5"><text x="13.3" y="770.6" fill="#e0e0e0" textLength="35" lengthAdjust="spacingAndGlyphs">Symbols</text><text x="52.8" y="770.6" fill="#e0e0e0" textLength="17" lengthAdjust="spacingAndGlyphs">-CG</text><text x="77.9" y="770.6" fill="#e0e0e0" textLength="14" lengthAdjust="spacingAndGlyphs">-IC</text><text x="99" y="770.6" fill="#e0e0e0" textLength="19.7" lengthAdjust="spacingAndGlyphs">+CG</text><text x="123.7" y="770.6" fill="#e0e0e0" textLength="17" lengthAdjust="spacingAndGlyphs">+IC</text><text x="153.3" y="770.8" fill="#e0e0e0" textLength="90" lengthAdjust="spacingAndGlyphs">Strike age color codes</text><text x="13.3" y="783.6" fill="#e0e0e0" textLength="27.5" lengthAdjust="spacingAndGlyphs">Recent</text><text x="13.3" y="796.5" fill="#e0e0e0" textLength="14" lengthAdjust="spacingAndGlyphs">Old</text><text x="153.5" y="783.5" fill="#ffff00" textLength="16" lengthAdjust="spacingAndGlyphs">15+</text><text x="188.4" y="783.5" fill="#ffcc00" textLength="16" lengthAdjust="spacingAndGlyphs">30+</text><text x="223" y="783.5" fill="#ffaa00" textLength="16" lengthAdjust="spacingAndGlyphs">45+</text><text x="153.5" y="796.3" fill="#ff8c00" textLength="16" lengthAdjust="spacingAndGlyphs">60+</text><text x="188.4" y="796.3" fill="#ff6a00" textLength="16" lengthAdjust="spacingAndGlyphs">75+</text><text x="223" y="796.3" fill="#ff4400" textLength="16" lengthAdjust="spacingAndGlyphs">90+</text></g>
<path d="M57.9 780.3H62.9" stroke="#00ffff" stroke-width="1.3"/><circle cx="60.4" cy="780.3" r="4.6" stroke="#00ffff" stroke-width="1.2" fill="none"/><rect x="82.0" y="779.5" width="7" height="1.7" fill="#00ffff"/><path d="M107.9 780.3H112.9M110.4 777.8V782.8" stroke="#00ffff" stroke-width="1.3" fill="none"/><circle cx="110.4" cy="780.3" r="4.6" stroke="#00ffff" stroke-width="1.2" fill="none"/><path d="M131.9 780.3H138.9M135.4 776.8V783.8" stroke="#00ffff" stroke-width="1.5" fill="none"/>
<path d="M57.9 793.3H62.9" stroke="#ffff00" stroke-width="1.3"/><circle cx="60.4" cy="793.3" r="4.6" stroke="#ffff00" stroke-width="1.2" fill="none"/><rect x="82.0" y="792.5" width="7" height="1.7" fill="#ffff00"/><path d="M107.9 793.3H112.9M110.4 790.8V795.8" stroke="#ffff00" stroke-width="1.3" fill="none"/><circle cx="110.4" cy="793.3" r="4.6" stroke="#ffff00" stroke-width="1.2" fill="none"/><path d="M131.9 793.3H138.9M135.4 789.8V796.8" stroke="#ffff00" stroke-width="1.5" fill="none"/>
<rect x="685" y="792" width="121" height="14" fill="#000"/>
<text x="688.5" y="802.3" font-family="Liberation Sans, sans-serif" font-size="9.8" fill="#f0f0f0" textLength="113.5" lengthAdjust="spacingAndGlyphs">©2005 Astrogenic Systems</text>
</g>
<g font-family="Liberation Sans, sans-serif"><rect x="812.5" y="8.5" width="319" height="318" rx="6" fill="#000" stroke="#c8c8c8"/><rect x="812.5" y="333.5" width="319" height="114" rx="6" fill="#000" stroke="#c8c8c8"/><rect x="812.5" y="453.5" width="319" height="349" rx="6" fill="#000" stroke="#c8c8c8"/><rect x="819.5" y="16.5" width="57" height="17" fill="#600000" stroke="#c8c8c8"/><text x="824" y="30" font-size="13" fill="#c8c8c8" font-weight="bold" textLength="48.5" lengthAdjust="spacingAndGlyphs">STRIKE</text><rect x="883.5" y="16.5" width="57" height="17" fill="#333" stroke="#c8c8c8"/><text x="890" y="30" font-size="13" fill="#b8b8b8" font-weight="bold" textLength="43.5" lengthAdjust="spacingAndGlyphs">NOISE</text><rect x="994.5" y="16.5" width="127" height="17" fill="#333" stroke="#c8c8c8"/><text x="998.5" y="30" font-size="13" fill="#fff" font-weight="bold" textLength="53" lengthAdjust="spacingAndGlyphs">Bng 33°</text><text x="1118" y="30" font-size="13" fill="#00ff00" font-weight="bold" text-anchor="end" textLength="42.5" lengthAdjust="spacingAndGlyphs">335mi</text><rect x="821.5" y="64.5" width="81" height="15" fill="#5a5a5a" stroke="#b4b4b4"/><text x="862.0" y="77" font-size="12" fill="#e8e8e8" text-anchor="middle" textLength="65.5" lengthAdjust="spacingAndGlyphs">Strikes/min</text><rect x="931.5" y="64.5" width="81" height="15" fill="#5a5a5a" stroke="#b4b4b4"/><text x="972.0" y="77" font-size="12" fill="#e8e8e8" text-anchor="middle" textLength="57" lengthAdjust="spacingAndGlyphs">Close/min</text><rect x="1041.5" y="64.5" width="81" height="15" fill="#5a5a5a" stroke="#b4b4b4"/><text x="1082.0" y="77" font-size="12" fill="#e8e8e8" text-anchor="middle" textLength="63" lengthAdjust="spacingAndGlyphs">Noises/min</text><text x="903" y="111" font-size="28" fill="#fff" font-weight="bold" text-anchor="end" textLength="19" lengthAdjust="spacingAndGlyphs">0</text><text x="1013" y="111" font-size="28" fill="#fff" font-weight="bold" text-anchor="end" textLength="19" lengthAdjust="spacingAndGlyphs">0</text><text x="1123" y="111" font-size="28" fill="#c0c0c0" font-weight="bold" text-anchor="end" textLength="19" lengthAdjust="spacingAndGlyphs">0</text><text x="903" y="143" font-size="13" fill="#fff" text-anchor="end" textLength="76.5" lengthAdjust="spacingAndGlyphs">Total Strikes</text><text x="1013" y="143" font-size="13" fill="#fff" text-anchor="end" textLength="68.5" lengthAdjust="spacingAndGlyphs">Total Close</text><text x="1123" y="143" font-size="13" fill="#c0c0c0" text-anchor="end" textLength="75" lengthAdjust="spacingAndGlyphs">Total Noises</text><text x="903" y="161" font-size="13" fill="#fff" text-anchor="end" textLength="23.8" lengthAdjust="spacingAndGlyphs">666</text><text x="1013" y="161" font-size="13" fill="#fff" text-anchor="end">0</text><text x="1123" y="161" font-size="13" fill="#fff" text-anchor="end" textLength="15.2" lengthAdjust="spacingAndGlyphs">70</text><text x="821" y="215" font-size="13" fill="#c0c0c0" textLength="165.5" lengthAdjust="spacingAndGlyphs">Lightning type distribution</text><line x1="821" y1="217.5" x2="1124" y2="217.5" stroke="#a0a0a0"/><text x="821" y="237" font-size="13" fill="#fff" font-weight="bold" textLength="85" lengthAdjust="spacingAndGlyphs">Cloud-ground</text><text x="821" y="291" font-size="13" fill="#fff" font-weight="bold" textLength="64" lengthAdjust="spacingAndGlyphs">Intracloud</text><text x="821" y="261" font-size="13" fill="#c0c0c0" textLength="38.5" lengthAdjust="spacingAndGlyphs">Count</text><text x="821" y="315" font-size="13" fill="#c0c0c0" textLength="38.5" lengthAdjust="spacingAndGlyphs">Count</text><path d="M913.5 232H920.5M917 228.5V235.5M913.5 286H920.5M917 282.5V289.5" stroke="#fff" stroke-width="1.3"/><rect x="1016" y="231" width="6.5" height="2" fill="#fff"/><rect x="1016" y="285" width="6.5" height="2" fill="#fff"/><text x="925" y="261" font-size="13" fill="#fff" font-weight="bold" textLength="15.5" lengthAdjust="spacingAndGlyphs">91</text><text x="1028" y="261" font-size="13" fill="#fff" font-weight="bold" textLength="24" lengthAdjust="spacingAndGlyphs">105</text><text x="925" y="315" font-size="13" fill="#fff" font-weight="bold" textLength="16" lengthAdjust="spacingAndGlyphs">58</text><text x="1028" y="315" font-size="13" fill="#fff" font-weight="bold" textLength="24" lengthAdjust="spacingAndGlyphs">412</text><text x="979" y="237" font-size="13" fill="#fff" font-weight="bold" textLength="29.5" lengthAdjust="spacingAndGlyphs">14%</text><text x="1082.5" y="237" font-size="13" fill="#fff" font-weight="bold" textLength="29" lengthAdjust="spacingAndGlyphs">16%</text><text x="979" y="291" font-size="13" fill="#fff" font-weight="bold" textLength="21.5" lengthAdjust="spacingAndGlyphs">9%</text><text x="1082.5" y="291" font-size="13" fill="#fff" font-weight="bold" textLength="29" lengthAdjust="spacingAndGlyphs">62%</text><rect x="925.5" y="227.5" width="50" height="10" rx="2" fill="#000" stroke="#808080"/><rect x="926.0" y="228.0" width="7" height="9" fill="#ff0000"/><rect x="1028.5" y="227.5" width="50" height="10" rx="2" fill="#000" stroke="#808080"/><rect x="1029.0" y="228.0" width="8" height="9" fill="#99ccff"/><rect x="925.5" y="281.5" width="50" height="10" rx="2" fill="#000" stroke="#808080"/><rect x="926.0" y="282.0" width="4" height="9" fill="#ff66aa"/><rect x="1028.5" y="281.5" width="50" height="10" rx="2" fill="#000" stroke="#808080"/><rect x="1029.0" y="282.0" width="30" height="9" fill="#00ff00"/><text x="821.5" y="353" font-size="17" fill="#00ff00" font-weight="bold" textLength="224" lengthAdjust="spacingAndGlyphs">10/17/2025 10:09:16 AM</text><line x1="821" y1="358.5" x2="1123" y2="358.5" stroke="#a0a0a0"/><text x="821.4" y="388" font-size="13" fill="#fff" textLength="49" lengthAdjust="spacingAndGlyphs">Squelch</text><text x="821.4" y="408" font-size="13" fill="#fff" textLength="73.5" lengthAdjust="spacingAndGlyphs">Persistence</text><text x="821.4" y="428" font-size="13" fill="#fff" textLength="40.5" lengthAdjust="spacingAndGlyphs">Range</text><text x="909.6" y="388" font-size="13" fill="#fff">0</text><text x="909.6" y="408" font-size="13" fill="#fff" textLength="42" lengthAdjust="spacingAndGlyphs">90 min</text><text x="909.6" y="428" font-size="13" fill="#fff" textLength="42" lengthAdjust="spacingAndGlyphs">313 mi</text><text x="981.4" y="388" font-size="13" fill="#fff" textLength="44.3" lengthAdjust="spacingAndGlyphs">Upload</text><text x="981.4" y="408" font-size="13" fill="#fff" textLength="51.5" lengthAdjust="spacingAndGlyphs">Capture</text><text x="981.4" y="428" font-size="13" fill="#fff" textLength="53.3" lengthAdjust="spacingAndGlyphs">Receiver</text><text x="1061.4" y="388" font-size="13" fill="#c0c0c0" textLength="54.8" lengthAdjust="spacingAndGlyphs">Disabled</text><text x="1061.4" y="408" font-size="13" fill="#00e000" textLength="37.3" lengthAdjust="spacingAndGlyphs">Active</text><text x="1061.4" y="428" font-size="13" fill="#00e000" textLength="51" lengthAdjust="spacingAndGlyphs">Enabled</text><text x="821.4" y="475" font-size="13" fill="#c0c0c0" textLength="44.3" lengthAdjust="spacingAndGlyphs">Uptime</text><text x="821.4" y="498" font-size="13" fill="#c0c0c0" textLength="61.5" lengthAdjust="spacingAndGlyphs">Peak rate</text><text x="822.6" y="528" font-size="13" fill="#c0c0c0" textLength="76.7" lengthAdjust="spacingAndGlyphs">Trend graph</text><text x="909.6" y="475" font-size="13" fill="#fff" textLength="36.9" lengthAdjust="spacingAndGlyphs">05:39</text><text x="909.3" y="498" font-size="13" fill="#fff" textLength="42.8" lengthAdjust="spacingAndGlyphs">16/min</text><text x="908.8" y="528" font-size="13" fill="#fff" textLength="42" lengthAdjust="spacingAndGlyphs">60 min</text><text x="981.4" y="475" font-size="13" fill="#c0c0c0" textLength="62.2" lengthAdjust="spacingAndGlyphs">Peak time</text><text x="981.4" y="498" font-size="13" fill="#fff" textLength="51.5" lengthAdjust="spacingAndGlyphs">4:48 AM</text><text x="1061.4" y="475" font-size="13" fill="#c0c0c0" textLength="24.9" lengthAdjust="spacingAndGlyphs">Plot</text><text x="1061.4" y="498" font-size="13" fill="#fff" textLength="36.4" lengthAdjust="spacingAndGlyphs">Strike</text><g stroke="#c8c8c8" fill="none"><line x1="822" y1="777.5" x2="1089" y2="777.5"/><line x1="1088.5" y1="542" x2="1088.5" y2="778"/><path d="M1084 542.5H1089M1084 620.5H1089M1084 699.5H1089M1088 581.5H1093M1088 660.5H1093M1088 738.5H1093"/><path d="M822.5 777V782M866.5 777V781M911.5 777V781M955.5 777V781M999.5 777V781M1044.5 777V781"/></g><g font-size="12" fill="#c8c8c8"><text x="1092" y="547">30</text><text x="1092" y="625">20</text><text x="1092" y="704">10</text><text x="820" y="793">60</text><text x="864.5" y="793">50</text><text x="909" y="793">40</text><text x="953" y="793">30</text><text x="997" y="793">20</text><text x="1042.5" y="793">10</text><text x="1087" y="793">0</text><text x="1100" y="793">min</text></g></g>
<g fill="none" stroke-width="1.2" stroke-linejoin="round"><path d="M822.4 777.6 L822.4 770.2 L822.5 777.6 L825.4 777.6 L825.4 769.1 L826.5 768.5 L826.5 758.9 L827.6 757.8 L827.6 755.0 L828.5 753.5 L829.6 753.5 L829.9 757.8 L831.0 758.3 L831.0 766.3 L831.6 766.6 L831.9 773.6 L832.7 774.2 L832.8 777.6 L835.3 777.6 L835.6 773.1 L836.4 772.5 L836.7 765.1 L837.5 764.6 L837.5 761.5 L840.7 761.5 L840.9 769.7 L841.8 770.2 L841.8 777.6 L843.2 777.6 L843.5 773.1 L844.6 772.5 L844.6 766.8 L845.5 766.3 L845.5 763.2 L846.9 761.7 L847.4 760.6 L848.0 759.2 L848.6 758.3 L848.6 755.2 L849.4 754.7 L849.7 745.9 L850.6 745.6 L850.6 738.5 L853.7 738.5 L853.7 743.9 L854.8 744.5 L854.8 755.8 L855.4 756.4 L855.5 761.7 L855.7 756.7 L856.5 756.1 L856.5 753.3 L857.1 756.7 L858.5 760.0 L858.8 766.3 L859.6 766.8 L859.6 769.7 L859.6 769.7 L864.5 769.7 L864.8 765.4 L865.4 764.9 L865.4 759.2 L866.2 758.6 L866.5 755.5 L867.3 753.3 L867.9 753.3 L868.2 757.8 L868.5 761.7 L868.8 758.9 L869.9 757.8 L870.2 755.5 L870.5 753.3 L871.0 757.8 L871.6 758.3 L871.9 761.7 L873.3 762.3 L873.9 766.3 L874.4 766.8 L874.4 769.7 L879.5 769.7 L879.8 765.1 L880.4 761.7 L882.3 761.7 L882.9 766.3 L883.5 766.8 L883.8 769.4 L885.7 769.4 L886.3 768.0 L887.2 763.4 L888.0 761.7 L888.9 761.7 L888.9 766.3 L889.7 765.7 L890.6 763.4 L891.4 761.7 L892.0 765.7 L892.5 766.3 L892.8 768.8 L894.2 769.7 L894.8 771.4 L895.9 773.1 L896.5 777.0 L897.1 773.1 L897.6 769.7 L900.5 769.7 L901.0 772.5 L901.6 774.8 L902.0 777.0 L898.0 769.7 L900.5 769.7 L901.4 772.5 L901.7 775.9 L902.5 777.0 L911.3 777.0 L913.0 774.8 L913.6 771.1 L914.4 770.2 L914.4 765.1 L915.3 764.6 L915.3 761.5 L917.5 761.5 L917.8 765.7 L918.4 766.3 L918.4 769.4 L923.2 769.4 L923.5 773.6 L924.3 774.2 L924.6 777.0 L925.2 771.1 L926.3 769.4 L929.1 769.4 L929.4 773.6 L930.3 774.2 L930.6 777.0 L931.4 771.1 L932.3 769.4 L935.4 769.4 L935.7 773.6 L936.5 774.2 L936.8 777.0" stroke="#fff"/><path d="M945.4 777.0 L945.9 774.8 L946.2 771.1 L947.6 769.4 L950.2 769.4 L950.5 773.6 L951.0 774.2 L951.3 777.0 L951.6 777.0 L952.2 773.6 L952.7 770.8 L953.9 769.4 L954.4 766.3 L955.0 764.6 L955.3 757.2 L956.1 756.7 L956.4 753.3 L956.7 756.7 L957.0 760.6 L957.8 760.0 L958.1 758.3 L958.4 755.5 L959.2 753.3 L959.5 758.9 L960.1 762.3 L960.7 762.9 L960.9 768.5 L961.8 769.7 L962.3 773.6 L963.5 774.2 L963.8 777.0 L968.3 777.0 L968.6 773.6 L969.4 769.4 L977.6 769.4 L977.9 773.6 L978.5 774.2 L978.8 777.0" stroke="#fff"/><path d="M1054.1 777.5 L1055.6 772.8 L1057.1 769.6 L1058.6 769.6 L1060.0 772.8 L1060.8 777.5" stroke="#fff"/><path d="M1073.3 777.5 L1074.8 772.8 L1076.3 769.6 L1078.5 769.6 L1079.2 772.8 L1080.0 777.5" stroke="#fff"/><path d="M883.2 777.0 L884.0 772.5 L885.7 769.4 L887.4 769.4 L888.6 771.4 L889.4 773.6 L889.7 777.0" stroke="#ff66b0"/><path d="M954.4 776.2 L955.0 773.6 L955.8 770.2 L956.7 769.4 L959.0 769.4 L959.8 772.5 L960.4 774.8 L960.7 776.2" stroke="#ff66b0"/><path d="M836.4 774.5 L837.3 769.7 L839.5 769.4 L840.7 770.8 L840.7 773.9" stroke="#00ff00" stroke-width="1.5"/><path d="M883.2 770.2 L883.8 771.4 L884.6 771.9 L884.6 776.5 L886.0 776.2 L887.4 771.9 L888.6 769.4" stroke="#00ff00" stroke-width="1.5"/><path d="M955.6 766.3 L956.4 761.5 L957.3 767.4 L957.5 769.7 L958.4 765.7 L959.2 762.9 L959.5 765.1" stroke="#00ff00" stroke-width="1.5"/><path d="M972.0 770.5 L973.4 771.4 L973.7 775.9 L974.8 776.5" stroke="#00ff00" stroke-width="1.5"/><path d="M972.5 775.9 L973.4 771.4 L974.2 770.2" stroke="#ff0000"/></g>
</svg></body></html>
